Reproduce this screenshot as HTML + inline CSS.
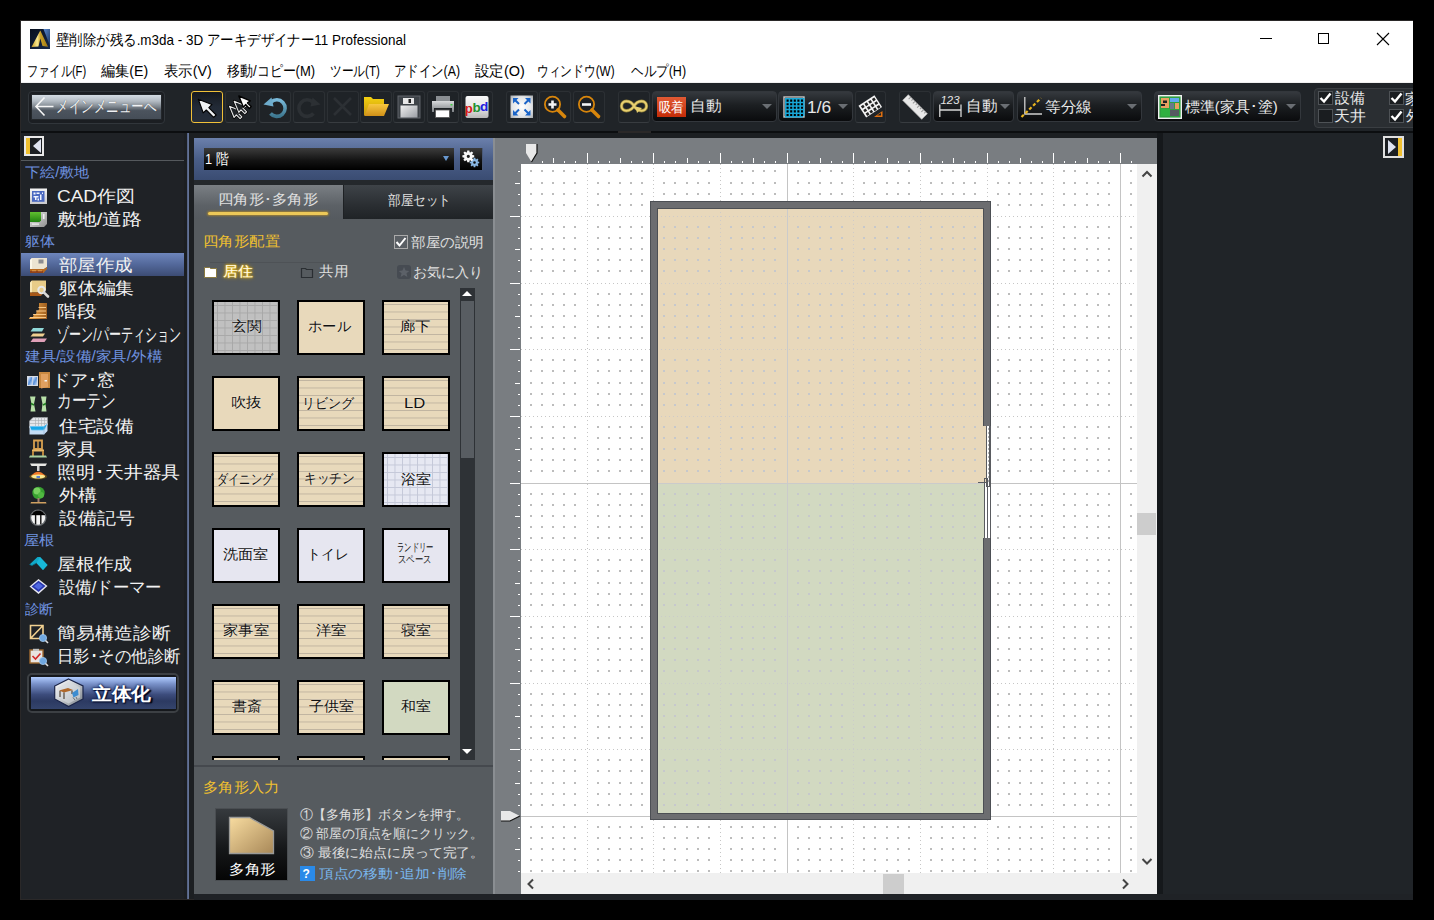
<!DOCTYPE html><html><head><meta charset="utf-8"><style>

*{box-sizing:border-box;margin:0;padding:0}
html,body{width:1434px;height:920px;overflow:hidden;background:#000}
body{position:relative;font-family:"Liberation Sans",sans-serif}
.a{position:absolute}
.t{position:absolute;white-space:nowrap;line-height:1}

</style></head><body>
<div class="a" style="left:20px;top:20px;width:1394px;height:880px;background:#2a2828"></div>
<div class="a" style="left:21px;top:21px;width:1392px;height:62px;background:#fff"></div>
<svg class="a" style="left:30px;top:29px" width="20" height="20" viewBox="0 0 20 20">
<defs><linearGradient id="ig" x1="0" y1="0" x2="1" y2="1"><stop offset="0" stop-color="#08101e"/><stop offset="1" stop-color="#16284a"/></linearGradient>
<linearGradient id="ib" x1="0" y1="0" x2="1" y2="1"><stop offset="0" stop-color="#5a8ad0"/><stop offset="1" stop-color="#1a3460"/></linearGradient>
<linearGradient id="ia" x1="0" y1="0" x2="1" y2="0"><stop offset="0" stop-color="#c89a20"/><stop offset=".35" stop-color="#f8e890"/><stop offset=".55" stop-color="#c8a028"/><stop offset="1" stop-color="#a07810"/></linearGradient></defs>
<rect width="20" height="20" fill="url(#ig)"/><path d="M13.5 0 L20 0 L20 17 Z" fill="url(#ib)"/>
<path d="M10.3 1.5 L18 17.8 L12.5 17 L10.3 9.5 L8.5 17.5 L1.5 18 Z" fill="url(#ia)"/></svg>
<div class="t" style="left:55.60px;top:32.00px;font-size:15px;color:#000;transform:scaleX(0.8959);transform-origin:0 0;">壁削除が残る.m3da - 3D アーキデザイナー11 Professional</div>
<div class="a" style="left:21px;top:82px;width:1392px;height:1px;background:#f0f0f0"></div>
<div class="a" style="left:1260px;top:38px;width:12px;height:1px;background:#000"></div>
<div class="a" style="left:1318px;top:33px;width:11px;height:11px;border:1px solid #000"></div>
<svg class="a" style="left:1376px;top:32px" width="14" height="14"><path d="M1 1 L13 13 M13 1 L1 13" stroke="#000" stroke-width="1.1"/></svg>
<div class="t" style="left:26.90px;top:63.10px;font-size:15px;color:#000;transform:scaleX(0.7481);transform-origin:0 0;">ファイル(F)</div>
<div class="t" style="left:101.20px;top:63.10px;font-size:15px;color:#000;transform:scaleX(0.9449);transform-origin:0 0;">編集(E)</div>
<div class="t" style="left:163.70px;top:63.10px;font-size:15px;color:#000;transform:scaleX(0.9551);transform-origin:0 0;">表示(V)</div>
<div class="t" style="left:226.90px;top:63.10px;font-size:15px;color:#000;transform:scaleX(0.8663);transform-origin:0 0;">移動/コピー(M)</div>
<div class="t" style="left:329.72px;top:63.10px;font-size:15px;color:#000;transform:scaleX(0.7794);transform-origin:0 0;">ツール(T)</div>
<div class="t" style="left:393.77px;top:63.10px;font-size:15px;color:#000;transform:scaleX(0.8256);transform-origin:0 0;">アドイン(A)</div>
<div class="t" style="left:474.70px;top:63.10px;font-size:15px;color:#000;transform:scaleX(0.9647);transform-origin:0 0;">設定(O)</div>
<div class="t" style="left:537.44px;top:63.10px;font-size:15px;color:#000;transform:scaleX(0.7825);transform-origin:0 0;">ウィンドウ(W)</div>
<div class="t" style="left:630.60px;top:63.10px;font-size:15px;color:#000;transform:scaleX(0.8369);transform-origin:0 0;">ヘルプ(H)</div>
<div class="a" style="left:21px;top:83px;width:1392px;height:48px;background:#202428"></div>
<div class="a" style="left:21px;top:131px;width:597px;height:2px;background:#0c0e10"></div>
<div class="a" style="left:651px;top:131px;width:762px;height:2px;background:#0c0e10"></div>
<div class="a" style="left:28px;top:91px;width:137px;height:33px;border:1px solid #31363b;border-radius:4px;background:#1b1e22"></div>
<div class="a" style="left:31px;top:94px;width:131px;height:26px;background:linear-gradient(#d4dce4,#b4bcc4 25%,#7c848c 50%,#4c545e 65%,#454d57);border:1px solid #23272b"></div>
<svg class="a" style="left:34px;top:96px" width="22" height="22"><path d="M19.5 10.5 H2.5 M10.5 1.5 L2 10.5 L10.5 19.5" fill="none" stroke="#f6f6f6" stroke-width="1.6"/></svg>
<div class="t" style="left:56.12px;top:97.50px;font-size:17px;color:#f0f2f4;transform:scaleX(0.7396);transform-origin:0 0;text-shadow:0 0 1px rgba(40,44,50,.8)">メインメニューへ</div>
<div class="a" style="left:191px;top:91px;width:32px;height:32px;border:1.5px solid #f0c038;border-radius:3px;background:linear-gradient(#15191f,#222a36 50%,#262e3a)"></div>
<div class="a" style="left:225px;top:91px;width:32px;height:32px;border:1px solid #2c3034;border-bottom-color:#383c40;border-radius:3px;background:#1f2327;"></div>
<div class="a" style="left:259px;top:91px;width:32px;height:32px;border:1px solid #2c3034;border-bottom-color:#383c40;border-radius:3px;background:#1f2327;"></div>
<div class="a" style="left:293px;top:91px;width:32px;height:32px;border:1px solid #2c3034;border-bottom-color:#383c40;border-radius:3px;background:#1f2327;"></div>
<div class="a" style="left:327px;top:91px;width:32px;height:32px;border:1px solid #2c3034;border-bottom-color:#383c40;border-radius:3px;background:#1f2327;"></div>
<div class="a" style="left:360px;top:91px;width:32px;height:32px;border:1px solid #2c3034;border-bottom-color:#383c40;border-radius:3px;background:#1f2327;"></div>
<div class="a" style="left:393px;top:91px;width:32px;height:32px;border:1px solid #2c3034;border-bottom-color:#383c40;border-radius:3px;background:#1f2327;"></div>
<div class="a" style="left:427px;top:91px;width:32px;height:32px;border:1px solid #2c3034;border-bottom-color:#383c40;border-radius:3px;background:#1f2327;"></div>
<div class="a" style="left:461px;top:91px;width:32px;height:32px;border:1px solid #2c3034;border-bottom-color:#383c40;border-radius:3px;background:#1f2327;"></div>
<svg class="a" style="left:191px;top:91px" width="32" height="32"><path d="M7.3 8.3 L20.9 13.6 L17.8 16.6 L25.2 24 L22.6 26.4 L15.3 19 L12.2 21.8 Z" fill="#eef0f2" stroke="#000" stroke-width="1.1" stroke-linejoin="round"/></svg>
<svg class="a" style="left:225px;top:91px" width="32" height="32"><g stroke-linejoin="round"><path d="M4.50 15.30 L9.10 26.50 L11.30 23.90 L15.10 27.70 L16.90 25.90 L13.20 22.20 L16.10 20.10 Z" fill="#1f2327" stroke="#000" stroke-width="2.6"/><path d="M4.50 15.30 L9.10 26.50 L11.30 23.90 L15.10 27.70 L16.90 25.90 L13.20 22.20 L16.10 20.10 Z" fill="#1f2327" stroke="#e8e8e8" stroke-width="1.1"/><path d="M9.20 10.20 L13.80 21.40 L16.00 18.80 L19.80 22.60 L21.60 20.80 L17.90 17.10 L20.80 15.00 Z" fill="none" stroke="#000" stroke-width="2.6"/><path d="M9.20 10.20 L13.80 21.40 L16.00 18.80 L19.80 22.60 L21.60 20.80 L17.90 17.10 L20.80 15.00 Z" fill="#1f2327" stroke="#e8e8e8" stroke-width="1.1"/><path d="M13.80 5.00 L18.40 16.20 L20.60 13.60 L24.40 17.40 L26.20 15.60 L22.50 11.90 L25.40 9.80 Z" fill="#fafafa" stroke="#000" stroke-width="1.4"/></g></svg>
<svg class="a" style="left:259px;top:91px" width="32" height="32"><defs><linearGradient id="ug" x1="0" y1="0" x2="0" y2="1"><stop offset="0" stop-color="#78b8d8"/><stop offset="1" stop-color="#3e7890"/></linearGradient></defs><path d="M12 11.2 A8.3 8.3 0 1 1 11.5 22.5" fill="none" stroke="url(#ug)" stroke-width="3.6"/><path d="M4.5 13.5 L12.5 6.5 L14.5 15.5 Z" fill="#6eaccc"/></svg>
<svg class="a" style="left:293px;top:91px" width="32" height="32"><path d="M20 11.2 A8.3 8.3 0 1 0 20.5 22.5" fill="none" stroke="#2c3034" stroke-width="3.6"/><path d="M27.5 13.5 L19.5 6.5 L17.5 15.5 Z" fill="#2c3034"/></svg>
<svg class="a" style="left:327px;top:91px" width="32" height="32"><path d="M7 7 L24 24 M24 7 L7 24" stroke="#2c3034" stroke-width="2.6"/></svg>
<svg class="a" style="left:360px;top:91px" width="32" height="32"><defs><linearGradient id="fo" x1="0" y1="0" x2="0" y2="1"><stop offset="0" stop-color="#f8c840"/><stop offset="1" stop-color="#d09018"/></linearGradient><linearGradient id="fb" x1="0" y1="0" x2="0" y2="1"><stop offset="0" stop-color="#f4d010"/><stop offset="1" stop-color="#c89810"/></linearGradient></defs><path d="M4 6 L11 6 L13 8 L24 8 L24 24.5 L4 24.5 Z" fill="url(#fb)"/><path d="M9 13 L29 13 L24 25 L4.5 25 Z" fill="url(#fo)"/></svg>
<svg class="a" style="left:393px;top:91px" width="32" height="32"><defs><linearGradient id="fl" x1="0" y1="0" x2="1" y2="1"><stop offset="0" stop-color="#f0f0f0"/><stop offset="1" stop-color="#9a9ea4"/></linearGradient></defs><rect x="5" y="5" width="22" height="22" fill="#3e4348" stroke="#60656a" stroke-width="1"/><rect x="10" y="7" width="11" height="6" fill="#e8e8e8"/><rect x="15.5" y="8" width="2.5" height="4" fill="#222"/><rect x="7.5" y="14.5" width="17" height="12" fill="url(#fl)"/></svg>
<svg class="a" style="left:427px;top:91px" width="32" height="32"><defs><linearGradient id="pr" x1="0" y1="0" x2="0" y2="1"><stop offset="0" stop-color="#d8dadc"/><stop offset="1" stop-color="#7c8084"/></linearGradient></defs><rect x="9" y="5" width="14" height="5" fill="#8a8e92"/><path d="M5 10 H27 V21 H25 V17 H7 V21 H5 Z" fill="url(#pr)"/><rect x="8.5" y="19" width="14" height="7.5" fill="#fff" stroke="#555" stroke-width=".8"/><rect x="23.5" y="13" width="2" height="1.5" fill="#40d040"/></svg>
<svg class="a" style="left:461px;top:91px" width="32" height="32"><defs><linearGradient id="pb" x1="0" y1="0" x2="0" y2="1"><stop offset="0" stop-color="#fafafa"/><stop offset=".6" stop-color="#e0e0e0"/><stop offset="1" stop-color="#b8b8b8"/></linearGradient></defs><rect x="4.5" y="5" width="23" height="22" rx="2" fill="url(#pb)"/><text x="3.8" y="21.5" font-family="Liberation Sans" font-weight="bold" font-size="13.5" fill="#d81818" textLength="8" lengthAdjust="spacingAndGlyphs">p</text><text x="11.5" y="20.5" font-family="Liberation Sans" font-weight="bold" font-size="13.5" fill="#209030">b</text><text x="19" y="19.5" font-family="Liberation Sans" font-weight="bold" font-size="13.5" fill="#2020e0">d</text></svg>
<div class="a" style="left:506px;top:91px;width:32px;height:32px;border:1px solid #2c3034;border-bottom-color:#383c40;border-radius:3px;background:#1f2327;"></div>
<div class="a" style="left:539px;top:91px;width:32px;height:32px;border:1px solid #2c3034;border-bottom-color:#383c40;border-radius:3px;background:#1f2327;"></div>
<div class="a" style="left:573px;top:91px;width:32px;height:32px;border:1px solid #2c3034;border-bottom-color:#383c40;border-radius:3px;background:#1f2327;"></div>
<svg class="a" style="left:506px;top:91px" width="32" height="32"><defs><radialGradient id="fit" cx=".5" cy=".5" r=".7"><stop offset="0" stop-color="#ffffff"/><stop offset=".6" stop-color="#e4e6e8"/><stop offset="1" stop-color="#a8acb0"/></radialGradient></defs><rect x="4.5" y="4.5" width="22.5" height="22.5" fill="url(#fit)"/><g stroke="#1a64c8" stroke-width="2" fill="none"><path d="M8 8 L13 13 M23.5 8 L18.5 13 M8 23.5 L13 18.5 M23.5 23.5 L18.5 18.5"/></g><g fill="#1a64c8"><path d="M7 7 H12.5 L7 12.5 Z M24.5 7 H19 L24.5 12.5 Z M7 24.5 H12.5 L7 19 Z M24.5 24.5 H19 L24.5 19 Z"/></g></svg>
<svg class="a" style="left:539px;top:91px" width="32" height="32"><circle cx="13.5" cy="13.3" r="7.6" fill="#1d2024" stroke="#d8860c" stroke-width="1.8"/><path d="M19 19 L25.5 25.5" stroke="#d8860c" stroke-width="3.6" stroke-linecap="round"/><path d="M13.5 9.5 V17.5 M9.5 13.5 H17.5" stroke="#f4f4f4" stroke-width="2.6"/></svg>
<svg class="a" style="left:573px;top:91px" width="32" height="32"><circle cx="13.5" cy="13.3" r="7.6" fill="#1d2024" stroke="#d8860c" stroke-width="1.8"/><path d="M19 19 L25.5 25.5" stroke="#d8860c" stroke-width="3.6" stroke-linecap="round"/><path d="M9 13.5 H18" stroke="#f4f4f4" stroke-width="2.6"/></svg>
<div class="a" style="left:618px;top:91px;width:32px;height:32px;border:1px solid #2c3034;border-bottom-color:#383c40;border-radius:3px;background:#1f2327;"></div>
<svg class="a" style="left:618px;top:91px" width="32" height="32"><path d="M16 15 C12.5 9, 3.5 8.5, 3.5 15 C3.5 21.5, 12.5 21, 16 15 C19.5 9, 28.5 8.5, 28.5 15 C28.5 21.5, 19.5 21, 16 15" fill="none" stroke="#8a7a38" stroke-width="3.4"/><path d="M16 15 C12.5 9, 3.5 8.5, 3.5 15 C3.5 21.5, 12.5 21, 16 15 C19.5 9, 28.5 8.5, 28.5 15 C28.5 21.5, 19.5 21, 16 15" fill="none" stroke="#e8d070" stroke-width="2"/><path d="M17.5 15.5 L24 17 L19 22 Z" fill="#e8d070"/></svg>
<div class="a" style="left:652px;top:91px;width:125px;height:31px;border:1px solid #33373c;border-radius:4px;background:linear-gradient(#35393e,#1c1f22 45%,#0a0b0d)"></div>
<div class="a" style="left:657px;top:97px;width:29px;height:20px;background:linear-gradient(#e25a34,#c42c08)"></div>
<div class="t" style="left:659.00px;top:99.70px;font-size:14px;color:#fff;transform:scaleX(0.8852);transform-origin:0 0;">吸着</div>
<div class="t" style="left:689.51px;top:98.20px;font-size:15px;color:#e8e8e8;transform:scaleX(1.0444);transform-origin:0 0;">自動</div>
<div class="a" style="left:762px;top:104px;width:0;height:0;border-left:5.5px solid transparent;border-right:5.5px solid transparent;border-top:5.5px solid #6a6e73"></div>
<div class="a" style="left:778px;top:91px;width:75px;height:31px;border:1px solid #33373c;border-radius:4px;background:linear-gradient(#35393e,#1c1f22 45%,#0a0b0d)"></div>
<svg class="a" style="left:783px;top:96px" width="22" height="22"><rect x="1" y="1" width="20" height="20" fill="#000" stroke="#c8c8c8" stroke-width="1.4"/><g stroke="#18a8d8" stroke-width="1.5"><path d="M2.8 2 V20 M2 2.8 H20"/><path d="M6.4 2 V20 M2 6.4 H20"/><path d="M10.0 2 V20 M2 10.0 H20"/><path d="M13.6 2 V20 M2 13.6 H20"/><path d="M17.2 2 V20 M2 17.2 H20"/><path d="M20.8 2 V20 M2 20.8 H20"/></g></svg>
<div class="t" style="left:807.31px;top:99.80px;font-size:16px;color:#e8e8e8;transform:scaleX(1.0857);transform-origin:0 0;">1/6</div>
<div class="a" style="left:838px;top:104px;width:0;height:0;border-left:5.5px solid transparent;border-right:5.5px solid transparent;border-top:5.5px solid #6a6e73"></div>
<div class="a" style="left:855px;top:91px;width:31px;height:32px;border:1px solid #2c3034;border-bottom-color:#383c40;border-radius:3px;background:#1f2327;"></div>
<svg class="a" style="left:855px;top:91px" width="32" height="32"><g transform="rotate(-33 15 15)"><rect x="5.5" y="8.5" width="19" height="14" fill="#f4f4f4"/><g fill="#222"><rect x="7.2" y="10.2" width="2.8" height="2.8"/><rect x="7.2" y="14.6" width="2.8" height="2.8"/><rect x="7.2" y="19.0" width="2.8" height="2.8"/><rect x="11.6" y="10.2" width="2.8" height="2.8"/><rect x="11.6" y="14.6" width="2.8" height="2.8"/><rect x="11.6" y="19.0" width="2.8" height="2.8"/><rect x="16.0" y="10.2" width="2.8" height="2.8"/><rect x="16.0" y="14.6" width="2.8" height="2.8"/><rect x="16.0" y="19.0" width="2.8" height="2.8"/><rect x="20.4" y="10.2" width="2.8" height="2.8"/><rect x="20.4" y="14.6" width="2.8" height="2.8"/><rect x="20.4" y="19.0" width="2.8" height="2.8"/></g></g><path d="M19 26 L27.5 26 L27.5 20 Z" fill="#e07010"/><path d="M22 24.5 L26 24.5 L26 22 Z" fill="#1d2024"/></svg>
<div class="a" style="left:899px;top:91px;width:32px;height:32px;border:1px solid #2c3034;border-bottom-color:#383c40;border-radius:3px;background:#1f2327;"></div>
<svg class="a" style="left:899px;top:91px" width="32" height="32"><g transform="rotate(45 16 16)"><rect x="2.5" y="12" width="27" height="8" fill="#e8e8e8" stroke="#bbb" stroke-width=".6"/><g stroke="#9a9a9a" stroke-width="1"><path d="M6 12 V15 M9 12 V14 M12 12 V15 M15 12 V14 M18 12 V15 M21 12 V14 M24 12 V15 M27 12 V14"/></g></g></svg>
<div class="a" style="left:933px;top:91px;width:81px;height:31px;border:1px solid #33373c;border-radius:4px;background:linear-gradient(#35393e,#1c1f22 45%,#0a0b0d)"></div>
<svg class="a" style="left:936px;top:94px" width="28" height="26"><text x="4.5" y="10" font-family="Liberation Sans" font-style="italic" font-size="10.5" fill="#e4e4e4" textLength="19" lengthAdjust="spacingAndGlyphs">123</text><path d="M3.8 10.5 V23 M25 10.5 V23 M3.8 16 H25" stroke="#d8d8d8" stroke-width="1.3" fill="none"/></svg>
<div class="t" style="left:966.42px;top:97.50px;font-size:15px;color:#e8e8e8;transform:scaleX(1.0407);transform-origin:0 0;">自動</div>
<div class="a" style="left:1000px;top:104px;width:0;height:0;border-left:5.5px solid transparent;border-right:5.5px solid transparent;border-top:5.5px solid #6a6e73"></div>
<div class="a" style="left:1017px;top:91px;width:125px;height:31px;border:1px solid #33373c;border-radius:4px;background:linear-gradient(#35393e,#1c1f22 45%,#0a0b0d)"></div>
<svg class="a" style="left:1020px;top:95px" width="24" height="24"><path d="M4.8 2 V19 H22" stroke="#d0d0d0" stroke-width="1.3" fill="none"/><path d="M1.5 22 L21 3" stroke="#e8b420" stroke-width="2.2" stroke-dasharray="3.2 2.2"/></svg>
<div class="t" style="left:1045.25px;top:99.30px;font-size:15px;color:#e8e8e8;transform:scaleX(1.0465);transform-origin:0 0;">等分線</div>
<div class="a" style="left:1127px;top:104px;width:0;height:0;border-left:5.5px solid transparent;border-right:5.5px solid transparent;border-top:5.5px solid #6a6e73"></div>
<div class="a" style="left:1154px;top:91px;width:147px;height:31px;border:1px solid #33373c;border-radius:4px;background:linear-gradient(#35393e,#1c1f22 45%,#0a0b0d)"></div>
<svg class="a" style="left:1158px;top:95px" width="24" height="24"><rect x=".7" y=".7" width="22.6" height="22.6" fill="#30a040" stroke="#f0f0f0" stroke-width="1.4"/><rect x="3" y="3" width="8" height="10" fill="#e8a060"/><rect x="5" y="5.5" width="4" height="2.5" fill="#222"/><rect x="3" y="9" width="4" height="2" fill="#222"/><rect x="12" y="3" width="9" height="4" fill="#60a8f0"/><rect x="12" y="8" width="4" height="6" fill="#6a7a8a"/><rect x="17" y="8" width="4" height="6" fill="#e8a060"/><rect x="3" y="14" width="9" height="7" fill="#30b040"/><rect x="12" y="15" width="9" height="6" fill="#555a60"/></svg>
<div class="t" style="left:1184.70px;top:99.40px;font-size:15px;color:#e8e8e8;">標準(家具･塗)</div>
<div class="a" style="left:1286px;top:104px;width:0;height:0;border-left:5.5px solid transparent;border-right:5.5px solid transparent;border-top:5.5px solid #6a6e73"></div>
<div class="a" style="left:1314px;top:88px;width:120px;height:40px;border:1px solid #3a3e42;border-radius:4px;background:#2a2e32"></div>
<div class="a" style="left:1318px;top:91px;width:15px;height:14px;border:1px solid #4e5256;background:#1a1d20"></div>
<svg class="a" style="left:1318px;top:91px" width="15" height="14"><path d="M2.5 7 L6 10.5 L12.5 2.5" fill="none" stroke="#fff" stroke-width="2.4"/></svg>
<div class="a" style="left:1318px;top:109px;width:15px;height:14px;border:1px solid #4e5256;background:#1a1d20"></div>
<div class="a" style="left:1389px;top:91px;width:15px;height:14px;border:1px solid #4e5256;background:#1a1d20"></div>
<svg class="a" style="left:1389px;top:91px" width="15" height="14"><path d="M2.5 7 L6 10.5 L12.5 2.5" fill="none" stroke="#fff" stroke-width="2.4"/></svg>
<div class="a" style="left:1389px;top:109px;width:15px;height:14px;border:1px solid #4e5256;background:#1a1d20"></div>
<svg class="a" style="left:1389px;top:109px" width="15" height="14"><path d="M2.5 7 L6 10.5 L12.5 2.5" fill="none" stroke="#fff" stroke-width="2.4"/></svg>
<div class="t" style="left:1334.80px;top:90.20px;font-size:15px;color:#e8e8e8;transform:scaleX(0.9900);transform-origin:0 0;">設備</div>
<div class="t" style="left:1333.74px;top:108.00px;font-size:15px;color:#e8e8e8;transform:scaleX(1.0607);transform-origin:0 0;">天井</div>
<div class="t" style="left:1405.00px;top:91.20px;font-size:15px;color:#e8e8e8;">家</div>
<div class="t" style="left:1406.00px;top:108.00px;font-size:15px;color:#e8e8e8;">外</div>
<div class="a" style="left:21px;top:133px;width:163px;height:766px;background:#1f2226"></div>
<div class="a" style="left:184px;top:133px;width:10px;height:766px;background:#1c1f22"></div>
<div class="a" style="left:187px;top:133px;width:2px;height:766px;background:linear-gradient(90deg,#4e5c7c,#6a7aa0)"></div>
<div class="a" style="left:24px;top:136px;width:20px;height:20px;border:2px solid #e8e8e8;background:#1b1e22"></div>
<div class="a" style="left:26px;top:138px;width:4px;height:16px;background:#f0c030"></div>
<div class="a" style="left:33px;top:139px;width:0;height:0;border-top:7px solid transparent;border-bottom:7px solid transparent;border-right:8px solid #dfe3f0"></div>
<div class="a" style="left:21px;top:160px;width:163px;height:1px;background:#55595d"></div>
<div class="t" style="left:25.30px;top:165.30px;font-size:14px;color:#6f93e0;transform:scaleX(1.0783);transform-origin:0 0;">下絵/敷地</div>
<svg class="a" style="left:29px;top:187px;overflow:visible" width="20" height="19"><defs><linearGradient id="ic1" x1="0" y1="0" x2="0" y2="1"><stop offset="0" stop-color="#f4f4f4"/><stop offset="1" stop-color="#c8c8cc"/></linearGradient></defs><rect x="1" y="1.5" width="17" height="15.5" fill="url(#ic1)"/><rect x="3" y="4" width="12.5" height="10.8" fill="#4a68c0"/><path d="M4.5 5.5h2v2h-2zM7.5 5.5h3v1.5h-3zM4.5 9h5v1.5h-2v2.5h-1.5v-2.5h-1.5zM11 7.5h1.5v5.5h-1.5zM13 5.5h1v1.5h-1zM8.5 11.5h1.5v2h-1.5z" fill="#f0f4ff"/></svg>
<div class="t" style="left:57.39px;top:187.50px;font-size:17px;color:#f2f2f2;transform:scaleX(1.1149);transform-origin:0 0;">CAD作図</div>
<svg class="a" style="left:29px;top:210px;overflow:visible" width="20" height="19"><defs><linearGradient id="ic2" x1="0" y1="0" x2="1" y2="1"><stop offset="0" stop-color="#e8e8e8"/><stop offset="1" stop-color="#909090"/></linearGradient><linearGradient id="ic2g" x1="0" y1="0" x2="0" y2="1"><stop offset="0" stop-color="#60c030"/><stop offset="1" stop-color="#208010"/></linearGradient></defs><path d="M1 2h17v12l-3 3h-14z" fill="url(#ic2)"/><path d="M1 2h11v8.5l-1.5 1.5h-9.5z" fill="url(#ic2g)"/><rect x="14" y="4" width="1.5" height="5" fill="#f0f0f0"/><rect x="3" y="13.5" width="7" height="1.2" fill="#f4f4f4"/></svg>
<div class="t" style="left:57.33px;top:210.50px;font-size:17px;color:#f2f2f2;transform:scaleX(1.1690);transform-origin:0 0;">敷地/道路</div>
<div class="t" style="left:25.30px;top:234.30px;font-size:14px;color:#6f93e0;transform:scaleX(1.0778);transform-origin:0 0;">躯体</div>
<div class="a" style="left:21px;top:253px;width:163px;height:23px;background:linear-gradient(#6e86bc,#53689a 50%,#3c4c74)"></div>
<svg class="a" style="left:29px;top:256px;overflow:visible" width="20" height="19"><path d="M3 2 L18 2 L18 11 L15 13 L1 13 L1 4 Z" fill="#ece4d2"/><path d="M1 4 L3 2 L3 13 L1 13 Z" fill="#fbf6e8"/><rect x="9.5" y="3.5" width="5" height="4" fill="#8c8c90"/><path d="M1 13 H15 L18 11 V13 L14.5 17 H1 Z" fill="#b86a20"/><path d="M3 14.5 H7 V15.5 H3Z M9 14.5 H13 V15.5 H9Z" fill="#f0b060"/><path d="M1 16 H14" stroke="#6a1a10" stroke-width="1"/></svg>
<div class="t" style="left:58.50px;top:256.50px;font-size:17px;color:#f2f2f2;transform:scaleX(1.0882);transform-origin:0 0;">部屋作成</div>
<svg class="a" style="left:29px;top:279px;overflow:visible" width="20" height="19"><path d="M3 1.5 L17 1.5 L17 11 L14.5 13.5 L1 13.5 L1 3.5 Z" fill="#e8cc88"/><path d="M1 3.5 L3 1.5 L3 13.5 L1 13.5 Z" fill="#f8e8b8"/><path d="M1 13.5 H14.5 L12 17 H1 Z" fill="#a85818"/><circle cx="12.5" cy="11" r="3.2" fill="none" stroke="#e8e8e8" stroke-width="2"/><path d="M14.8 13.3 L19 17.5" stroke="#d8d8d8" stroke-width="2.6" stroke-linecap="round"/></svg>
<div class="t" style="left:58.50px;top:279.50px;font-size:17px;color:#f2f2f2;transform:scaleX(1.1045);transform-origin:0 0;">躯体編集</div>
<svg class="a" style="left:29px;top:302px;overflow:visible" width="20" height="19"><defs><linearGradient id="ic6" x1="0" y1="0" x2="1" y2="0"><stop offset="0" stop-color="#f0a848"/><stop offset="1" stop-color="#a06020"/></linearGradient></defs><path d="M10 1 H18 V17 H0 L1 15 H4 L5 12 H7 L8 8.5 H9.5 L10.5 5 H10 Z" fill="url(#ic6)"/><path d="M1 15.5 H17 M4 12.5 H17 M7 9 H17 M9.5 5.5 H17" stroke="#ffd090" stroke-width=".9"/></svg>
<div class="t" style="left:57.34px;top:302.50px;font-size:17px;color:#f2f2f2;transform:scaleX(1.1625);transform-origin:0 0;">階段</div>
<svg class="a" style="left:29px;top:325px;overflow:visible" width="20" height="19"><path d="M4 3 H15 L13 6.5 H1.5 Z" fill="#90d8d8"/><path d="M4 8.5 H16 L14 11.5 H1.5 Z" fill="#f0d090"/><path d="M4 13.5 H18 L15.5 17 H1.5 Z" fill="#e0a0b8"/></svg>
<div class="t" style="left:57.23px;top:325.00px;font-size:19px;color:#f2f2f2;transform:scaleX(0.6351);transform-origin:0 0;">ゾーン/パーティション</div>
<div class="t" style="left:25.30px;top:349.30px;font-size:14px;color:#6f93e0;transform:scaleX(1.1097);transform-origin:0 0;">建具/設備/家具/外構</div>
<svg class="a" style="left:29px;top:371px;overflow:visible" width="20" height="19"><defs><linearGradient id="ic9" x1="0" y1="0" x2="1" y2="1"><stop offset="0" stop-color="#e8f0ff"/><stop offset=".5" stop-color="#5a90d8"/><stop offset="1" stop-color="#d0e0f8"/></linearGradient></defs><rect x="-2" y="5" width="11" height="10" fill="#d8dce4"/><rect x="-1" y="6" width="4.3" height="8" fill="url(#ic9)"/><rect x="3.8" y="6" width="4.3" height="8" fill="url(#ic9)"/><path d="M10 1 H21 V17 H10 Z" fill="#c88840"/><path d="M12 3 H19 V16 L12 17.5 Z" fill="#e0a060"/><rect x="15.5" y="9" width="2.5" height="1.5" fill="#f0f0f0"/></svg>
<div class="t" style="left:52.19px;top:371.50px;font-size:17px;color:#f2f2f2;transform:scaleX(1.0509);transform-origin:0 0;">ドア･窓</div>
<svg class="a" style="left:29px;top:394px;overflow:visible" width="20" height="19"><path d="M1 2.5 H6.5 L5 10 L6.5 17.5 H1.5 L2.5 10 Z" fill="#b8e0a8"/><path d="M12 2.5 H17.5 L16.5 10 L17.5 17.5 H12.5 L13.5 10 Z" fill="#b8e0a8"/><path d="M2 9.5 L5 11 M14 11 L17 9.5" stroke="#208020" stroke-width="1.6"/></svg>
<div class="t" style="left:56.95px;top:391.00px;font-size:19px;color:#f2f2f2;transform:scaleX(0.7736);transform-origin:0 0;">カーテン</div>
<svg class="a" style="left:29px;top:417px;overflow:visible" width="20" height="19"><path d="M4 0.5 H18.5 V8 L15 11 H0.5 V4 Z" fill="#e4e6ea" stroke="#a0a4a8" stroke-width=".6"/><path d="M6.5 0.5 V10 M9.5 0.5 V10 M12.5 0.5 V10 M15.5 0.5 V10 M1 3.5 H18 M1 6.5 H18" stroke="#a8acb0" stroke-width=".6"/><path d="M0.5 9 H15 L18.5 6 V14 L15 17.5 H0.5 Z" fill="#c4dcf4"/><path d="M1 9.5 L15 9.5 L18 7 L16 11.5 L14.5 13 H2.5 Z" fill="#18a8e8"/><path d="M2.5 13 H14.5 L16 11.5" stroke="#6ac0f0" stroke-width=".8" fill="none"/><path d="M15 17.5 V9.5" stroke="#90b0d0" stroke-width=".6"/></svg>
<div class="t" style="left:58.50px;top:417.50px;font-size:17px;color:#f2f2f2;transform:scaleX(1.0956);transform-origin:0 0;">住宅設備</div>
<svg class="a" style="left:29px;top:440px;overflow:visible" width="20" height="19"><path d="M5 0.5 H13 V9 H5 Z" fill="none" stroke="#d8a050" stroke-width="1.8"/><path d="M9 1 V9" stroke="#d8a050" stroke-width="1.4"/><path d="M3 9.5 H15 V11.5 H3 Z" fill="#e8b868"/><path d="M4 11 V16.5 M14 11 V16.5" stroke="#c89040" stroke-width="1.8"/><path d="M1 15.5 H17 L18 17.5 H0 Z" fill="#a8d0a0"/></svg>
<div class="t" style="left:57.35px;top:440.50px;font-size:17px;color:#f2f2f2;transform:scaleX(1.1500);transform-origin:0 0;">家具</div>
<svg class="a" style="left:29px;top:463px;overflow:visible" width="20" height="19"><path d="M1 0.5 H18 L16.5 3 H2.5 Z" fill="#e8e8e4"/><rect x="8" y="3" width="2.5" height="5" fill="#d0d0d0"/><ellipse cx="9.2" cy="13.5" rx="9" ry="3" fill="#806010" opacity=".6"/><path d="M2 13 Q9 4.5 16.5 13 Z" fill="#f07828"/><ellipse cx="9.2" cy="13.5" rx="7" ry="2" fill="#f8e890"/><rect x="7.5" y="13" width="3.5" height="2" fill="#5a80d0"/></svg>
<div class="t" style="left:57.39px;top:463.50px;font-size:17px;color:#f2f2f2;transform:scaleX(1.1110);transform-origin:0 0;">照明･天井器具</div>
<svg class="a" style="left:29px;top:486px;overflow:visible" width="20" height="19"><circle cx="9.5" cy="7" r="6.2" fill="#38a030"/><circle cx="8" cy="5" r="3.5" fill="#78d060"/><circle cx="12" cy="9" r="3" fill="#50b840"/><rect x="8.5" y="12" width="2" height="4.5" fill="#a08070"/><path d="M2 16 H17 L17.5 17.5 H1.5 Z" fill="#d0a060"/></svg>
<div class="t" style="left:58.50px;top:486.50px;font-size:17px;color:#f2f2f2;transform:scaleX(1.1152);transform-origin:0 0;">外構</div>
<svg class="a" style="left:29px;top:509px;overflow:visible" width="20" height="19"><circle cx="9.2" cy="8.8" r="8.3" fill="#6a6e72"/><circle cx="9.2" cy="8.8" r="7" fill="#f4f4f4"/><path d="M3 5.2 A7 7 0 0 1 15.4 5.2 Z" fill="#000"/><rect x="2.5" y="5" width="13.4" height="1.2" fill="#000"/><path d="M6.6 6 V15.2 M11.8 6 V15.2" stroke="#111" stroke-width="1.4"/></svg>
<div class="t" style="left:58.50px;top:509.50px;font-size:17px;color:#f2f2f2;transform:scaleX(1.1119);transform-origin:0 0;">設備記号</div>
<div class="t" style="left:24.20px;top:533.30px;font-size:14px;color:#6f93e0;transform:scaleX(1.1038);transform-origin:0 0;">屋根</div>
<svg class="a" style="left:29px;top:555px;overflow:visible" width="20" height="19"><path d="M0.5 9.5 L8.5 2 L11 2 L18.5 10 L14 15 L7.5 8 L3 10.5 Z" fill="#10a8c8"/><path d="M11 2 L18.5 10 L14 15 L7.5 8 Z" fill="#18b8d8"/><path d="M0.5 9.5 L3 10.5 L7.5 8" stroke="#087088" stroke-width=".8" fill="none"/></svg>
<div class="t" style="left:57.39px;top:555.50px;font-size:17px;color:#f2f2f2;transform:scaleX(1.1060);transform-origin:0 0;">屋根作成</div>
<svg class="a" style="left:29px;top:578px;overflow:visible" width="20" height="19"><path d="M0.5 8.5 L9.5 1 L18.5 8 L9.5 16 Z" fill="#e8e8f0"/><path d="M2.5 8.5 L9.5 2.8 L16.5 8 L9.5 14 Z" fill="#2838b0"/><path d="M5 8.3 L9.5 4.8 L14 8 L9.5 11.8 Z" fill="#5068e0"/></svg>
<div class="t" style="left:58.50px;top:578.50px;font-size:17px;color:#f2f2f2;transform:scaleX(0.9623);transform-origin:0 0;">設備/ドーマー</div>
<div class="t" style="left:25.30px;top:602.30px;font-size:14px;color:#6f93e0;transform:scaleX(1.0250);transform-origin:0 0;">診断</div>
<svg class="a" style="left:29px;top:624px;overflow:visible" width="20" height="19"><path d="M1.5 1.5 H14 V14.5 H1.5 Z M1.5 14.5 L14 1.5" fill="none" stroke="#f0d090" stroke-width="1.6"/><circle cx="14" cy="14" r="3.6" fill="#70a8e0" stroke="#a0c8f0" stroke-width=".8"/><path d="M16.5 16.5 L19 19" stroke="#e0e0e0" stroke-width="1.6"/></svg>
<div class="t" style="left:57.39px;top:624.50px;font-size:17px;color:#f2f2f2;transform:scaleX(1.1130);transform-origin:0 0;">簡易構造診断</div>
<svg class="a" style="left:29px;top:647px;overflow:visible" width="20" height="19"><rect x="1" y="3" width="13" height="13" fill="#e8e4e0" stroke="#a06a30" stroke-width="1.4"/><rect x="4" y="1.8" width="6" height="2.2" fill="#c0c0c0"/><path d="M3.5 9 L6.5 12 L11.5 6.5" stroke="#d02828" stroke-width="1.6" fill="none"/><circle cx="14" cy="14" r="3.6" fill="#70a8e0" stroke="#a0c8f0" stroke-width=".8"/><path d="M16.5 16.5 L19 19" stroke="#e0e0e0" stroke-width="1.6"/></svg>
<div class="t" style="left:56.57px;top:647.50px;font-size:17px;color:#f2f2f2;transform:scaleX(0.9640);transform-origin:0 0;">日影･その他診断</div>
<div class="a" style="left:27px;top:673px;width:152px;height:40px;border:2px solid #3c4044;border-radius:5px;background:#15181c"></div>
<div class="a" style="left:31px;top:677px;width:145px;height:32px;background:linear-gradient(#b0ccff,#7890c8 22%,#3c4c7c 55%,#2c3a62 75%,#34446c)"></div>
<svg class="a" style="left:54px;top:678px" width="30" height="30"><defs><linearGradient id="hx" x1="0" y1="0" x2="1" y2="1"><stop offset="0" stop-color="#ffffff"/><stop offset=".5" stop-color="#c8ccd0"/><stop offset="1" stop-color="#707880"/></linearGradient></defs><path d="M14.6 1 L29 8 L29 21 L14.6 28.5 L0.7 21 L0.7 8 Z" fill="url(#hx)" stroke="#1a2448" stroke-width="1.2"/><path d="M14.6 4 L26 9.5 L26 19.5 L14.6 25.5 L3.5 19.5 L3.5 9.5 Z" fill="#d8dce0" opacity=".6"/><path d="M5 12.5 L14 10 L19 12 L10 14.5 Z" fill="#b0682a"/><path d="M6 13 V19 M10 14.5 V21 M18 12.5 V16" stroke="#3a2a1a" stroke-width="1"/><path d="M18 15 L24 11 L24.5 17 L19.5 19.5 Z" fill="#3c8cd0"/><path d="M19 19.5 L21 22 M22 19 L23 21" stroke="#505860" stroke-width=".8"/></svg>
<div class="t" style="left:92.00px;top:684.60px;font-size:18px;color:#fff;font-weight:700;transform:scaleX(1.0963);transform-origin:0 0;text-shadow:0 0 2px #0a1a50,0 0 3px #0a1a50,1px 1px 1px #000">立体化</div>
<div class="a" style="left:194px;top:133px;width:299px;height:761px;background:#565b5f"></div>
<div class="a" style="left:194px;top:133px;width:299px;height:5px;background:#1c1f22"></div>
<div class="a" style="left:194px;top:138px;width:299px;height:42px;background:linear-gradient(#6b80ac,#4a5e88 50%,#3a4c72)"></div>
<div class="a" style="left:194px;top:180px;width:299px;height:5px;background:#24282c"></div>
<div class="a" style="left:204px;top:148px;width:250px;height:22px;background:linear-gradient(#3c3c3c,#141414 55%,#000)"></div>
<div class="t" style="left:205.05px;top:151.00px;font-size:15px;color:#fff;transform:scaleX(0.8519);transform-origin:0 0;">1 階</div>
<div class="a" style="left:443px;top:156px;width:0;height:0;border-left:3.5px solid transparent;border-right:3.5px solid transparent;border-top:5px solid #6898d0"></div>
<div class="a" style="left:460px;top:148px;width:23px;height:22px;background:linear-gradient(#3a3a3a,#121212 55%,#000);border-right:1px solid #4a5a7a"></div>
<svg class="a" style="left:460px;top:148px" width="23" height="22"><path d="M17.83 13.42 L19.23 13.66 L19.23 15.34 L17.83 15.58 L17.62 16.09 L18.44 17.24 L17.24 18.44 L16.09 17.62 L15.58 17.83 L15.34 19.23 L13.66 19.23 L13.42 17.83 L12.91 17.62 L11.76 18.44 L10.56 17.24 L11.38 16.09 L11.17 15.58 L9.77 15.34 L9.77 13.66 L11.17 13.42 L11.38 12.91 L10.56 11.76 L11.76 10.56 L12.91 11.38 L13.42 11.17 L13.66 9.77 L15.34 9.77 L15.58 11.17 L16.09 11.38 L17.24 10.56 L18.44 11.76 L17.62 12.91 Z M15.80 14.50 A1.3 1.3 0 1 0 13.20 14.50 A1.3 1.3 0 1 0 15.80 14.50 Z" fill="#8ab8e4" fill-rule="evenodd"/><path d="M12.39 6.97 L14.21 7.25 L14.21 9.35 L12.39 9.63 L12.13 10.25 L13.22 11.73 L11.73 13.22 L10.25 12.13 L9.63 12.39 L9.35 14.21 L7.25 14.21 L6.97 12.39 L6.35 12.13 L4.87 13.22 L3.38 11.73 L4.47 10.25 L4.21 9.63 L2.39 9.35 L2.39 7.25 L4.21 6.97 L4.47 6.35 L3.38 4.87 L4.87 3.38 L6.35 4.47 L6.97 4.21 L7.25 2.39 L9.35 2.39 L9.63 4.21 L10.25 4.47 L11.73 3.38 L13.22 4.87 L12.13 6.35 Z M9.90 8.30 A1.6 1.6 0 1 0 6.70 8.30 A1.6 1.6 0 1 0 9.90 8.30 Z" fill="#f8f8f8" fill-rule="evenodd"/></svg>
<div class="a" style="left:194px;top:185px;width:149px;height:34px;background:linear-gradient(#7a7f84,#5c6166 60%,#555a5f)"></div>
<div class="a" style="left:343px;top:185px;width:150px;height:34px;background:linear-gradient(#3e4348,#2a2e32 60%,#1f2326);border-left:1px solid #1e2124"></div>
<div class="t" style="left:217.80px;top:191.60px;font-size:14px;color:#e0e0e0;transform:scaleX(1.1000);transform-origin:0 0;">四角形･多角形</div>
<div class="t" style="left:388.20px;top:192.60px;font-size:14px;color:#e0e0e0;transform:scaleX(0.9015);transform-origin:0 0;">部屋セット</div>
<div class="a" style="left:208px;top:212px;width:120px;height:3px;background:#ecc858;border-radius:2px;box-shadow:0 0 2px 1px rgba(180,140,40,.7)"></div>
<div class="t" style="left:203.00px;top:234.00px;font-size:14px;color:#f0c030;transform:scaleX(1.1015);transform-origin:0 0;">四角形配置</div>
<div class="a" style="left:394px;top:235px;width:14px;height:14px;border:1px solid #aaa;background:#5a5f64"></div>
<svg class="a" style="left:394px;top:235px" width="14" height="14"><path d="M2.5 7 L5.5 10.5 L11.5 3" fill="none" stroke="#fff" stroke-width="2"/></svg>
<div class="t" style="left:410.80px;top:235.00px;font-size:14px;color:#e0e0e0;transform:scaleX(1.0420);transform-origin:0 0;">部屋の説明</div>
<div class="a" style="left:210px;top:262px;width:123px;height:1px;background:#4e5256"></div>
<svg class="a" style="left:203px;top:266px" width="15" height="13"><path d="M1.5 1.5 H6.5 L7.5 2.5 H13.5 V11.5 H1.5 Z" fill="#fff" stroke="#8a7a40" stroke-width="1"/></svg>
<div class="t" style="left:223.03px;top:264.00px;font-size:14px;color:#fffbe8;transform:scaleX(1.0741);transform-origin:0 0;text-shadow:0 0 1px #f0c020,0 0 2px #f0c020,0 0 3px #d0a010,0 0 4px #d0a010">居住</div>
<svg class="a" style="left:300px;top:267px" width="14" height="12"><path d="M1.5 1.5 H5.5 L6.5 2.5 H12.5 V10.5 H1.5 Z" fill="none" stroke="#2a2e32" stroke-width="1.2"/></svg>
<div class="t" style="left:319.40px;top:264.00px;font-size:14px;color:#e0e0e0;transform:scaleX(1.0444);transform-origin:0 0;">共用</div>
<svg class="a" style="left:397px;top:265px" width="14" height="14"><rect width="14" height="14" rx="3" fill="#464b52"/><path d="M7 2 L8.6 5.6 L12.3 5.9 L9.5 8.3 L10.4 12 L7 10 L3.6 12 L4.5 8.3 L1.7 5.9 L5.4 5.6 Z" fill="#5c6168"/></svg>
<div class="t" style="left:413.09px;top:265.00px;font-size:14px;color:#e0e0e0;transform:scaleX(1.0061);transform-origin:0 0;">お気に入り</div>
<div class="a" style="left:194px;top:286px;width:265px;height:474px;overflow:hidden">
<div class="a" style="left:18px;top:14px;width:68px;height:55px;border:2px solid #000;background-color:#c0c0c0;background-image:linear-gradient(90deg,#a8a8a8 1px,transparent 1px),linear-gradient(#a8a8a8 1px,transparent 1px);background-size:7.5px 7.5px;background-position:3px 3px"></div>
<div class="a" style="left:103px;top:14px;width:68px;height:55px;border:2px solid #000;background:#e8d9bb"></div>
<div class="a" style="left:188px;top:14px;width:68px;height:55px;border:2px solid #000;background-color:#e8d9bb;background-image:linear-gradient(#c0b4a0 1px,transparent 1px);background-size:100% 7.5px;background-position:0 2px"></div>
<div class="a" style="left:18px;top:90px;width:68px;height:55px;border:2px solid #000;background:#e8d9bb"></div>
<div class="a" style="left:103px;top:90px;width:68px;height:55px;border:2px solid #000;background-color:#e8d9bb;background-image:linear-gradient(#c0b4a0 1px,transparent 1px);background-size:100% 7.5px;background-position:0 2px"></div>
<div class="a" style="left:188px;top:90px;width:68px;height:55px;border:2px solid #000;background-color:#e8d9bb;background-image:linear-gradient(#c0b4a0 1px,transparent 1px);background-size:100% 7.5px;background-position:0 2px"></div>
<div class="a" style="left:18px;top:166px;width:68px;height:55px;border:2px solid #000;background-color:#e8d9bb;background-image:linear-gradient(#c0b4a0 1px,transparent 1px);background-size:100% 7.5px;background-position:0 2px"></div>
<div class="a" style="left:103px;top:166px;width:68px;height:55px;border:2px solid #000;background-color:#e8d9bb;background-image:linear-gradient(#c0b4a0 1px,transparent 1px);background-size:100% 7.5px;background-position:0 2px"></div>
<div class="a" style="left:188px;top:166px;width:68px;height:55px;border:2px solid #000;background-color:#e6e8f2;background-image:linear-gradient(90deg,#c4c8d8 1px,transparent 1px),linear-gradient(#c4c8d8 1px,transparent 1px);background-size:7.5px 7.5px;background-position:3px 3px"></div>
<div class="a" style="left:18px;top:242px;width:68px;height:55px;border:2px solid #000;background:#e6e6f0"></div>
<div class="a" style="left:103px;top:242px;width:68px;height:55px;border:2px solid #000;background:#e6e6f0"></div>
<div class="a" style="left:188px;top:242px;width:68px;height:55px;border:2px solid #000;background:#e6e6f0"></div>
<div class="a" style="left:18px;top:318px;width:68px;height:55px;border:2px solid #000;background-color:#e8d9bb;background-image:linear-gradient(#c0b4a0 1px,transparent 1px);background-size:100% 7.5px;background-position:0 2px"></div>
<div class="a" style="left:103px;top:318px;width:68px;height:55px;border:2px solid #000;background-color:#e8d9bb;background-image:linear-gradient(#c0b4a0 1px,transparent 1px);background-size:100% 7.5px;background-position:0 2px"></div>
<div class="a" style="left:188px;top:318px;width:68px;height:55px;border:2px solid #000;background-color:#e8d9bb;background-image:linear-gradient(#c0b4a0 1px,transparent 1px);background-size:100% 7.5px;background-position:0 2px"></div>
<div class="a" style="left:18px;top:394px;width:68px;height:55px;border:2px solid #000;background-color:#e8d9bb;background-image:linear-gradient(#c0b4a0 1px,transparent 1px);background-size:100% 7.5px;background-position:0 2px"></div>
<div class="a" style="left:103px;top:394px;width:68px;height:55px;border:2px solid #000;background-color:#e8d9bb;background-image:linear-gradient(#c0b4a0 1px,transparent 1px);background-size:100% 7.5px;background-position:0 2px"></div>
<div class="a" style="left:188px;top:394px;width:68px;height:55px;border:2px solid #000;background:#d2d9c1"></div>
<div class="a" style="left:18px;top:470px;width:68px;height:55px;border:2px solid #000;background-color:#e8d9bb;background-image:linear-gradient(#c0b4a0 1px,transparent 1px);background-size:100% 7.5px;background-position:0 2px"></div>
<div class="a" style="left:103px;top:470px;width:68px;height:55px;border:2px solid #000;background-color:#e8d9bb;background-image:linear-gradient(#c0b4a0 1px,transparent 1px);background-size:100% 7.5px;background-position:0 2px"></div>
<div class="a" style="left:188px;top:470px;width:68px;height:55px;border:2px solid #000;background-color:#e8d9bb;background-image:linear-gradient(#c0b4a0 1px,transparent 1px);background-size:100% 7.5px;background-position:0 2px"></div>
</div>
<div class="t" style="left:231.90px;top:319.30px;font-size:14px;color:#111;transform:scaleX(1.0556);transform-origin:0 0;text-shadow:0 0 2px rgba(255,255,255,.6)">玄関</div>
<div class="t" style="left:307.68px;top:319.20px;font-size:14px;color:#111;transform:scaleX(1.0195);transform-origin:0 0;text-shadow:0 0 2px rgba(255,255,255,.6)">ホール</div>
<div class="t" style="left:400.30px;top:319.30px;font-size:14px;color:#111;transform:scaleX(1.1038);transform-origin:0 0;text-shadow:0 0 2px rgba(255,255,255,.6)">廊下</div>
<div class="t" style="left:230.70px;top:394.50px;font-size:14px;color:#111;transform:scaleX(1.1038);transform-origin:0 0;text-shadow:0 0 2px rgba(255,255,255,.6)">吹抜</div>
<div class="t" style="left:302.02px;top:396.00px;font-size:14px;color:#111;transform:scaleX(0.9264);transform-origin:0 0;text-shadow:0 0 2px rgba(255,255,255,.6)">リビング</div>
<div class="t" style="left:404.11px;top:395.50px;font-size:14px;color:#111;transform:scaleX(1.1875);transform-origin:0 0;text-shadow:0 0 2px rgba(255,255,255,.6)">LD</div>
<div class="t" style="left:217.10px;top:471.60px;font-size:14px;color:#111;transform:scaleX(0.7985);transform-origin:0 0;text-shadow:0 0 2px rgba(255,255,255,.6)">ダイニング</div>
<div class="t" style="left:304.39px;top:471.00px;font-size:14px;color:#111;transform:scaleX(0.9093);transform-origin:0 0;text-shadow:0 0 2px rgba(255,255,255,.6)">キッチン</div>
<div class="t" style="left:400.90px;top:471.50px;font-size:14px;color:#111;transform:scaleX(1.0815);transform-origin:0 0;text-shadow:0 0 2px rgba(255,255,255,.6)">浴室</div>
<div class="t" style="left:223.30px;top:547.00px;font-size:14px;color:#111;transform:scaleX(1.0829);transform-origin:0 0;text-shadow:0 0 2px rgba(255,255,255,.6)">洗面室</div>
<div class="t" style="left:306.57px;top:547.00px;font-size:14px;color:#111;transform:scaleX(0.9857);transform-origin:0 0;text-shadow:0 0 2px rgba(255,255,255,.6)">トイレ</div>
<div class="t" style="left:222.81px;top:623.00px;font-size:14px;color:#111;transform:scaleX(1.0950);transform-origin:0 0;text-shadow:0 0 2px rgba(255,255,255,.6)">家事室</div>
<div class="t" style="left:315.70px;top:623.00px;font-size:14px;color:#111;transform:scaleX(1.1000);transform-origin:0 0;text-shadow:0 0 2px rgba(255,255,255,.6)">洋室</div>
<div class="t" style="left:401.40px;top:623.00px;font-size:14px;color:#111;transform:scaleX(1.0667);transform-origin:0 0;text-shadow:0 0 2px rgba(255,255,255,.6)">寝室</div>
<div class="t" style="left:231.80px;top:698.80px;font-size:14px;color:#111;transform:scaleX(1.0667);transform-origin:0 0;text-shadow:0 0 2px rgba(255,255,255,.6)">書斎</div>
<div class="t" style="left:308.70px;top:699.00px;font-size:14px;color:#111;transform:scaleX(1.0683);transform-origin:0 0;text-shadow:0 0 2px rgba(255,255,255,.6)">子供室</div>
<div class="t" style="left:401.40px;top:699.00px;font-size:14px;color:#111;transform:scaleX(1.0667);transform-origin:0 0;text-shadow:0 0 2px rgba(255,255,255,.6)">和室</div>
<div class="t" style="left:397.03px;top:542.30px;font-size:11px;color:#111;transform:scaleX(0.6660);transform-origin:0 0;">ランドリー</div>
<div class="t" style="left:398.24px;top:554.00px;font-size:11px;color:#111;transform:scaleX(0.7619);transform-origin:0 0;">スペース</div>
<div class="a" style="left:460px;top:288px;width:15px;height:472px;background:#2e3236"></div>
<div class="a" style="left:461px;top:301px;width:13px;height:157px;background:#585d62"></div>
<div class="a" style="left:462px;top:291px;width:0;height:0;border-left:5px solid transparent;border-right:5px solid transparent;border-bottom:5px solid #fff"></div>
<div class="a" style="left:462px;top:749px;width:0;height:0;border-left:5px solid transparent;border-right:5px solid transparent;border-top:5px solid #fff"></div>
<div class="a" style="left:194px;top:765px;width:299px;height:2px;background:#45494e"></div>
<div class="t" style="left:202.70px;top:780.30px;font-size:14px;color:#f0c030;transform:scaleX(1.0955);transform-origin:0 0;">多角形入力</div>
<div class="a" style="left:215px;top:808px;width:73px;height:73px;border:1px solid #4a4e52;background:linear-gradient(#363a3e,#16181a 55%,#050505)"></div>
<svg class="a" style="left:228px;top:816px" width="48" height="40"><defs><linearGradient id="pg" x1="0" y1="0" x2="1" y2="1"><stop offset="0" stop-color="#f8dca0"/><stop offset="1" stop-color="#a88858"/></linearGradient></defs><path d="M1.5 1.5 L21.5 1.5 L45.5 15 L45.5 37.5 L1.5 37.5 Z" fill="url(#pg)" stroke="#9a9a98" stroke-width="1.3"/></svg>
<div class="t" style="left:228.69px;top:861.60px;font-size:14px;color:#fff;transform:scaleX(1.1100);transform-origin:0 0;">多角形</div>
<div class="t" style="left:299.50px;top:808.00px;font-size:13px;color:#e0e0e0;">①【多角形】ボタンを押す。</div>
<div class="t" style="left:299.50px;top:827.00px;font-size:13px;color:#e0e0e0;transform:scaleX(0.9859);transform-origin:0 0;">② 部屋の頂点を順にクリック。</div>
<div class="t" style="left:299.50px;top:846.00px;font-size:13px;color:#e0e0e0;transform:scaleX(1.0671);transform-origin:0 0;">③ 最後に始点に戻って完了。</div>
<div class="a" style="left:300px;top:866px;width:15px;height:15px;background:#2a8ae8"></div>
<div class="t" style="left:302.50px;top:867.50px;font-size:12px;color:#fff;font-weight:700;">?</div>
<div class="t" style="left:318.50px;top:867.40px;font-size:13px;color:#7ab8f0;transform:scaleX(1.1308);transform-origin:0 0;">頂点の移動･追加･削除</div>
<div class="a" style="left:493px;top:133px;width:2px;height:761px;background:#8a8e92"></div>
<div class="a" style="left:493px;top:133px;width:670px;height:5px;background:#1c1f22"></div>
<div class="a" style="left:495px;top:138px;width:662px;height:756px;background:#797d81"></div>
<div class="a" style="left:521px;top:164px;width:616px;height:709px;background:#fff"></div>
<div class="a" style="left:1137px;top:164px;width:20px;height:730px;background:#f0f0f0"></div>
<div class="a" style="left:521px;top:873px;width:636px;height:21px;background:#f0f0f0"></div>
<svg class="a" style="left:521px;top:164px" width="616" height="709" shape-rendering="crispEdges">
<defs>
<clipPath id="cout"><path clip-rule="evenodd" d="M0 0H616V709H0Z M129 37H470V656H129Z"/></clipPath>
<clipPath id="cin"><path d="M137 44.5H462V649H137Z"/></clipPath>
</defs>
<rect width="616" height="709" fill="#fff"/>
<rect x="137" y="44.5" width="325" height="274.5" fill="#e8d8bb"/>
<rect x="137" y="319" width="325" height="330" fill="#d2d9c1"/>
<g clip-path="url(#cout)">
<path d="M9 6h2v2h-2zM9 18h2v2h-2zM9 29h2v2h-2zM9 40h2v2h-2zM9 62h2v2h-2zM9 73h2v2h-2zM9 84h2v2h-2zM9 95h2v2h-2zM9 106h2v2h-2zM9 129h2v2h-2zM9 140h2v2h-2zM9 151h2v2h-2zM9 162h2v2h-2zM9 173h2v2h-2zM9 195h2v2h-2zM9 206h2v2h-2zM9 218h2v2h-2zM9 229h2v2h-2zM9 240h2v2h-2zM9 262h2v2h-2zM9 273h2v2h-2zM9 284h2v2h-2zM9 295h2v2h-2zM9 306h2v2h-2zM9 329h2v2h-2zM9 340h2v2h-2zM9 351h2v2h-2zM9 362h2v2h-2zM9 373h2v2h-2zM9 395h2v2h-2zM9 406h2v2h-2zM9 418h2v2h-2zM9 429h2v2h-2zM9 440h2v2h-2zM9 462h2v2h-2zM9 473h2v2h-2zM9 484h2v2h-2zM9 495h2v2h-2zM9 506h2v2h-2zM9 529h2v2h-2zM9 540h2v2h-2zM9 551h2v2h-2zM9 562h2v2h-2zM9 573h2v2h-2zM9 595h2v2h-2zM9 606h2v2h-2zM9 618h2v2h-2zM9 629h2v2h-2zM9 640h2v2h-2zM9 662h2v2h-2zM9 673h2v2h-2zM9 684h2v2h-2zM9 695h2v2h-2zM9 706h2v2h-2zM20 6h2v2h-2zM20 18h2v2h-2zM20 29h2v2h-2zM20 40h2v2h-2zM20 62h2v2h-2zM20 73h2v2h-2zM20 84h2v2h-2zM20 95h2v2h-2zM20 106h2v2h-2zM20 129h2v2h-2zM20 140h2v2h-2zM20 151h2v2h-2zM20 162h2v2h-2zM20 173h2v2h-2zM20 195h2v2h-2zM20 206h2v2h-2zM20 218h2v2h-2zM20 229h2v2h-2zM20 240h2v2h-2zM20 262h2v2h-2zM20 273h2v2h-2zM20 284h2v2h-2zM20 295h2v2h-2zM20 306h2v2h-2zM20 329h2v2h-2zM20 340h2v2h-2zM20 351h2v2h-2zM20 362h2v2h-2zM20 373h2v2h-2zM20 395h2v2h-2zM20 406h2v2h-2zM20 418h2v2h-2zM20 429h2v2h-2zM20 440h2v2h-2zM20 462h2v2h-2zM20 473h2v2h-2zM20 484h2v2h-2zM20 495h2v2h-2zM20 506h2v2h-2zM20 529h2v2h-2zM20 540h2v2h-2zM20 551h2v2h-2zM20 562h2v2h-2zM20 573h2v2h-2zM20 595h2v2h-2zM20 606h2v2h-2zM20 618h2v2h-2zM20 629h2v2h-2zM20 640h2v2h-2zM20 662h2v2h-2zM20 673h2v2h-2zM20 684h2v2h-2zM20 695h2v2h-2zM20 706h2v2h-2zM31 6h2v2h-2zM31 18h2v2h-2zM31 29h2v2h-2zM31 40h2v2h-2zM31 62h2v2h-2zM31 73h2v2h-2zM31 84h2v2h-2zM31 95h2v2h-2zM31 106h2v2h-2zM31 129h2v2h-2zM31 140h2v2h-2zM31 151h2v2h-2zM31 162h2v2h-2zM31 173h2v2h-2zM31 195h2v2h-2zM31 206h2v2h-2zM31 218h2v2h-2zM31 229h2v2h-2zM31 240h2v2h-2zM31 262h2v2h-2zM31 273h2v2h-2zM31 284h2v2h-2zM31 295h2v2h-2zM31 306h2v2h-2zM31 329h2v2h-2zM31 340h2v2h-2zM31 351h2v2h-2zM31 362h2v2h-2zM31 373h2v2h-2zM31 395h2v2h-2zM31 406h2v2h-2zM31 418h2v2h-2zM31 429h2v2h-2zM31 440h2v2h-2zM31 462h2v2h-2zM31 473h2v2h-2zM31 484h2v2h-2zM31 495h2v2h-2zM31 506h2v2h-2zM31 529h2v2h-2zM31 540h2v2h-2zM31 551h2v2h-2zM31 562h2v2h-2zM31 573h2v2h-2zM31 595h2v2h-2zM31 606h2v2h-2zM31 618h2v2h-2zM31 629h2v2h-2zM31 640h2v2h-2zM31 662h2v2h-2zM31 673h2v2h-2zM31 684h2v2h-2zM31 695h2v2h-2zM31 706h2v2h-2zM42 6h2v2h-2zM42 18h2v2h-2zM42 29h2v2h-2zM42 40h2v2h-2zM42 62h2v2h-2zM42 73h2v2h-2zM42 84h2v2h-2zM42 95h2v2h-2zM42 106h2v2h-2zM42 129h2v2h-2zM42 140h2v2h-2zM42 151h2v2h-2zM42 162h2v2h-2zM42 173h2v2h-2zM42 195h2v2h-2zM42 206h2v2h-2zM42 218h2v2h-2zM42 229h2v2h-2zM42 240h2v2h-2zM42 262h2v2h-2zM42 273h2v2h-2zM42 284h2v2h-2zM42 295h2v2h-2zM42 306h2v2h-2zM42 329h2v2h-2zM42 340h2v2h-2zM42 351h2v2h-2zM42 362h2v2h-2zM42 373h2v2h-2zM42 395h2v2h-2zM42 406h2v2h-2zM42 418h2v2h-2zM42 429h2v2h-2zM42 440h2v2h-2zM42 462h2v2h-2zM42 473h2v2h-2zM42 484h2v2h-2zM42 495h2v2h-2zM42 506h2v2h-2zM42 529h2v2h-2zM42 540h2v2h-2zM42 551h2v2h-2zM42 562h2v2h-2zM42 573h2v2h-2zM42 595h2v2h-2zM42 606h2v2h-2zM42 618h2v2h-2zM42 629h2v2h-2zM42 640h2v2h-2zM42 662h2v2h-2zM42 673h2v2h-2zM42 684h2v2h-2zM42 695h2v2h-2zM42 706h2v2h-2zM53 6h2v2h-2zM53 18h2v2h-2zM53 29h2v2h-2zM53 40h2v2h-2zM53 62h2v2h-2zM53 73h2v2h-2zM53 84h2v2h-2zM53 95h2v2h-2zM53 106h2v2h-2zM53 129h2v2h-2zM53 140h2v2h-2zM53 151h2v2h-2zM53 162h2v2h-2zM53 173h2v2h-2zM53 195h2v2h-2zM53 206h2v2h-2zM53 218h2v2h-2zM53 229h2v2h-2zM53 240h2v2h-2zM53 262h2v2h-2zM53 273h2v2h-2zM53 284h2v2h-2zM53 295h2v2h-2zM53 306h2v2h-2zM53 329h2v2h-2zM53 340h2v2h-2zM53 351h2v2h-2zM53 362h2v2h-2zM53 373h2v2h-2zM53 395h2v2h-2zM53 406h2v2h-2zM53 418h2v2h-2zM53 429h2v2h-2zM53 440h2v2h-2zM53 462h2v2h-2zM53 473h2v2h-2zM53 484h2v2h-2zM53 495h2v2h-2zM53 506h2v2h-2zM53 529h2v2h-2zM53 540h2v2h-2zM53 551h2v2h-2zM53 562h2v2h-2zM53 573h2v2h-2zM53 595h2v2h-2zM53 606h2v2h-2zM53 618h2v2h-2zM53 629h2v2h-2zM53 640h2v2h-2zM53 662h2v2h-2zM53 673h2v2h-2zM53 684h2v2h-2zM53 695h2v2h-2zM53 706h2v2h-2zM76 6h2v2h-2zM76 18h2v2h-2zM76 29h2v2h-2zM76 40h2v2h-2zM76 62h2v2h-2zM76 73h2v2h-2zM76 84h2v2h-2zM76 95h2v2h-2zM76 106h2v2h-2zM76 129h2v2h-2zM76 140h2v2h-2zM76 151h2v2h-2zM76 162h2v2h-2zM76 173h2v2h-2zM76 195h2v2h-2zM76 206h2v2h-2zM76 218h2v2h-2zM76 229h2v2h-2zM76 240h2v2h-2zM76 262h2v2h-2zM76 273h2v2h-2zM76 284h2v2h-2zM76 295h2v2h-2zM76 306h2v2h-2zM76 329h2v2h-2zM76 340h2v2h-2zM76 351h2v2h-2zM76 362h2v2h-2zM76 373h2v2h-2zM76 395h2v2h-2zM76 406h2v2h-2zM76 418h2v2h-2zM76 429h2v2h-2zM76 440h2v2h-2zM76 462h2v2h-2zM76 473h2v2h-2zM76 484h2v2h-2zM76 495h2v2h-2zM76 506h2v2h-2zM76 529h2v2h-2zM76 540h2v2h-2zM76 551h2v2h-2zM76 562h2v2h-2zM76 573h2v2h-2zM76 595h2v2h-2zM76 606h2v2h-2zM76 618h2v2h-2zM76 629h2v2h-2zM76 640h2v2h-2zM76 662h2v2h-2zM76 673h2v2h-2zM76 684h2v2h-2zM76 695h2v2h-2zM76 706h2v2h-2zM87 6h2v2h-2zM87 18h2v2h-2zM87 29h2v2h-2zM87 40h2v2h-2zM87 62h2v2h-2zM87 73h2v2h-2zM87 84h2v2h-2zM87 95h2v2h-2zM87 106h2v2h-2zM87 129h2v2h-2zM87 140h2v2h-2zM87 151h2v2h-2zM87 162h2v2h-2zM87 173h2v2h-2zM87 195h2v2h-2zM87 206h2v2h-2zM87 218h2v2h-2zM87 229h2v2h-2zM87 240h2v2h-2zM87 262h2v2h-2zM87 273h2v2h-2zM87 284h2v2h-2zM87 295h2v2h-2zM87 306h2v2h-2zM87 329h2v2h-2zM87 340h2v2h-2zM87 351h2v2h-2zM87 362h2v2h-2zM87 373h2v2h-2zM87 395h2v2h-2zM87 406h2v2h-2zM87 418h2v2h-2zM87 429h2v2h-2zM87 440h2v2h-2zM87 462h2v2h-2zM87 473h2v2h-2zM87 484h2v2h-2zM87 495h2v2h-2zM87 506h2v2h-2zM87 529h2v2h-2zM87 540h2v2h-2zM87 551h2v2h-2zM87 562h2v2h-2zM87 573h2v2h-2zM87 595h2v2h-2zM87 606h2v2h-2zM87 618h2v2h-2zM87 629h2v2h-2zM87 640h2v2h-2zM87 662h2v2h-2zM87 673h2v2h-2zM87 684h2v2h-2zM87 695h2v2h-2zM87 706h2v2h-2zM98 6h2v2h-2zM98 18h2v2h-2zM98 29h2v2h-2zM98 40h2v2h-2zM98 62h2v2h-2zM98 73h2v2h-2zM98 84h2v2h-2zM98 95h2v2h-2zM98 106h2v2h-2zM98 129h2v2h-2zM98 140h2v2h-2zM98 151h2v2h-2zM98 162h2v2h-2zM98 173h2v2h-2zM98 195h2v2h-2zM98 206h2v2h-2zM98 218h2v2h-2zM98 229h2v2h-2zM98 240h2v2h-2zM98 262h2v2h-2zM98 273h2v2h-2zM98 284h2v2h-2zM98 295h2v2h-2zM98 306h2v2h-2zM98 329h2v2h-2zM98 340h2v2h-2zM98 351h2v2h-2zM98 362h2v2h-2zM98 373h2v2h-2zM98 395h2v2h-2zM98 406h2v2h-2zM98 418h2v2h-2zM98 429h2v2h-2zM98 440h2v2h-2zM98 462h2v2h-2zM98 473h2v2h-2zM98 484h2v2h-2zM98 495h2v2h-2zM98 506h2v2h-2zM98 529h2v2h-2zM98 540h2v2h-2zM98 551h2v2h-2zM98 562h2v2h-2zM98 573h2v2h-2zM98 595h2v2h-2zM98 606h2v2h-2zM98 618h2v2h-2zM98 629h2v2h-2zM98 640h2v2h-2zM98 662h2v2h-2zM98 673h2v2h-2zM98 684h2v2h-2zM98 695h2v2h-2zM98 706h2v2h-2zM109 6h2v2h-2zM109 18h2v2h-2zM109 29h2v2h-2zM109 40h2v2h-2zM109 62h2v2h-2zM109 73h2v2h-2zM109 84h2v2h-2zM109 95h2v2h-2zM109 106h2v2h-2zM109 129h2v2h-2zM109 140h2v2h-2zM109 151h2v2h-2zM109 162h2v2h-2zM109 173h2v2h-2zM109 195h2v2h-2zM109 206h2v2h-2zM109 218h2v2h-2zM109 229h2v2h-2zM109 240h2v2h-2zM109 262h2v2h-2zM109 273h2v2h-2zM109 284h2v2h-2zM109 295h2v2h-2zM109 306h2v2h-2zM109 329h2v2h-2zM109 340h2v2h-2zM109 351h2v2h-2zM109 362h2v2h-2zM109 373h2v2h-2zM109 395h2v2h-2zM109 406h2v2h-2zM109 418h2v2h-2zM109 429h2v2h-2zM109 440h2v2h-2zM109 462h2v2h-2zM109 473h2v2h-2zM109 484h2v2h-2zM109 495h2v2h-2zM109 506h2v2h-2zM109 529h2v2h-2zM109 540h2v2h-2zM109 551h2v2h-2zM109 562h2v2h-2zM109 573h2v2h-2zM109 595h2v2h-2zM109 606h2v2h-2zM109 618h2v2h-2zM109 629h2v2h-2zM109 640h2v2h-2zM109 662h2v2h-2zM109 673h2v2h-2zM109 684h2v2h-2zM109 695h2v2h-2zM109 706h2v2h-2zM120 6h2v2h-2zM120 18h2v2h-2zM120 29h2v2h-2zM120 40h2v2h-2zM120 62h2v2h-2zM120 73h2v2h-2zM120 84h2v2h-2zM120 95h2v2h-2zM120 106h2v2h-2zM120 129h2v2h-2zM120 140h2v2h-2zM120 151h2v2h-2zM120 162h2v2h-2zM120 173h2v2h-2zM120 195h2v2h-2zM120 206h2v2h-2zM120 218h2v2h-2zM120 229h2v2h-2zM120 240h2v2h-2zM120 262h2v2h-2zM120 273h2v2h-2zM120 284h2v2h-2zM120 295h2v2h-2zM120 306h2v2h-2zM120 329h2v2h-2zM120 340h2v2h-2zM120 351h2v2h-2zM120 362h2v2h-2zM120 373h2v2h-2zM120 395h2v2h-2zM120 406h2v2h-2zM120 418h2v2h-2zM120 429h2v2h-2zM120 440h2v2h-2zM120 462h2v2h-2zM120 473h2v2h-2zM120 484h2v2h-2zM120 495h2v2h-2zM120 506h2v2h-2zM120 529h2v2h-2zM120 540h2v2h-2zM120 551h2v2h-2zM120 562h2v2h-2zM120 573h2v2h-2zM120 595h2v2h-2zM120 606h2v2h-2zM120 618h2v2h-2zM120 629h2v2h-2zM120 640h2v2h-2zM120 662h2v2h-2zM120 673h2v2h-2zM120 684h2v2h-2zM120 695h2v2h-2zM120 706h2v2h-2zM142 6h2v2h-2zM142 18h2v2h-2zM142 29h2v2h-2zM142 40h2v2h-2zM142 62h2v2h-2zM142 73h2v2h-2zM142 84h2v2h-2zM142 95h2v2h-2zM142 106h2v2h-2zM142 129h2v2h-2zM142 140h2v2h-2zM142 151h2v2h-2zM142 162h2v2h-2zM142 173h2v2h-2zM142 195h2v2h-2zM142 206h2v2h-2zM142 218h2v2h-2zM142 229h2v2h-2zM142 240h2v2h-2zM142 262h2v2h-2zM142 273h2v2h-2zM142 284h2v2h-2zM142 295h2v2h-2zM142 306h2v2h-2zM142 329h2v2h-2zM142 340h2v2h-2zM142 351h2v2h-2zM142 362h2v2h-2zM142 373h2v2h-2zM142 395h2v2h-2zM142 406h2v2h-2zM142 418h2v2h-2zM142 429h2v2h-2zM142 440h2v2h-2zM142 462h2v2h-2zM142 473h2v2h-2zM142 484h2v2h-2zM142 495h2v2h-2zM142 506h2v2h-2zM142 529h2v2h-2zM142 540h2v2h-2zM142 551h2v2h-2zM142 562h2v2h-2zM142 573h2v2h-2zM142 595h2v2h-2zM142 606h2v2h-2zM142 618h2v2h-2zM142 629h2v2h-2zM142 640h2v2h-2zM142 662h2v2h-2zM142 673h2v2h-2zM142 684h2v2h-2zM142 695h2v2h-2zM142 706h2v2h-2zM153 6h2v2h-2zM153 18h2v2h-2zM153 29h2v2h-2zM153 40h2v2h-2zM153 62h2v2h-2zM153 73h2v2h-2zM153 84h2v2h-2zM153 95h2v2h-2zM153 106h2v2h-2zM153 129h2v2h-2zM153 140h2v2h-2zM153 151h2v2h-2zM153 162h2v2h-2zM153 173h2v2h-2zM153 195h2v2h-2zM153 206h2v2h-2zM153 218h2v2h-2zM153 229h2v2h-2zM153 240h2v2h-2zM153 262h2v2h-2zM153 273h2v2h-2zM153 284h2v2h-2zM153 295h2v2h-2zM153 306h2v2h-2zM153 329h2v2h-2zM153 340h2v2h-2zM153 351h2v2h-2zM153 362h2v2h-2zM153 373h2v2h-2zM153 395h2v2h-2zM153 406h2v2h-2zM153 418h2v2h-2zM153 429h2v2h-2zM153 440h2v2h-2zM153 462h2v2h-2zM153 473h2v2h-2zM153 484h2v2h-2zM153 495h2v2h-2zM153 506h2v2h-2zM153 529h2v2h-2zM153 540h2v2h-2zM153 551h2v2h-2zM153 562h2v2h-2zM153 573h2v2h-2zM153 595h2v2h-2zM153 606h2v2h-2zM153 618h2v2h-2zM153 629h2v2h-2zM153 640h2v2h-2zM153 662h2v2h-2zM153 673h2v2h-2zM153 684h2v2h-2zM153 695h2v2h-2zM153 706h2v2h-2zM165 6h2v2h-2zM165 18h2v2h-2zM165 29h2v2h-2zM165 40h2v2h-2zM165 62h2v2h-2zM165 73h2v2h-2zM165 84h2v2h-2zM165 95h2v2h-2zM165 106h2v2h-2zM165 129h2v2h-2zM165 140h2v2h-2zM165 151h2v2h-2zM165 162h2v2h-2zM165 173h2v2h-2zM165 195h2v2h-2zM165 206h2v2h-2zM165 218h2v2h-2zM165 229h2v2h-2zM165 240h2v2h-2zM165 262h2v2h-2zM165 273h2v2h-2zM165 284h2v2h-2zM165 295h2v2h-2zM165 306h2v2h-2zM165 329h2v2h-2zM165 340h2v2h-2zM165 351h2v2h-2zM165 362h2v2h-2zM165 373h2v2h-2zM165 395h2v2h-2zM165 406h2v2h-2zM165 418h2v2h-2zM165 429h2v2h-2zM165 440h2v2h-2zM165 462h2v2h-2zM165 473h2v2h-2zM165 484h2v2h-2zM165 495h2v2h-2zM165 506h2v2h-2zM165 529h2v2h-2zM165 540h2v2h-2zM165 551h2v2h-2zM165 562h2v2h-2zM165 573h2v2h-2zM165 595h2v2h-2zM165 606h2v2h-2zM165 618h2v2h-2zM165 629h2v2h-2zM165 640h2v2h-2zM165 662h2v2h-2zM165 673h2v2h-2zM165 684h2v2h-2zM165 695h2v2h-2zM165 706h2v2h-2zM176 6h2v2h-2zM176 18h2v2h-2zM176 29h2v2h-2zM176 40h2v2h-2zM176 62h2v2h-2zM176 73h2v2h-2zM176 84h2v2h-2zM176 95h2v2h-2zM176 106h2v2h-2zM176 129h2v2h-2zM176 140h2v2h-2zM176 151h2v2h-2zM176 162h2v2h-2zM176 173h2v2h-2zM176 195h2v2h-2zM176 206h2v2h-2zM176 218h2v2h-2zM176 229h2v2h-2zM176 240h2v2h-2zM176 262h2v2h-2zM176 273h2v2h-2zM176 284h2v2h-2zM176 295h2v2h-2zM176 306h2v2h-2zM176 329h2v2h-2zM176 340h2v2h-2zM176 351h2v2h-2zM176 362h2v2h-2zM176 373h2v2h-2zM176 395h2v2h-2zM176 406h2v2h-2zM176 418h2v2h-2zM176 429h2v2h-2zM176 440h2v2h-2zM176 462h2v2h-2zM176 473h2v2h-2zM176 484h2v2h-2zM176 495h2v2h-2zM176 506h2v2h-2zM176 529h2v2h-2zM176 540h2v2h-2zM176 551h2v2h-2zM176 562h2v2h-2zM176 573h2v2h-2zM176 595h2v2h-2zM176 606h2v2h-2zM176 618h2v2h-2zM176 629h2v2h-2zM176 640h2v2h-2zM176 662h2v2h-2zM176 673h2v2h-2zM176 684h2v2h-2zM176 695h2v2h-2zM176 706h2v2h-2zM187 6h2v2h-2zM187 18h2v2h-2zM187 29h2v2h-2zM187 40h2v2h-2zM187 62h2v2h-2zM187 73h2v2h-2zM187 84h2v2h-2zM187 95h2v2h-2zM187 106h2v2h-2zM187 129h2v2h-2zM187 140h2v2h-2zM187 151h2v2h-2zM187 162h2v2h-2zM187 173h2v2h-2zM187 195h2v2h-2zM187 206h2v2h-2zM187 218h2v2h-2zM187 229h2v2h-2zM187 240h2v2h-2zM187 262h2v2h-2zM187 273h2v2h-2zM187 284h2v2h-2zM187 295h2v2h-2zM187 306h2v2h-2zM187 329h2v2h-2zM187 340h2v2h-2zM187 351h2v2h-2zM187 362h2v2h-2zM187 373h2v2h-2zM187 395h2v2h-2zM187 406h2v2h-2zM187 418h2v2h-2zM187 429h2v2h-2zM187 440h2v2h-2zM187 462h2v2h-2zM187 473h2v2h-2zM187 484h2v2h-2zM187 495h2v2h-2zM187 506h2v2h-2zM187 529h2v2h-2zM187 540h2v2h-2zM187 551h2v2h-2zM187 562h2v2h-2zM187 573h2v2h-2zM187 595h2v2h-2zM187 606h2v2h-2zM187 618h2v2h-2zM187 629h2v2h-2zM187 640h2v2h-2zM187 662h2v2h-2zM187 673h2v2h-2zM187 684h2v2h-2zM187 695h2v2h-2zM187 706h2v2h-2zM209 6h2v2h-2zM209 18h2v2h-2zM209 29h2v2h-2zM209 40h2v2h-2zM209 62h2v2h-2zM209 73h2v2h-2zM209 84h2v2h-2zM209 95h2v2h-2zM209 106h2v2h-2zM209 129h2v2h-2zM209 140h2v2h-2zM209 151h2v2h-2zM209 162h2v2h-2zM209 173h2v2h-2zM209 195h2v2h-2zM209 206h2v2h-2zM209 218h2v2h-2zM209 229h2v2h-2zM209 240h2v2h-2zM209 262h2v2h-2zM209 273h2v2h-2zM209 284h2v2h-2zM209 295h2v2h-2zM209 306h2v2h-2zM209 329h2v2h-2zM209 340h2v2h-2zM209 351h2v2h-2zM209 362h2v2h-2zM209 373h2v2h-2zM209 395h2v2h-2zM209 406h2v2h-2zM209 418h2v2h-2zM209 429h2v2h-2zM209 440h2v2h-2zM209 462h2v2h-2zM209 473h2v2h-2zM209 484h2v2h-2zM209 495h2v2h-2zM209 506h2v2h-2zM209 529h2v2h-2zM209 540h2v2h-2zM209 551h2v2h-2zM209 562h2v2h-2zM209 573h2v2h-2zM209 595h2v2h-2zM209 606h2v2h-2zM209 618h2v2h-2zM209 629h2v2h-2zM209 640h2v2h-2zM209 662h2v2h-2zM209 673h2v2h-2zM209 684h2v2h-2zM209 695h2v2h-2zM209 706h2v2h-2zM220 6h2v2h-2zM220 18h2v2h-2zM220 29h2v2h-2zM220 40h2v2h-2zM220 62h2v2h-2zM220 73h2v2h-2zM220 84h2v2h-2zM220 95h2v2h-2zM220 106h2v2h-2zM220 129h2v2h-2zM220 140h2v2h-2zM220 151h2v2h-2zM220 162h2v2h-2zM220 173h2v2h-2zM220 195h2v2h-2zM220 206h2v2h-2zM220 218h2v2h-2zM220 229h2v2h-2zM220 240h2v2h-2zM220 262h2v2h-2zM220 273h2v2h-2zM220 284h2v2h-2zM220 295h2v2h-2zM220 306h2v2h-2zM220 329h2v2h-2zM220 340h2v2h-2zM220 351h2v2h-2zM220 362h2v2h-2zM220 373h2v2h-2zM220 395h2v2h-2zM220 406h2v2h-2zM220 418h2v2h-2zM220 429h2v2h-2zM220 440h2v2h-2zM220 462h2v2h-2zM220 473h2v2h-2zM220 484h2v2h-2zM220 495h2v2h-2zM220 506h2v2h-2zM220 529h2v2h-2zM220 540h2v2h-2zM220 551h2v2h-2zM220 562h2v2h-2zM220 573h2v2h-2zM220 595h2v2h-2zM220 606h2v2h-2zM220 618h2v2h-2zM220 629h2v2h-2zM220 640h2v2h-2zM220 662h2v2h-2zM220 673h2v2h-2zM220 684h2v2h-2zM220 695h2v2h-2zM220 706h2v2h-2zM231 6h2v2h-2zM231 18h2v2h-2zM231 29h2v2h-2zM231 40h2v2h-2zM231 62h2v2h-2zM231 73h2v2h-2zM231 84h2v2h-2zM231 95h2v2h-2zM231 106h2v2h-2zM231 129h2v2h-2zM231 140h2v2h-2zM231 151h2v2h-2zM231 162h2v2h-2zM231 173h2v2h-2zM231 195h2v2h-2zM231 206h2v2h-2zM231 218h2v2h-2zM231 229h2v2h-2zM231 240h2v2h-2zM231 262h2v2h-2zM231 273h2v2h-2zM231 284h2v2h-2zM231 295h2v2h-2zM231 306h2v2h-2zM231 329h2v2h-2zM231 340h2v2h-2zM231 351h2v2h-2zM231 362h2v2h-2zM231 373h2v2h-2zM231 395h2v2h-2zM231 406h2v2h-2zM231 418h2v2h-2zM231 429h2v2h-2zM231 440h2v2h-2zM231 462h2v2h-2zM231 473h2v2h-2zM231 484h2v2h-2zM231 495h2v2h-2zM231 506h2v2h-2zM231 529h2v2h-2zM231 540h2v2h-2zM231 551h2v2h-2zM231 562h2v2h-2zM231 573h2v2h-2zM231 595h2v2h-2zM231 606h2v2h-2zM231 618h2v2h-2zM231 629h2v2h-2zM231 640h2v2h-2zM231 662h2v2h-2zM231 673h2v2h-2zM231 684h2v2h-2zM231 695h2v2h-2zM231 706h2v2h-2zM242 6h2v2h-2zM242 18h2v2h-2zM242 29h2v2h-2zM242 40h2v2h-2zM242 62h2v2h-2zM242 73h2v2h-2zM242 84h2v2h-2zM242 95h2v2h-2zM242 106h2v2h-2zM242 129h2v2h-2zM242 140h2v2h-2zM242 151h2v2h-2zM242 162h2v2h-2zM242 173h2v2h-2zM242 195h2v2h-2zM242 206h2v2h-2zM242 218h2v2h-2zM242 229h2v2h-2zM242 240h2v2h-2zM242 262h2v2h-2zM242 273h2v2h-2zM242 284h2v2h-2zM242 295h2v2h-2zM242 306h2v2h-2zM242 329h2v2h-2zM242 340h2v2h-2zM242 351h2v2h-2zM242 362h2v2h-2zM242 373h2v2h-2zM242 395h2v2h-2zM242 406h2v2h-2zM242 418h2v2h-2zM242 429h2v2h-2zM242 440h2v2h-2zM242 462h2v2h-2zM242 473h2v2h-2zM242 484h2v2h-2zM242 495h2v2h-2zM242 506h2v2h-2zM242 529h2v2h-2zM242 540h2v2h-2zM242 551h2v2h-2zM242 562h2v2h-2zM242 573h2v2h-2zM242 595h2v2h-2zM242 606h2v2h-2zM242 618h2v2h-2zM242 629h2v2h-2zM242 640h2v2h-2zM242 662h2v2h-2zM242 673h2v2h-2zM242 684h2v2h-2zM242 695h2v2h-2zM242 706h2v2h-2zM253 6h2v2h-2zM253 18h2v2h-2zM253 29h2v2h-2zM253 40h2v2h-2zM253 62h2v2h-2zM253 73h2v2h-2zM253 84h2v2h-2zM253 95h2v2h-2zM253 106h2v2h-2zM253 129h2v2h-2zM253 140h2v2h-2zM253 151h2v2h-2zM253 162h2v2h-2zM253 173h2v2h-2zM253 195h2v2h-2zM253 206h2v2h-2zM253 218h2v2h-2zM253 229h2v2h-2zM253 240h2v2h-2zM253 262h2v2h-2zM253 273h2v2h-2zM253 284h2v2h-2zM253 295h2v2h-2zM253 306h2v2h-2zM253 329h2v2h-2zM253 340h2v2h-2zM253 351h2v2h-2zM253 362h2v2h-2zM253 373h2v2h-2zM253 395h2v2h-2zM253 406h2v2h-2zM253 418h2v2h-2zM253 429h2v2h-2zM253 440h2v2h-2zM253 462h2v2h-2zM253 473h2v2h-2zM253 484h2v2h-2zM253 495h2v2h-2zM253 506h2v2h-2zM253 529h2v2h-2zM253 540h2v2h-2zM253 551h2v2h-2zM253 562h2v2h-2zM253 573h2v2h-2zM253 595h2v2h-2zM253 606h2v2h-2zM253 618h2v2h-2zM253 629h2v2h-2zM253 640h2v2h-2zM253 662h2v2h-2zM253 673h2v2h-2zM253 684h2v2h-2zM253 695h2v2h-2zM253 706h2v2h-2zM276 6h2v2h-2zM276 18h2v2h-2zM276 29h2v2h-2zM276 40h2v2h-2zM276 62h2v2h-2zM276 73h2v2h-2zM276 84h2v2h-2zM276 95h2v2h-2zM276 106h2v2h-2zM276 129h2v2h-2zM276 140h2v2h-2zM276 151h2v2h-2zM276 162h2v2h-2zM276 173h2v2h-2zM276 195h2v2h-2zM276 206h2v2h-2zM276 218h2v2h-2zM276 229h2v2h-2zM276 240h2v2h-2zM276 262h2v2h-2zM276 273h2v2h-2zM276 284h2v2h-2zM276 295h2v2h-2zM276 306h2v2h-2zM276 329h2v2h-2zM276 340h2v2h-2zM276 351h2v2h-2zM276 362h2v2h-2zM276 373h2v2h-2zM276 395h2v2h-2zM276 406h2v2h-2zM276 418h2v2h-2zM276 429h2v2h-2zM276 440h2v2h-2zM276 462h2v2h-2zM276 473h2v2h-2zM276 484h2v2h-2zM276 495h2v2h-2zM276 506h2v2h-2zM276 529h2v2h-2zM276 540h2v2h-2zM276 551h2v2h-2zM276 562h2v2h-2zM276 573h2v2h-2zM276 595h2v2h-2zM276 606h2v2h-2zM276 618h2v2h-2zM276 629h2v2h-2zM276 640h2v2h-2zM276 662h2v2h-2zM276 673h2v2h-2zM276 684h2v2h-2zM276 695h2v2h-2zM276 706h2v2h-2zM287 6h2v2h-2zM287 18h2v2h-2zM287 29h2v2h-2zM287 40h2v2h-2zM287 62h2v2h-2zM287 73h2v2h-2zM287 84h2v2h-2zM287 95h2v2h-2zM287 106h2v2h-2zM287 129h2v2h-2zM287 140h2v2h-2zM287 151h2v2h-2zM287 162h2v2h-2zM287 173h2v2h-2zM287 195h2v2h-2zM287 206h2v2h-2zM287 218h2v2h-2zM287 229h2v2h-2zM287 240h2v2h-2zM287 262h2v2h-2zM287 273h2v2h-2zM287 284h2v2h-2zM287 295h2v2h-2zM287 306h2v2h-2zM287 329h2v2h-2zM287 340h2v2h-2zM287 351h2v2h-2zM287 362h2v2h-2zM287 373h2v2h-2zM287 395h2v2h-2zM287 406h2v2h-2zM287 418h2v2h-2zM287 429h2v2h-2zM287 440h2v2h-2zM287 462h2v2h-2zM287 473h2v2h-2zM287 484h2v2h-2zM287 495h2v2h-2zM287 506h2v2h-2zM287 529h2v2h-2zM287 540h2v2h-2zM287 551h2v2h-2zM287 562h2v2h-2zM287 573h2v2h-2zM287 595h2v2h-2zM287 606h2v2h-2zM287 618h2v2h-2zM287 629h2v2h-2zM287 640h2v2h-2zM287 662h2v2h-2zM287 673h2v2h-2zM287 684h2v2h-2zM287 695h2v2h-2zM287 706h2v2h-2zM298 6h2v2h-2zM298 18h2v2h-2zM298 29h2v2h-2zM298 40h2v2h-2zM298 62h2v2h-2zM298 73h2v2h-2zM298 84h2v2h-2zM298 95h2v2h-2zM298 106h2v2h-2zM298 129h2v2h-2zM298 140h2v2h-2zM298 151h2v2h-2zM298 162h2v2h-2zM298 173h2v2h-2zM298 195h2v2h-2zM298 206h2v2h-2zM298 218h2v2h-2zM298 229h2v2h-2zM298 240h2v2h-2zM298 262h2v2h-2zM298 273h2v2h-2zM298 284h2v2h-2zM298 295h2v2h-2zM298 306h2v2h-2zM298 329h2v2h-2zM298 340h2v2h-2zM298 351h2v2h-2zM298 362h2v2h-2zM298 373h2v2h-2zM298 395h2v2h-2zM298 406h2v2h-2zM298 418h2v2h-2zM298 429h2v2h-2zM298 440h2v2h-2zM298 462h2v2h-2zM298 473h2v2h-2zM298 484h2v2h-2zM298 495h2v2h-2zM298 506h2v2h-2zM298 529h2v2h-2zM298 540h2v2h-2zM298 551h2v2h-2zM298 562h2v2h-2zM298 573h2v2h-2zM298 595h2v2h-2zM298 606h2v2h-2zM298 618h2v2h-2zM298 629h2v2h-2zM298 640h2v2h-2zM298 662h2v2h-2zM298 673h2v2h-2zM298 684h2v2h-2zM298 695h2v2h-2zM298 706h2v2h-2zM309 6h2v2h-2zM309 18h2v2h-2zM309 29h2v2h-2zM309 40h2v2h-2zM309 62h2v2h-2zM309 73h2v2h-2zM309 84h2v2h-2zM309 95h2v2h-2zM309 106h2v2h-2zM309 129h2v2h-2zM309 140h2v2h-2zM309 151h2v2h-2zM309 162h2v2h-2zM309 173h2v2h-2zM309 195h2v2h-2zM309 206h2v2h-2zM309 218h2v2h-2zM309 229h2v2h-2zM309 240h2v2h-2zM309 262h2v2h-2zM309 273h2v2h-2zM309 284h2v2h-2zM309 295h2v2h-2zM309 306h2v2h-2zM309 329h2v2h-2zM309 340h2v2h-2zM309 351h2v2h-2zM309 362h2v2h-2zM309 373h2v2h-2zM309 395h2v2h-2zM309 406h2v2h-2zM309 418h2v2h-2zM309 429h2v2h-2zM309 440h2v2h-2zM309 462h2v2h-2zM309 473h2v2h-2zM309 484h2v2h-2zM309 495h2v2h-2zM309 506h2v2h-2zM309 529h2v2h-2zM309 540h2v2h-2zM309 551h2v2h-2zM309 562h2v2h-2zM309 573h2v2h-2zM309 595h2v2h-2zM309 606h2v2h-2zM309 618h2v2h-2zM309 629h2v2h-2zM309 640h2v2h-2zM309 662h2v2h-2zM309 673h2v2h-2zM309 684h2v2h-2zM309 695h2v2h-2zM309 706h2v2h-2zM320 6h2v2h-2zM320 18h2v2h-2zM320 29h2v2h-2zM320 40h2v2h-2zM320 62h2v2h-2zM320 73h2v2h-2zM320 84h2v2h-2zM320 95h2v2h-2zM320 106h2v2h-2zM320 129h2v2h-2zM320 140h2v2h-2zM320 151h2v2h-2zM320 162h2v2h-2zM320 173h2v2h-2zM320 195h2v2h-2zM320 206h2v2h-2zM320 218h2v2h-2zM320 229h2v2h-2zM320 240h2v2h-2zM320 262h2v2h-2zM320 273h2v2h-2zM320 284h2v2h-2zM320 295h2v2h-2zM320 306h2v2h-2zM320 329h2v2h-2zM320 340h2v2h-2zM320 351h2v2h-2zM320 362h2v2h-2zM320 373h2v2h-2zM320 395h2v2h-2zM320 406h2v2h-2zM320 418h2v2h-2zM320 429h2v2h-2zM320 440h2v2h-2zM320 462h2v2h-2zM320 473h2v2h-2zM320 484h2v2h-2zM320 495h2v2h-2zM320 506h2v2h-2zM320 529h2v2h-2zM320 540h2v2h-2zM320 551h2v2h-2zM320 562h2v2h-2zM320 573h2v2h-2zM320 595h2v2h-2zM320 606h2v2h-2zM320 618h2v2h-2zM320 629h2v2h-2zM320 640h2v2h-2zM320 662h2v2h-2zM320 673h2v2h-2zM320 684h2v2h-2zM320 695h2v2h-2zM320 706h2v2h-2zM342 6h2v2h-2zM342 18h2v2h-2zM342 29h2v2h-2zM342 40h2v2h-2zM342 62h2v2h-2zM342 73h2v2h-2zM342 84h2v2h-2zM342 95h2v2h-2zM342 106h2v2h-2zM342 129h2v2h-2zM342 140h2v2h-2zM342 151h2v2h-2zM342 162h2v2h-2zM342 173h2v2h-2zM342 195h2v2h-2zM342 206h2v2h-2zM342 218h2v2h-2zM342 229h2v2h-2zM342 240h2v2h-2zM342 262h2v2h-2zM342 273h2v2h-2zM342 284h2v2h-2zM342 295h2v2h-2zM342 306h2v2h-2zM342 329h2v2h-2zM342 340h2v2h-2zM342 351h2v2h-2zM342 362h2v2h-2zM342 373h2v2h-2zM342 395h2v2h-2zM342 406h2v2h-2zM342 418h2v2h-2zM342 429h2v2h-2zM342 440h2v2h-2zM342 462h2v2h-2zM342 473h2v2h-2zM342 484h2v2h-2zM342 495h2v2h-2zM342 506h2v2h-2zM342 529h2v2h-2zM342 540h2v2h-2zM342 551h2v2h-2zM342 562h2v2h-2zM342 573h2v2h-2zM342 595h2v2h-2zM342 606h2v2h-2zM342 618h2v2h-2zM342 629h2v2h-2zM342 640h2v2h-2zM342 662h2v2h-2zM342 673h2v2h-2zM342 684h2v2h-2zM342 695h2v2h-2zM342 706h2v2h-2zM353 6h2v2h-2zM353 18h2v2h-2zM353 29h2v2h-2zM353 40h2v2h-2zM353 62h2v2h-2zM353 73h2v2h-2zM353 84h2v2h-2zM353 95h2v2h-2zM353 106h2v2h-2zM353 129h2v2h-2zM353 140h2v2h-2zM353 151h2v2h-2zM353 162h2v2h-2zM353 173h2v2h-2zM353 195h2v2h-2zM353 206h2v2h-2zM353 218h2v2h-2zM353 229h2v2h-2zM353 240h2v2h-2zM353 262h2v2h-2zM353 273h2v2h-2zM353 284h2v2h-2zM353 295h2v2h-2zM353 306h2v2h-2zM353 329h2v2h-2zM353 340h2v2h-2zM353 351h2v2h-2zM353 362h2v2h-2zM353 373h2v2h-2zM353 395h2v2h-2zM353 406h2v2h-2zM353 418h2v2h-2zM353 429h2v2h-2zM353 440h2v2h-2zM353 462h2v2h-2zM353 473h2v2h-2zM353 484h2v2h-2zM353 495h2v2h-2zM353 506h2v2h-2zM353 529h2v2h-2zM353 540h2v2h-2zM353 551h2v2h-2zM353 562h2v2h-2zM353 573h2v2h-2zM353 595h2v2h-2zM353 606h2v2h-2zM353 618h2v2h-2zM353 629h2v2h-2zM353 640h2v2h-2zM353 662h2v2h-2zM353 673h2v2h-2zM353 684h2v2h-2zM353 695h2v2h-2zM353 706h2v2h-2zM365 6h2v2h-2zM365 18h2v2h-2zM365 29h2v2h-2zM365 40h2v2h-2zM365 62h2v2h-2zM365 73h2v2h-2zM365 84h2v2h-2zM365 95h2v2h-2zM365 106h2v2h-2zM365 129h2v2h-2zM365 140h2v2h-2zM365 151h2v2h-2zM365 162h2v2h-2zM365 173h2v2h-2zM365 195h2v2h-2zM365 206h2v2h-2zM365 218h2v2h-2zM365 229h2v2h-2zM365 240h2v2h-2zM365 262h2v2h-2zM365 273h2v2h-2zM365 284h2v2h-2zM365 295h2v2h-2zM365 306h2v2h-2zM365 329h2v2h-2zM365 340h2v2h-2zM365 351h2v2h-2zM365 362h2v2h-2zM365 373h2v2h-2zM365 395h2v2h-2zM365 406h2v2h-2zM365 418h2v2h-2zM365 429h2v2h-2zM365 440h2v2h-2zM365 462h2v2h-2zM365 473h2v2h-2zM365 484h2v2h-2zM365 495h2v2h-2zM365 506h2v2h-2zM365 529h2v2h-2zM365 540h2v2h-2zM365 551h2v2h-2zM365 562h2v2h-2zM365 573h2v2h-2zM365 595h2v2h-2zM365 606h2v2h-2zM365 618h2v2h-2zM365 629h2v2h-2zM365 640h2v2h-2zM365 662h2v2h-2zM365 673h2v2h-2zM365 684h2v2h-2zM365 695h2v2h-2zM365 706h2v2h-2zM376 6h2v2h-2zM376 18h2v2h-2zM376 29h2v2h-2zM376 40h2v2h-2zM376 62h2v2h-2zM376 73h2v2h-2zM376 84h2v2h-2zM376 95h2v2h-2zM376 106h2v2h-2zM376 129h2v2h-2zM376 140h2v2h-2zM376 151h2v2h-2zM376 162h2v2h-2zM376 173h2v2h-2zM376 195h2v2h-2zM376 206h2v2h-2zM376 218h2v2h-2zM376 229h2v2h-2zM376 240h2v2h-2zM376 262h2v2h-2zM376 273h2v2h-2zM376 284h2v2h-2zM376 295h2v2h-2zM376 306h2v2h-2zM376 329h2v2h-2zM376 340h2v2h-2zM376 351h2v2h-2zM376 362h2v2h-2zM376 373h2v2h-2zM376 395h2v2h-2zM376 406h2v2h-2zM376 418h2v2h-2zM376 429h2v2h-2zM376 440h2v2h-2zM376 462h2v2h-2zM376 473h2v2h-2zM376 484h2v2h-2zM376 495h2v2h-2zM376 506h2v2h-2zM376 529h2v2h-2zM376 540h2v2h-2zM376 551h2v2h-2zM376 562h2v2h-2zM376 573h2v2h-2zM376 595h2v2h-2zM376 606h2v2h-2zM376 618h2v2h-2zM376 629h2v2h-2zM376 640h2v2h-2zM376 662h2v2h-2zM376 673h2v2h-2zM376 684h2v2h-2zM376 695h2v2h-2zM376 706h2v2h-2zM387 6h2v2h-2zM387 18h2v2h-2zM387 29h2v2h-2zM387 40h2v2h-2zM387 62h2v2h-2zM387 73h2v2h-2zM387 84h2v2h-2zM387 95h2v2h-2zM387 106h2v2h-2zM387 129h2v2h-2zM387 140h2v2h-2zM387 151h2v2h-2zM387 162h2v2h-2zM387 173h2v2h-2zM387 195h2v2h-2zM387 206h2v2h-2zM387 218h2v2h-2zM387 229h2v2h-2zM387 240h2v2h-2zM387 262h2v2h-2zM387 273h2v2h-2zM387 284h2v2h-2zM387 295h2v2h-2zM387 306h2v2h-2zM387 329h2v2h-2zM387 340h2v2h-2zM387 351h2v2h-2zM387 362h2v2h-2zM387 373h2v2h-2zM387 395h2v2h-2zM387 406h2v2h-2zM387 418h2v2h-2zM387 429h2v2h-2zM387 440h2v2h-2zM387 462h2v2h-2zM387 473h2v2h-2zM387 484h2v2h-2zM387 495h2v2h-2zM387 506h2v2h-2zM387 529h2v2h-2zM387 540h2v2h-2zM387 551h2v2h-2zM387 562h2v2h-2zM387 573h2v2h-2zM387 595h2v2h-2zM387 606h2v2h-2zM387 618h2v2h-2zM387 629h2v2h-2zM387 640h2v2h-2zM387 662h2v2h-2zM387 673h2v2h-2zM387 684h2v2h-2zM387 695h2v2h-2zM387 706h2v2h-2zM409 6h2v2h-2zM409 18h2v2h-2zM409 29h2v2h-2zM409 40h2v2h-2zM409 62h2v2h-2zM409 73h2v2h-2zM409 84h2v2h-2zM409 95h2v2h-2zM409 106h2v2h-2zM409 129h2v2h-2zM409 140h2v2h-2zM409 151h2v2h-2zM409 162h2v2h-2zM409 173h2v2h-2zM409 195h2v2h-2zM409 206h2v2h-2zM409 218h2v2h-2zM409 229h2v2h-2zM409 240h2v2h-2zM409 262h2v2h-2zM409 273h2v2h-2zM409 284h2v2h-2zM409 295h2v2h-2zM409 306h2v2h-2zM409 329h2v2h-2zM409 340h2v2h-2zM409 351h2v2h-2zM409 362h2v2h-2zM409 373h2v2h-2zM409 395h2v2h-2zM409 406h2v2h-2zM409 418h2v2h-2zM409 429h2v2h-2zM409 440h2v2h-2zM409 462h2v2h-2zM409 473h2v2h-2zM409 484h2v2h-2zM409 495h2v2h-2zM409 506h2v2h-2zM409 529h2v2h-2zM409 540h2v2h-2zM409 551h2v2h-2zM409 562h2v2h-2zM409 573h2v2h-2zM409 595h2v2h-2zM409 606h2v2h-2zM409 618h2v2h-2zM409 629h2v2h-2zM409 640h2v2h-2zM409 662h2v2h-2zM409 673h2v2h-2zM409 684h2v2h-2zM409 695h2v2h-2zM409 706h2v2h-2zM420 6h2v2h-2zM420 18h2v2h-2zM420 29h2v2h-2zM420 40h2v2h-2zM420 62h2v2h-2zM420 73h2v2h-2zM420 84h2v2h-2zM420 95h2v2h-2zM420 106h2v2h-2zM420 129h2v2h-2zM420 140h2v2h-2zM420 151h2v2h-2zM420 162h2v2h-2zM420 173h2v2h-2zM420 195h2v2h-2zM420 206h2v2h-2zM420 218h2v2h-2zM420 229h2v2h-2zM420 240h2v2h-2zM420 262h2v2h-2zM420 273h2v2h-2zM420 284h2v2h-2zM420 295h2v2h-2zM420 306h2v2h-2zM420 329h2v2h-2zM420 340h2v2h-2zM420 351h2v2h-2zM420 362h2v2h-2zM420 373h2v2h-2zM420 395h2v2h-2zM420 406h2v2h-2zM420 418h2v2h-2zM420 429h2v2h-2zM420 440h2v2h-2zM420 462h2v2h-2zM420 473h2v2h-2zM420 484h2v2h-2zM420 495h2v2h-2zM420 506h2v2h-2zM420 529h2v2h-2zM420 540h2v2h-2zM420 551h2v2h-2zM420 562h2v2h-2zM420 573h2v2h-2zM420 595h2v2h-2zM420 606h2v2h-2zM420 618h2v2h-2zM420 629h2v2h-2zM420 640h2v2h-2zM420 662h2v2h-2zM420 673h2v2h-2zM420 684h2v2h-2zM420 695h2v2h-2zM420 706h2v2h-2zM431 6h2v2h-2zM431 18h2v2h-2zM431 29h2v2h-2zM431 40h2v2h-2zM431 62h2v2h-2zM431 73h2v2h-2zM431 84h2v2h-2zM431 95h2v2h-2zM431 106h2v2h-2zM431 129h2v2h-2zM431 140h2v2h-2zM431 151h2v2h-2zM431 162h2v2h-2zM431 173h2v2h-2zM431 195h2v2h-2zM431 206h2v2h-2zM431 218h2v2h-2zM431 229h2v2h-2zM431 240h2v2h-2zM431 262h2v2h-2zM431 273h2v2h-2zM431 284h2v2h-2zM431 295h2v2h-2zM431 306h2v2h-2zM431 329h2v2h-2zM431 340h2v2h-2zM431 351h2v2h-2zM431 362h2v2h-2zM431 373h2v2h-2zM431 395h2v2h-2zM431 406h2v2h-2zM431 418h2v2h-2zM431 429h2v2h-2zM431 440h2v2h-2zM431 462h2v2h-2zM431 473h2v2h-2zM431 484h2v2h-2zM431 495h2v2h-2zM431 506h2v2h-2zM431 529h2v2h-2zM431 540h2v2h-2zM431 551h2v2h-2zM431 562h2v2h-2zM431 573h2v2h-2zM431 595h2v2h-2zM431 606h2v2h-2zM431 618h2v2h-2zM431 629h2v2h-2zM431 640h2v2h-2zM431 662h2v2h-2zM431 673h2v2h-2zM431 684h2v2h-2zM431 695h2v2h-2zM431 706h2v2h-2zM442 6h2v2h-2zM442 18h2v2h-2zM442 29h2v2h-2zM442 40h2v2h-2zM442 62h2v2h-2zM442 73h2v2h-2zM442 84h2v2h-2zM442 95h2v2h-2zM442 106h2v2h-2zM442 129h2v2h-2zM442 140h2v2h-2zM442 151h2v2h-2zM442 162h2v2h-2zM442 173h2v2h-2zM442 195h2v2h-2zM442 206h2v2h-2zM442 218h2v2h-2zM442 229h2v2h-2zM442 240h2v2h-2zM442 262h2v2h-2zM442 273h2v2h-2zM442 284h2v2h-2zM442 295h2v2h-2zM442 306h2v2h-2zM442 329h2v2h-2zM442 340h2v2h-2zM442 351h2v2h-2zM442 362h2v2h-2zM442 373h2v2h-2zM442 395h2v2h-2zM442 406h2v2h-2zM442 418h2v2h-2zM442 429h2v2h-2zM442 440h2v2h-2zM442 462h2v2h-2zM442 473h2v2h-2zM442 484h2v2h-2zM442 495h2v2h-2zM442 506h2v2h-2zM442 529h2v2h-2zM442 540h2v2h-2zM442 551h2v2h-2zM442 562h2v2h-2zM442 573h2v2h-2zM442 595h2v2h-2zM442 606h2v2h-2zM442 618h2v2h-2zM442 629h2v2h-2zM442 640h2v2h-2zM442 662h2v2h-2zM442 673h2v2h-2zM442 684h2v2h-2zM442 695h2v2h-2zM442 706h2v2h-2zM453 6h2v2h-2zM453 18h2v2h-2zM453 29h2v2h-2zM453 40h2v2h-2zM453 62h2v2h-2zM453 73h2v2h-2zM453 84h2v2h-2zM453 95h2v2h-2zM453 106h2v2h-2zM453 129h2v2h-2zM453 140h2v2h-2zM453 151h2v2h-2zM453 162h2v2h-2zM453 173h2v2h-2zM453 195h2v2h-2zM453 206h2v2h-2zM453 218h2v2h-2zM453 229h2v2h-2zM453 240h2v2h-2zM453 262h2v2h-2zM453 273h2v2h-2zM453 284h2v2h-2zM453 295h2v2h-2zM453 306h2v2h-2zM453 329h2v2h-2zM453 340h2v2h-2zM453 351h2v2h-2zM453 362h2v2h-2zM453 373h2v2h-2zM453 395h2v2h-2zM453 406h2v2h-2zM453 418h2v2h-2zM453 429h2v2h-2zM453 440h2v2h-2zM453 462h2v2h-2zM453 473h2v2h-2zM453 484h2v2h-2zM453 495h2v2h-2zM453 506h2v2h-2zM453 529h2v2h-2zM453 540h2v2h-2zM453 551h2v2h-2zM453 562h2v2h-2zM453 573h2v2h-2zM453 595h2v2h-2zM453 606h2v2h-2zM453 618h2v2h-2zM453 629h2v2h-2zM453 640h2v2h-2zM453 662h2v2h-2zM453 673h2v2h-2zM453 684h2v2h-2zM453 695h2v2h-2zM453 706h2v2h-2zM476 6h2v2h-2zM476 18h2v2h-2zM476 29h2v2h-2zM476 40h2v2h-2zM476 62h2v2h-2zM476 73h2v2h-2zM476 84h2v2h-2zM476 95h2v2h-2zM476 106h2v2h-2zM476 129h2v2h-2zM476 140h2v2h-2zM476 151h2v2h-2zM476 162h2v2h-2zM476 173h2v2h-2zM476 195h2v2h-2zM476 206h2v2h-2zM476 218h2v2h-2zM476 229h2v2h-2zM476 240h2v2h-2zM476 262h2v2h-2zM476 273h2v2h-2zM476 284h2v2h-2zM476 295h2v2h-2zM476 306h2v2h-2zM476 329h2v2h-2zM476 340h2v2h-2zM476 351h2v2h-2zM476 362h2v2h-2zM476 373h2v2h-2zM476 395h2v2h-2zM476 406h2v2h-2zM476 418h2v2h-2zM476 429h2v2h-2zM476 440h2v2h-2zM476 462h2v2h-2zM476 473h2v2h-2zM476 484h2v2h-2zM476 495h2v2h-2zM476 506h2v2h-2zM476 529h2v2h-2zM476 540h2v2h-2zM476 551h2v2h-2zM476 562h2v2h-2zM476 573h2v2h-2zM476 595h2v2h-2zM476 606h2v2h-2zM476 618h2v2h-2zM476 629h2v2h-2zM476 640h2v2h-2zM476 662h2v2h-2zM476 673h2v2h-2zM476 684h2v2h-2zM476 695h2v2h-2zM476 706h2v2h-2zM487 6h2v2h-2zM487 18h2v2h-2zM487 29h2v2h-2zM487 40h2v2h-2zM487 62h2v2h-2zM487 73h2v2h-2zM487 84h2v2h-2zM487 95h2v2h-2zM487 106h2v2h-2zM487 129h2v2h-2zM487 140h2v2h-2zM487 151h2v2h-2zM487 162h2v2h-2zM487 173h2v2h-2zM487 195h2v2h-2zM487 206h2v2h-2zM487 218h2v2h-2zM487 229h2v2h-2zM487 240h2v2h-2zM487 262h2v2h-2zM487 273h2v2h-2zM487 284h2v2h-2zM487 295h2v2h-2zM487 306h2v2h-2zM487 329h2v2h-2zM487 340h2v2h-2zM487 351h2v2h-2zM487 362h2v2h-2zM487 373h2v2h-2zM487 395h2v2h-2zM487 406h2v2h-2zM487 418h2v2h-2zM487 429h2v2h-2zM487 440h2v2h-2zM487 462h2v2h-2zM487 473h2v2h-2zM487 484h2v2h-2zM487 495h2v2h-2zM487 506h2v2h-2zM487 529h2v2h-2zM487 540h2v2h-2zM487 551h2v2h-2zM487 562h2v2h-2zM487 573h2v2h-2zM487 595h2v2h-2zM487 606h2v2h-2zM487 618h2v2h-2zM487 629h2v2h-2zM487 640h2v2h-2zM487 662h2v2h-2zM487 673h2v2h-2zM487 684h2v2h-2zM487 695h2v2h-2zM487 706h2v2h-2zM498 6h2v2h-2zM498 18h2v2h-2zM498 29h2v2h-2zM498 40h2v2h-2zM498 62h2v2h-2zM498 73h2v2h-2zM498 84h2v2h-2zM498 95h2v2h-2zM498 106h2v2h-2zM498 129h2v2h-2zM498 140h2v2h-2zM498 151h2v2h-2zM498 162h2v2h-2zM498 173h2v2h-2zM498 195h2v2h-2zM498 206h2v2h-2zM498 218h2v2h-2zM498 229h2v2h-2zM498 240h2v2h-2zM498 262h2v2h-2zM498 273h2v2h-2zM498 284h2v2h-2zM498 295h2v2h-2zM498 306h2v2h-2zM498 329h2v2h-2zM498 340h2v2h-2zM498 351h2v2h-2zM498 362h2v2h-2zM498 373h2v2h-2zM498 395h2v2h-2zM498 406h2v2h-2zM498 418h2v2h-2zM498 429h2v2h-2zM498 440h2v2h-2zM498 462h2v2h-2zM498 473h2v2h-2zM498 484h2v2h-2zM498 495h2v2h-2zM498 506h2v2h-2zM498 529h2v2h-2zM498 540h2v2h-2zM498 551h2v2h-2zM498 562h2v2h-2zM498 573h2v2h-2zM498 595h2v2h-2zM498 606h2v2h-2zM498 618h2v2h-2zM498 629h2v2h-2zM498 640h2v2h-2zM498 662h2v2h-2zM498 673h2v2h-2zM498 684h2v2h-2zM498 695h2v2h-2zM498 706h2v2h-2zM509 6h2v2h-2zM509 18h2v2h-2zM509 29h2v2h-2zM509 40h2v2h-2zM509 62h2v2h-2zM509 73h2v2h-2zM509 84h2v2h-2zM509 95h2v2h-2zM509 106h2v2h-2zM509 129h2v2h-2zM509 140h2v2h-2zM509 151h2v2h-2zM509 162h2v2h-2zM509 173h2v2h-2zM509 195h2v2h-2zM509 206h2v2h-2zM509 218h2v2h-2zM509 229h2v2h-2zM509 240h2v2h-2zM509 262h2v2h-2zM509 273h2v2h-2zM509 284h2v2h-2zM509 295h2v2h-2zM509 306h2v2h-2zM509 329h2v2h-2zM509 340h2v2h-2zM509 351h2v2h-2zM509 362h2v2h-2zM509 373h2v2h-2zM509 395h2v2h-2zM509 406h2v2h-2zM509 418h2v2h-2zM509 429h2v2h-2zM509 440h2v2h-2zM509 462h2v2h-2zM509 473h2v2h-2zM509 484h2v2h-2zM509 495h2v2h-2zM509 506h2v2h-2zM509 529h2v2h-2zM509 540h2v2h-2zM509 551h2v2h-2zM509 562h2v2h-2zM509 573h2v2h-2zM509 595h2v2h-2zM509 606h2v2h-2zM509 618h2v2h-2zM509 629h2v2h-2zM509 640h2v2h-2zM509 662h2v2h-2zM509 673h2v2h-2zM509 684h2v2h-2zM509 695h2v2h-2zM509 706h2v2h-2zM520 6h2v2h-2zM520 18h2v2h-2zM520 29h2v2h-2zM520 40h2v2h-2zM520 62h2v2h-2zM520 73h2v2h-2zM520 84h2v2h-2zM520 95h2v2h-2zM520 106h2v2h-2zM520 129h2v2h-2zM520 140h2v2h-2zM520 151h2v2h-2zM520 162h2v2h-2zM520 173h2v2h-2zM520 195h2v2h-2zM520 206h2v2h-2zM520 218h2v2h-2zM520 229h2v2h-2zM520 240h2v2h-2zM520 262h2v2h-2zM520 273h2v2h-2zM520 284h2v2h-2zM520 295h2v2h-2zM520 306h2v2h-2zM520 329h2v2h-2zM520 340h2v2h-2zM520 351h2v2h-2zM520 362h2v2h-2zM520 373h2v2h-2zM520 395h2v2h-2zM520 406h2v2h-2zM520 418h2v2h-2zM520 429h2v2h-2zM520 440h2v2h-2zM520 462h2v2h-2zM520 473h2v2h-2zM520 484h2v2h-2zM520 495h2v2h-2zM520 506h2v2h-2zM520 529h2v2h-2zM520 540h2v2h-2zM520 551h2v2h-2zM520 562h2v2h-2zM520 573h2v2h-2zM520 595h2v2h-2zM520 606h2v2h-2zM520 618h2v2h-2zM520 629h2v2h-2zM520 640h2v2h-2zM520 662h2v2h-2zM520 673h2v2h-2zM520 684h2v2h-2zM520 695h2v2h-2zM520 706h2v2h-2zM542 6h2v2h-2zM542 18h2v2h-2zM542 29h2v2h-2zM542 40h2v2h-2zM542 62h2v2h-2zM542 73h2v2h-2zM542 84h2v2h-2zM542 95h2v2h-2zM542 106h2v2h-2zM542 129h2v2h-2zM542 140h2v2h-2zM542 151h2v2h-2zM542 162h2v2h-2zM542 173h2v2h-2zM542 195h2v2h-2zM542 206h2v2h-2zM542 218h2v2h-2zM542 229h2v2h-2zM542 240h2v2h-2zM542 262h2v2h-2zM542 273h2v2h-2zM542 284h2v2h-2zM542 295h2v2h-2zM542 306h2v2h-2zM542 329h2v2h-2zM542 340h2v2h-2zM542 351h2v2h-2zM542 362h2v2h-2zM542 373h2v2h-2zM542 395h2v2h-2zM542 406h2v2h-2zM542 418h2v2h-2zM542 429h2v2h-2zM542 440h2v2h-2zM542 462h2v2h-2zM542 473h2v2h-2zM542 484h2v2h-2zM542 495h2v2h-2zM542 506h2v2h-2zM542 529h2v2h-2zM542 540h2v2h-2zM542 551h2v2h-2zM542 562h2v2h-2zM542 573h2v2h-2zM542 595h2v2h-2zM542 606h2v2h-2zM542 618h2v2h-2zM542 629h2v2h-2zM542 640h2v2h-2zM542 662h2v2h-2zM542 673h2v2h-2zM542 684h2v2h-2zM542 695h2v2h-2zM542 706h2v2h-2zM553 6h2v2h-2zM553 18h2v2h-2zM553 29h2v2h-2zM553 40h2v2h-2zM553 62h2v2h-2zM553 73h2v2h-2zM553 84h2v2h-2zM553 95h2v2h-2zM553 106h2v2h-2zM553 129h2v2h-2zM553 140h2v2h-2zM553 151h2v2h-2zM553 162h2v2h-2zM553 173h2v2h-2zM553 195h2v2h-2zM553 206h2v2h-2zM553 218h2v2h-2zM553 229h2v2h-2zM553 240h2v2h-2zM553 262h2v2h-2zM553 273h2v2h-2zM553 284h2v2h-2zM553 295h2v2h-2zM553 306h2v2h-2zM553 329h2v2h-2zM553 340h2v2h-2zM553 351h2v2h-2zM553 362h2v2h-2zM553 373h2v2h-2zM553 395h2v2h-2zM553 406h2v2h-2zM553 418h2v2h-2zM553 429h2v2h-2zM553 440h2v2h-2zM553 462h2v2h-2zM553 473h2v2h-2zM553 484h2v2h-2zM553 495h2v2h-2zM553 506h2v2h-2zM553 529h2v2h-2zM553 540h2v2h-2zM553 551h2v2h-2zM553 562h2v2h-2zM553 573h2v2h-2zM553 595h2v2h-2zM553 606h2v2h-2zM553 618h2v2h-2zM553 629h2v2h-2zM553 640h2v2h-2zM553 662h2v2h-2zM553 673h2v2h-2zM553 684h2v2h-2zM553 695h2v2h-2zM553 706h2v2h-2zM565 6h2v2h-2zM565 18h2v2h-2zM565 29h2v2h-2zM565 40h2v2h-2zM565 62h2v2h-2zM565 73h2v2h-2zM565 84h2v2h-2zM565 95h2v2h-2zM565 106h2v2h-2zM565 129h2v2h-2zM565 140h2v2h-2zM565 151h2v2h-2zM565 162h2v2h-2zM565 173h2v2h-2zM565 195h2v2h-2zM565 206h2v2h-2zM565 218h2v2h-2zM565 229h2v2h-2zM565 240h2v2h-2zM565 262h2v2h-2zM565 273h2v2h-2zM565 284h2v2h-2zM565 295h2v2h-2zM565 306h2v2h-2zM565 329h2v2h-2zM565 340h2v2h-2zM565 351h2v2h-2zM565 362h2v2h-2zM565 373h2v2h-2zM565 395h2v2h-2zM565 406h2v2h-2zM565 418h2v2h-2zM565 429h2v2h-2zM565 440h2v2h-2zM565 462h2v2h-2zM565 473h2v2h-2zM565 484h2v2h-2zM565 495h2v2h-2zM565 506h2v2h-2zM565 529h2v2h-2zM565 540h2v2h-2zM565 551h2v2h-2zM565 562h2v2h-2zM565 573h2v2h-2zM565 595h2v2h-2zM565 606h2v2h-2zM565 618h2v2h-2zM565 629h2v2h-2zM565 640h2v2h-2zM565 662h2v2h-2zM565 673h2v2h-2zM565 684h2v2h-2zM565 695h2v2h-2zM565 706h2v2h-2zM576 6h2v2h-2zM576 18h2v2h-2zM576 29h2v2h-2zM576 40h2v2h-2zM576 62h2v2h-2zM576 73h2v2h-2zM576 84h2v2h-2zM576 95h2v2h-2zM576 106h2v2h-2zM576 129h2v2h-2zM576 140h2v2h-2zM576 151h2v2h-2zM576 162h2v2h-2zM576 173h2v2h-2zM576 195h2v2h-2zM576 206h2v2h-2zM576 218h2v2h-2zM576 229h2v2h-2zM576 240h2v2h-2zM576 262h2v2h-2zM576 273h2v2h-2zM576 284h2v2h-2zM576 295h2v2h-2zM576 306h2v2h-2zM576 329h2v2h-2zM576 340h2v2h-2zM576 351h2v2h-2zM576 362h2v2h-2zM576 373h2v2h-2zM576 395h2v2h-2zM576 406h2v2h-2zM576 418h2v2h-2zM576 429h2v2h-2zM576 440h2v2h-2zM576 462h2v2h-2zM576 473h2v2h-2zM576 484h2v2h-2zM576 495h2v2h-2zM576 506h2v2h-2zM576 529h2v2h-2zM576 540h2v2h-2zM576 551h2v2h-2zM576 562h2v2h-2zM576 573h2v2h-2zM576 595h2v2h-2zM576 606h2v2h-2zM576 618h2v2h-2zM576 629h2v2h-2zM576 640h2v2h-2zM576 662h2v2h-2zM576 673h2v2h-2zM576 684h2v2h-2zM576 695h2v2h-2zM576 706h2v2h-2zM587 6h2v2h-2zM587 18h2v2h-2zM587 29h2v2h-2zM587 40h2v2h-2zM587 62h2v2h-2zM587 73h2v2h-2zM587 84h2v2h-2zM587 95h2v2h-2zM587 106h2v2h-2zM587 129h2v2h-2zM587 140h2v2h-2zM587 151h2v2h-2zM587 162h2v2h-2zM587 173h2v2h-2zM587 195h2v2h-2zM587 206h2v2h-2zM587 218h2v2h-2zM587 229h2v2h-2zM587 240h2v2h-2zM587 262h2v2h-2zM587 273h2v2h-2zM587 284h2v2h-2zM587 295h2v2h-2zM587 306h2v2h-2zM587 329h2v2h-2zM587 340h2v2h-2zM587 351h2v2h-2zM587 362h2v2h-2zM587 373h2v2h-2zM587 395h2v2h-2zM587 406h2v2h-2zM587 418h2v2h-2zM587 429h2v2h-2zM587 440h2v2h-2zM587 462h2v2h-2zM587 473h2v2h-2zM587 484h2v2h-2zM587 495h2v2h-2zM587 506h2v2h-2zM587 529h2v2h-2zM587 540h2v2h-2zM587 551h2v2h-2zM587 562h2v2h-2zM587 573h2v2h-2zM587 595h2v2h-2zM587 606h2v2h-2zM587 618h2v2h-2zM587 629h2v2h-2zM587 640h2v2h-2zM587 662h2v2h-2zM587 673h2v2h-2zM587 684h2v2h-2zM587 695h2v2h-2zM587 706h2v2h-2zM609 6h2v2h-2zM609 18h2v2h-2zM609 29h2v2h-2zM609 40h2v2h-2zM609 62h2v2h-2zM609 73h2v2h-2zM609 84h2v2h-2zM609 95h2v2h-2zM609 106h2v2h-2zM609 129h2v2h-2zM609 140h2v2h-2zM609 151h2v2h-2zM609 162h2v2h-2zM609 173h2v2h-2zM609 195h2v2h-2zM609 206h2v2h-2zM609 218h2v2h-2zM609 229h2v2h-2zM609 240h2v2h-2zM609 262h2v2h-2zM609 273h2v2h-2zM609 284h2v2h-2zM609 295h2v2h-2zM609 306h2v2h-2zM609 329h2v2h-2zM609 340h2v2h-2zM609 351h2v2h-2zM609 362h2v2h-2zM609 373h2v2h-2zM609 395h2v2h-2zM609 406h2v2h-2zM609 418h2v2h-2zM609 429h2v2h-2zM609 440h2v2h-2zM609 462h2v2h-2zM609 473h2v2h-2zM609 484h2v2h-2zM609 495h2v2h-2zM609 506h2v2h-2zM609 529h2v2h-2zM609 540h2v2h-2zM609 551h2v2h-2zM609 562h2v2h-2zM609 573h2v2h-2zM609 595h2v2h-2zM609 606h2v2h-2zM609 618h2v2h-2zM609 629h2v2h-2zM609 640h2v2h-2zM609 662h2v2h-2zM609 673h2v2h-2zM609 684h2v2h-2zM609 695h2v2h-2zM609 706h2v2h-2z" fill="#bcbcbc"/>
<path d="M66.5 0V709M132.5 0V709M199.5 0V709M332.5 0V709M399.5 0V709M466.5 0V709M532.5 0V709M0 52.5H616M0 119.5H616M0 185.5H616M0 252.5H616M0 385.5H616M0 452.5H616M0 519.5H616M0 585.5H616" stroke="#c6c6c6" stroke-width="1" stroke-dasharray="1 3" fill="none"/>
<path d="M266.5 0V709M599.5 0V709M0 319.5H616M0 652.5H616" stroke="#c4c4c4" stroke-width="1" fill="none"/>
</g>
<g clip-path="url(#cin)">
<path d="M9 6h2v2h-2zM9 18h2v2h-2zM9 29h2v2h-2zM9 40h2v2h-2zM9 62h2v2h-2zM9 73h2v2h-2zM9 84h2v2h-2zM9 95h2v2h-2zM9 106h2v2h-2zM9 129h2v2h-2zM9 140h2v2h-2zM9 151h2v2h-2zM9 162h2v2h-2zM9 173h2v2h-2zM9 195h2v2h-2zM9 206h2v2h-2zM9 218h2v2h-2zM9 229h2v2h-2zM9 240h2v2h-2zM9 262h2v2h-2zM9 273h2v2h-2zM9 284h2v2h-2zM9 295h2v2h-2zM9 306h2v2h-2zM9 329h2v2h-2zM9 340h2v2h-2zM9 351h2v2h-2zM9 362h2v2h-2zM9 373h2v2h-2zM9 395h2v2h-2zM9 406h2v2h-2zM9 418h2v2h-2zM9 429h2v2h-2zM9 440h2v2h-2zM9 462h2v2h-2zM9 473h2v2h-2zM9 484h2v2h-2zM9 495h2v2h-2zM9 506h2v2h-2zM9 529h2v2h-2zM9 540h2v2h-2zM9 551h2v2h-2zM9 562h2v2h-2zM9 573h2v2h-2zM9 595h2v2h-2zM9 606h2v2h-2zM9 618h2v2h-2zM9 629h2v2h-2zM9 640h2v2h-2zM9 662h2v2h-2zM9 673h2v2h-2zM9 684h2v2h-2zM9 695h2v2h-2zM9 706h2v2h-2zM20 6h2v2h-2zM20 18h2v2h-2zM20 29h2v2h-2zM20 40h2v2h-2zM20 62h2v2h-2zM20 73h2v2h-2zM20 84h2v2h-2zM20 95h2v2h-2zM20 106h2v2h-2zM20 129h2v2h-2zM20 140h2v2h-2zM20 151h2v2h-2zM20 162h2v2h-2zM20 173h2v2h-2zM20 195h2v2h-2zM20 206h2v2h-2zM20 218h2v2h-2zM20 229h2v2h-2zM20 240h2v2h-2zM20 262h2v2h-2zM20 273h2v2h-2zM20 284h2v2h-2zM20 295h2v2h-2zM20 306h2v2h-2zM20 329h2v2h-2zM20 340h2v2h-2zM20 351h2v2h-2zM20 362h2v2h-2zM20 373h2v2h-2zM20 395h2v2h-2zM20 406h2v2h-2zM20 418h2v2h-2zM20 429h2v2h-2zM20 440h2v2h-2zM20 462h2v2h-2zM20 473h2v2h-2zM20 484h2v2h-2zM20 495h2v2h-2zM20 506h2v2h-2zM20 529h2v2h-2zM20 540h2v2h-2zM20 551h2v2h-2zM20 562h2v2h-2zM20 573h2v2h-2zM20 595h2v2h-2zM20 606h2v2h-2zM20 618h2v2h-2zM20 629h2v2h-2zM20 640h2v2h-2zM20 662h2v2h-2zM20 673h2v2h-2zM20 684h2v2h-2zM20 695h2v2h-2zM20 706h2v2h-2zM31 6h2v2h-2zM31 18h2v2h-2zM31 29h2v2h-2zM31 40h2v2h-2zM31 62h2v2h-2zM31 73h2v2h-2zM31 84h2v2h-2zM31 95h2v2h-2zM31 106h2v2h-2zM31 129h2v2h-2zM31 140h2v2h-2zM31 151h2v2h-2zM31 162h2v2h-2zM31 173h2v2h-2zM31 195h2v2h-2zM31 206h2v2h-2zM31 218h2v2h-2zM31 229h2v2h-2zM31 240h2v2h-2zM31 262h2v2h-2zM31 273h2v2h-2zM31 284h2v2h-2zM31 295h2v2h-2zM31 306h2v2h-2zM31 329h2v2h-2zM31 340h2v2h-2zM31 351h2v2h-2zM31 362h2v2h-2zM31 373h2v2h-2zM31 395h2v2h-2zM31 406h2v2h-2zM31 418h2v2h-2zM31 429h2v2h-2zM31 440h2v2h-2zM31 462h2v2h-2zM31 473h2v2h-2zM31 484h2v2h-2zM31 495h2v2h-2zM31 506h2v2h-2zM31 529h2v2h-2zM31 540h2v2h-2zM31 551h2v2h-2zM31 562h2v2h-2zM31 573h2v2h-2zM31 595h2v2h-2zM31 606h2v2h-2zM31 618h2v2h-2zM31 629h2v2h-2zM31 640h2v2h-2zM31 662h2v2h-2zM31 673h2v2h-2zM31 684h2v2h-2zM31 695h2v2h-2zM31 706h2v2h-2zM42 6h2v2h-2zM42 18h2v2h-2zM42 29h2v2h-2zM42 40h2v2h-2zM42 62h2v2h-2zM42 73h2v2h-2zM42 84h2v2h-2zM42 95h2v2h-2zM42 106h2v2h-2zM42 129h2v2h-2zM42 140h2v2h-2zM42 151h2v2h-2zM42 162h2v2h-2zM42 173h2v2h-2zM42 195h2v2h-2zM42 206h2v2h-2zM42 218h2v2h-2zM42 229h2v2h-2zM42 240h2v2h-2zM42 262h2v2h-2zM42 273h2v2h-2zM42 284h2v2h-2zM42 295h2v2h-2zM42 306h2v2h-2zM42 329h2v2h-2zM42 340h2v2h-2zM42 351h2v2h-2zM42 362h2v2h-2zM42 373h2v2h-2zM42 395h2v2h-2zM42 406h2v2h-2zM42 418h2v2h-2zM42 429h2v2h-2zM42 440h2v2h-2zM42 462h2v2h-2zM42 473h2v2h-2zM42 484h2v2h-2zM42 495h2v2h-2zM42 506h2v2h-2zM42 529h2v2h-2zM42 540h2v2h-2zM42 551h2v2h-2zM42 562h2v2h-2zM42 573h2v2h-2zM42 595h2v2h-2zM42 606h2v2h-2zM42 618h2v2h-2zM42 629h2v2h-2zM42 640h2v2h-2zM42 662h2v2h-2zM42 673h2v2h-2zM42 684h2v2h-2zM42 695h2v2h-2zM42 706h2v2h-2zM53 6h2v2h-2zM53 18h2v2h-2zM53 29h2v2h-2zM53 40h2v2h-2zM53 62h2v2h-2zM53 73h2v2h-2zM53 84h2v2h-2zM53 95h2v2h-2zM53 106h2v2h-2zM53 129h2v2h-2zM53 140h2v2h-2zM53 151h2v2h-2zM53 162h2v2h-2zM53 173h2v2h-2zM53 195h2v2h-2zM53 206h2v2h-2zM53 218h2v2h-2zM53 229h2v2h-2zM53 240h2v2h-2zM53 262h2v2h-2zM53 273h2v2h-2zM53 284h2v2h-2zM53 295h2v2h-2zM53 306h2v2h-2zM53 329h2v2h-2zM53 340h2v2h-2zM53 351h2v2h-2zM53 362h2v2h-2zM53 373h2v2h-2zM53 395h2v2h-2zM53 406h2v2h-2zM53 418h2v2h-2zM53 429h2v2h-2zM53 440h2v2h-2zM53 462h2v2h-2zM53 473h2v2h-2zM53 484h2v2h-2zM53 495h2v2h-2zM53 506h2v2h-2zM53 529h2v2h-2zM53 540h2v2h-2zM53 551h2v2h-2zM53 562h2v2h-2zM53 573h2v2h-2zM53 595h2v2h-2zM53 606h2v2h-2zM53 618h2v2h-2zM53 629h2v2h-2zM53 640h2v2h-2zM53 662h2v2h-2zM53 673h2v2h-2zM53 684h2v2h-2zM53 695h2v2h-2zM53 706h2v2h-2zM76 6h2v2h-2zM76 18h2v2h-2zM76 29h2v2h-2zM76 40h2v2h-2zM76 62h2v2h-2zM76 73h2v2h-2zM76 84h2v2h-2zM76 95h2v2h-2zM76 106h2v2h-2zM76 129h2v2h-2zM76 140h2v2h-2zM76 151h2v2h-2zM76 162h2v2h-2zM76 173h2v2h-2zM76 195h2v2h-2zM76 206h2v2h-2zM76 218h2v2h-2zM76 229h2v2h-2zM76 240h2v2h-2zM76 262h2v2h-2zM76 273h2v2h-2zM76 284h2v2h-2zM76 295h2v2h-2zM76 306h2v2h-2zM76 329h2v2h-2zM76 340h2v2h-2zM76 351h2v2h-2zM76 362h2v2h-2zM76 373h2v2h-2zM76 395h2v2h-2zM76 406h2v2h-2zM76 418h2v2h-2zM76 429h2v2h-2zM76 440h2v2h-2zM76 462h2v2h-2zM76 473h2v2h-2zM76 484h2v2h-2zM76 495h2v2h-2zM76 506h2v2h-2zM76 529h2v2h-2zM76 540h2v2h-2zM76 551h2v2h-2zM76 562h2v2h-2zM76 573h2v2h-2zM76 595h2v2h-2zM76 606h2v2h-2zM76 618h2v2h-2zM76 629h2v2h-2zM76 640h2v2h-2zM76 662h2v2h-2zM76 673h2v2h-2zM76 684h2v2h-2zM76 695h2v2h-2zM76 706h2v2h-2zM87 6h2v2h-2zM87 18h2v2h-2zM87 29h2v2h-2zM87 40h2v2h-2zM87 62h2v2h-2zM87 73h2v2h-2zM87 84h2v2h-2zM87 95h2v2h-2zM87 106h2v2h-2zM87 129h2v2h-2zM87 140h2v2h-2zM87 151h2v2h-2zM87 162h2v2h-2zM87 173h2v2h-2zM87 195h2v2h-2zM87 206h2v2h-2zM87 218h2v2h-2zM87 229h2v2h-2zM87 240h2v2h-2zM87 262h2v2h-2zM87 273h2v2h-2zM87 284h2v2h-2zM87 295h2v2h-2zM87 306h2v2h-2zM87 329h2v2h-2zM87 340h2v2h-2zM87 351h2v2h-2zM87 362h2v2h-2zM87 373h2v2h-2zM87 395h2v2h-2zM87 406h2v2h-2zM87 418h2v2h-2zM87 429h2v2h-2zM87 440h2v2h-2zM87 462h2v2h-2zM87 473h2v2h-2zM87 484h2v2h-2zM87 495h2v2h-2zM87 506h2v2h-2zM87 529h2v2h-2zM87 540h2v2h-2zM87 551h2v2h-2zM87 562h2v2h-2zM87 573h2v2h-2zM87 595h2v2h-2zM87 606h2v2h-2zM87 618h2v2h-2zM87 629h2v2h-2zM87 640h2v2h-2zM87 662h2v2h-2zM87 673h2v2h-2zM87 684h2v2h-2zM87 695h2v2h-2zM87 706h2v2h-2zM98 6h2v2h-2zM98 18h2v2h-2zM98 29h2v2h-2zM98 40h2v2h-2zM98 62h2v2h-2zM98 73h2v2h-2zM98 84h2v2h-2zM98 95h2v2h-2zM98 106h2v2h-2zM98 129h2v2h-2zM98 140h2v2h-2zM98 151h2v2h-2zM98 162h2v2h-2zM98 173h2v2h-2zM98 195h2v2h-2zM98 206h2v2h-2zM98 218h2v2h-2zM98 229h2v2h-2zM98 240h2v2h-2zM98 262h2v2h-2zM98 273h2v2h-2zM98 284h2v2h-2zM98 295h2v2h-2zM98 306h2v2h-2zM98 329h2v2h-2zM98 340h2v2h-2zM98 351h2v2h-2zM98 362h2v2h-2zM98 373h2v2h-2zM98 395h2v2h-2zM98 406h2v2h-2zM98 418h2v2h-2zM98 429h2v2h-2zM98 440h2v2h-2zM98 462h2v2h-2zM98 473h2v2h-2zM98 484h2v2h-2zM98 495h2v2h-2zM98 506h2v2h-2zM98 529h2v2h-2zM98 540h2v2h-2zM98 551h2v2h-2zM98 562h2v2h-2zM98 573h2v2h-2zM98 595h2v2h-2zM98 606h2v2h-2zM98 618h2v2h-2zM98 629h2v2h-2zM98 640h2v2h-2zM98 662h2v2h-2zM98 673h2v2h-2zM98 684h2v2h-2zM98 695h2v2h-2zM98 706h2v2h-2zM109 6h2v2h-2zM109 18h2v2h-2zM109 29h2v2h-2zM109 40h2v2h-2zM109 62h2v2h-2zM109 73h2v2h-2zM109 84h2v2h-2zM109 95h2v2h-2zM109 106h2v2h-2zM109 129h2v2h-2zM109 140h2v2h-2zM109 151h2v2h-2zM109 162h2v2h-2zM109 173h2v2h-2zM109 195h2v2h-2zM109 206h2v2h-2zM109 218h2v2h-2zM109 229h2v2h-2zM109 240h2v2h-2zM109 262h2v2h-2zM109 273h2v2h-2zM109 284h2v2h-2zM109 295h2v2h-2zM109 306h2v2h-2zM109 329h2v2h-2zM109 340h2v2h-2zM109 351h2v2h-2zM109 362h2v2h-2zM109 373h2v2h-2zM109 395h2v2h-2zM109 406h2v2h-2zM109 418h2v2h-2zM109 429h2v2h-2zM109 440h2v2h-2zM109 462h2v2h-2zM109 473h2v2h-2zM109 484h2v2h-2zM109 495h2v2h-2zM109 506h2v2h-2zM109 529h2v2h-2zM109 540h2v2h-2zM109 551h2v2h-2zM109 562h2v2h-2zM109 573h2v2h-2zM109 595h2v2h-2zM109 606h2v2h-2zM109 618h2v2h-2zM109 629h2v2h-2zM109 640h2v2h-2zM109 662h2v2h-2zM109 673h2v2h-2zM109 684h2v2h-2zM109 695h2v2h-2zM109 706h2v2h-2zM120 6h2v2h-2zM120 18h2v2h-2zM120 29h2v2h-2zM120 40h2v2h-2zM120 62h2v2h-2zM120 73h2v2h-2zM120 84h2v2h-2zM120 95h2v2h-2zM120 106h2v2h-2zM120 129h2v2h-2zM120 140h2v2h-2zM120 151h2v2h-2zM120 162h2v2h-2zM120 173h2v2h-2zM120 195h2v2h-2zM120 206h2v2h-2zM120 218h2v2h-2zM120 229h2v2h-2zM120 240h2v2h-2zM120 262h2v2h-2zM120 273h2v2h-2zM120 284h2v2h-2zM120 295h2v2h-2zM120 306h2v2h-2zM120 329h2v2h-2zM120 340h2v2h-2zM120 351h2v2h-2zM120 362h2v2h-2zM120 373h2v2h-2zM120 395h2v2h-2zM120 406h2v2h-2zM120 418h2v2h-2zM120 429h2v2h-2zM120 440h2v2h-2zM120 462h2v2h-2zM120 473h2v2h-2zM120 484h2v2h-2zM120 495h2v2h-2zM120 506h2v2h-2zM120 529h2v2h-2zM120 540h2v2h-2zM120 551h2v2h-2zM120 562h2v2h-2zM120 573h2v2h-2zM120 595h2v2h-2zM120 606h2v2h-2zM120 618h2v2h-2zM120 629h2v2h-2zM120 640h2v2h-2zM120 662h2v2h-2zM120 673h2v2h-2zM120 684h2v2h-2zM120 695h2v2h-2zM120 706h2v2h-2zM142 6h2v2h-2zM142 18h2v2h-2zM142 29h2v2h-2zM142 40h2v2h-2zM142 62h2v2h-2zM142 73h2v2h-2zM142 84h2v2h-2zM142 95h2v2h-2zM142 106h2v2h-2zM142 129h2v2h-2zM142 140h2v2h-2zM142 151h2v2h-2zM142 162h2v2h-2zM142 173h2v2h-2zM142 195h2v2h-2zM142 206h2v2h-2zM142 218h2v2h-2zM142 229h2v2h-2zM142 240h2v2h-2zM142 262h2v2h-2zM142 273h2v2h-2zM142 284h2v2h-2zM142 295h2v2h-2zM142 306h2v2h-2zM142 329h2v2h-2zM142 340h2v2h-2zM142 351h2v2h-2zM142 362h2v2h-2zM142 373h2v2h-2zM142 395h2v2h-2zM142 406h2v2h-2zM142 418h2v2h-2zM142 429h2v2h-2zM142 440h2v2h-2zM142 462h2v2h-2zM142 473h2v2h-2zM142 484h2v2h-2zM142 495h2v2h-2zM142 506h2v2h-2zM142 529h2v2h-2zM142 540h2v2h-2zM142 551h2v2h-2zM142 562h2v2h-2zM142 573h2v2h-2zM142 595h2v2h-2zM142 606h2v2h-2zM142 618h2v2h-2zM142 629h2v2h-2zM142 640h2v2h-2zM142 662h2v2h-2zM142 673h2v2h-2zM142 684h2v2h-2zM142 695h2v2h-2zM142 706h2v2h-2zM153 6h2v2h-2zM153 18h2v2h-2zM153 29h2v2h-2zM153 40h2v2h-2zM153 62h2v2h-2zM153 73h2v2h-2zM153 84h2v2h-2zM153 95h2v2h-2zM153 106h2v2h-2zM153 129h2v2h-2zM153 140h2v2h-2zM153 151h2v2h-2zM153 162h2v2h-2zM153 173h2v2h-2zM153 195h2v2h-2zM153 206h2v2h-2zM153 218h2v2h-2zM153 229h2v2h-2zM153 240h2v2h-2zM153 262h2v2h-2zM153 273h2v2h-2zM153 284h2v2h-2zM153 295h2v2h-2zM153 306h2v2h-2zM153 329h2v2h-2zM153 340h2v2h-2zM153 351h2v2h-2zM153 362h2v2h-2zM153 373h2v2h-2zM153 395h2v2h-2zM153 406h2v2h-2zM153 418h2v2h-2zM153 429h2v2h-2zM153 440h2v2h-2zM153 462h2v2h-2zM153 473h2v2h-2zM153 484h2v2h-2zM153 495h2v2h-2zM153 506h2v2h-2zM153 529h2v2h-2zM153 540h2v2h-2zM153 551h2v2h-2zM153 562h2v2h-2zM153 573h2v2h-2zM153 595h2v2h-2zM153 606h2v2h-2zM153 618h2v2h-2zM153 629h2v2h-2zM153 640h2v2h-2zM153 662h2v2h-2zM153 673h2v2h-2zM153 684h2v2h-2zM153 695h2v2h-2zM153 706h2v2h-2zM165 6h2v2h-2zM165 18h2v2h-2zM165 29h2v2h-2zM165 40h2v2h-2zM165 62h2v2h-2zM165 73h2v2h-2zM165 84h2v2h-2zM165 95h2v2h-2zM165 106h2v2h-2zM165 129h2v2h-2zM165 140h2v2h-2zM165 151h2v2h-2zM165 162h2v2h-2zM165 173h2v2h-2zM165 195h2v2h-2zM165 206h2v2h-2zM165 218h2v2h-2zM165 229h2v2h-2zM165 240h2v2h-2zM165 262h2v2h-2zM165 273h2v2h-2zM165 284h2v2h-2zM165 295h2v2h-2zM165 306h2v2h-2zM165 329h2v2h-2zM165 340h2v2h-2zM165 351h2v2h-2zM165 362h2v2h-2zM165 373h2v2h-2zM165 395h2v2h-2zM165 406h2v2h-2zM165 418h2v2h-2zM165 429h2v2h-2zM165 440h2v2h-2zM165 462h2v2h-2zM165 473h2v2h-2zM165 484h2v2h-2zM165 495h2v2h-2zM165 506h2v2h-2zM165 529h2v2h-2zM165 540h2v2h-2zM165 551h2v2h-2zM165 562h2v2h-2zM165 573h2v2h-2zM165 595h2v2h-2zM165 606h2v2h-2zM165 618h2v2h-2zM165 629h2v2h-2zM165 640h2v2h-2zM165 662h2v2h-2zM165 673h2v2h-2zM165 684h2v2h-2zM165 695h2v2h-2zM165 706h2v2h-2zM176 6h2v2h-2zM176 18h2v2h-2zM176 29h2v2h-2zM176 40h2v2h-2zM176 62h2v2h-2zM176 73h2v2h-2zM176 84h2v2h-2zM176 95h2v2h-2zM176 106h2v2h-2zM176 129h2v2h-2zM176 140h2v2h-2zM176 151h2v2h-2zM176 162h2v2h-2zM176 173h2v2h-2zM176 195h2v2h-2zM176 206h2v2h-2zM176 218h2v2h-2zM176 229h2v2h-2zM176 240h2v2h-2zM176 262h2v2h-2zM176 273h2v2h-2zM176 284h2v2h-2zM176 295h2v2h-2zM176 306h2v2h-2zM176 329h2v2h-2zM176 340h2v2h-2zM176 351h2v2h-2zM176 362h2v2h-2zM176 373h2v2h-2zM176 395h2v2h-2zM176 406h2v2h-2zM176 418h2v2h-2zM176 429h2v2h-2zM176 440h2v2h-2zM176 462h2v2h-2zM176 473h2v2h-2zM176 484h2v2h-2zM176 495h2v2h-2zM176 506h2v2h-2zM176 529h2v2h-2zM176 540h2v2h-2zM176 551h2v2h-2zM176 562h2v2h-2zM176 573h2v2h-2zM176 595h2v2h-2zM176 606h2v2h-2zM176 618h2v2h-2zM176 629h2v2h-2zM176 640h2v2h-2zM176 662h2v2h-2zM176 673h2v2h-2zM176 684h2v2h-2zM176 695h2v2h-2zM176 706h2v2h-2zM187 6h2v2h-2zM187 18h2v2h-2zM187 29h2v2h-2zM187 40h2v2h-2zM187 62h2v2h-2zM187 73h2v2h-2zM187 84h2v2h-2zM187 95h2v2h-2zM187 106h2v2h-2zM187 129h2v2h-2zM187 140h2v2h-2zM187 151h2v2h-2zM187 162h2v2h-2zM187 173h2v2h-2zM187 195h2v2h-2zM187 206h2v2h-2zM187 218h2v2h-2zM187 229h2v2h-2zM187 240h2v2h-2zM187 262h2v2h-2zM187 273h2v2h-2zM187 284h2v2h-2zM187 295h2v2h-2zM187 306h2v2h-2zM187 329h2v2h-2zM187 340h2v2h-2zM187 351h2v2h-2zM187 362h2v2h-2zM187 373h2v2h-2zM187 395h2v2h-2zM187 406h2v2h-2zM187 418h2v2h-2zM187 429h2v2h-2zM187 440h2v2h-2zM187 462h2v2h-2zM187 473h2v2h-2zM187 484h2v2h-2zM187 495h2v2h-2zM187 506h2v2h-2zM187 529h2v2h-2zM187 540h2v2h-2zM187 551h2v2h-2zM187 562h2v2h-2zM187 573h2v2h-2zM187 595h2v2h-2zM187 606h2v2h-2zM187 618h2v2h-2zM187 629h2v2h-2zM187 640h2v2h-2zM187 662h2v2h-2zM187 673h2v2h-2zM187 684h2v2h-2zM187 695h2v2h-2zM187 706h2v2h-2zM209 6h2v2h-2zM209 18h2v2h-2zM209 29h2v2h-2zM209 40h2v2h-2zM209 62h2v2h-2zM209 73h2v2h-2zM209 84h2v2h-2zM209 95h2v2h-2zM209 106h2v2h-2zM209 129h2v2h-2zM209 140h2v2h-2zM209 151h2v2h-2zM209 162h2v2h-2zM209 173h2v2h-2zM209 195h2v2h-2zM209 206h2v2h-2zM209 218h2v2h-2zM209 229h2v2h-2zM209 240h2v2h-2zM209 262h2v2h-2zM209 273h2v2h-2zM209 284h2v2h-2zM209 295h2v2h-2zM209 306h2v2h-2zM209 329h2v2h-2zM209 340h2v2h-2zM209 351h2v2h-2zM209 362h2v2h-2zM209 373h2v2h-2zM209 395h2v2h-2zM209 406h2v2h-2zM209 418h2v2h-2zM209 429h2v2h-2zM209 440h2v2h-2zM209 462h2v2h-2zM209 473h2v2h-2zM209 484h2v2h-2zM209 495h2v2h-2zM209 506h2v2h-2zM209 529h2v2h-2zM209 540h2v2h-2zM209 551h2v2h-2zM209 562h2v2h-2zM209 573h2v2h-2zM209 595h2v2h-2zM209 606h2v2h-2zM209 618h2v2h-2zM209 629h2v2h-2zM209 640h2v2h-2zM209 662h2v2h-2zM209 673h2v2h-2zM209 684h2v2h-2zM209 695h2v2h-2zM209 706h2v2h-2zM220 6h2v2h-2zM220 18h2v2h-2zM220 29h2v2h-2zM220 40h2v2h-2zM220 62h2v2h-2zM220 73h2v2h-2zM220 84h2v2h-2zM220 95h2v2h-2zM220 106h2v2h-2zM220 129h2v2h-2zM220 140h2v2h-2zM220 151h2v2h-2zM220 162h2v2h-2zM220 173h2v2h-2zM220 195h2v2h-2zM220 206h2v2h-2zM220 218h2v2h-2zM220 229h2v2h-2zM220 240h2v2h-2zM220 262h2v2h-2zM220 273h2v2h-2zM220 284h2v2h-2zM220 295h2v2h-2zM220 306h2v2h-2zM220 329h2v2h-2zM220 340h2v2h-2zM220 351h2v2h-2zM220 362h2v2h-2zM220 373h2v2h-2zM220 395h2v2h-2zM220 406h2v2h-2zM220 418h2v2h-2zM220 429h2v2h-2zM220 440h2v2h-2zM220 462h2v2h-2zM220 473h2v2h-2zM220 484h2v2h-2zM220 495h2v2h-2zM220 506h2v2h-2zM220 529h2v2h-2zM220 540h2v2h-2zM220 551h2v2h-2zM220 562h2v2h-2zM220 573h2v2h-2zM220 595h2v2h-2zM220 606h2v2h-2zM220 618h2v2h-2zM220 629h2v2h-2zM220 640h2v2h-2zM220 662h2v2h-2zM220 673h2v2h-2zM220 684h2v2h-2zM220 695h2v2h-2zM220 706h2v2h-2zM231 6h2v2h-2zM231 18h2v2h-2zM231 29h2v2h-2zM231 40h2v2h-2zM231 62h2v2h-2zM231 73h2v2h-2zM231 84h2v2h-2zM231 95h2v2h-2zM231 106h2v2h-2zM231 129h2v2h-2zM231 140h2v2h-2zM231 151h2v2h-2zM231 162h2v2h-2zM231 173h2v2h-2zM231 195h2v2h-2zM231 206h2v2h-2zM231 218h2v2h-2zM231 229h2v2h-2zM231 240h2v2h-2zM231 262h2v2h-2zM231 273h2v2h-2zM231 284h2v2h-2zM231 295h2v2h-2zM231 306h2v2h-2zM231 329h2v2h-2zM231 340h2v2h-2zM231 351h2v2h-2zM231 362h2v2h-2zM231 373h2v2h-2zM231 395h2v2h-2zM231 406h2v2h-2zM231 418h2v2h-2zM231 429h2v2h-2zM231 440h2v2h-2zM231 462h2v2h-2zM231 473h2v2h-2zM231 484h2v2h-2zM231 495h2v2h-2zM231 506h2v2h-2zM231 529h2v2h-2zM231 540h2v2h-2zM231 551h2v2h-2zM231 562h2v2h-2zM231 573h2v2h-2zM231 595h2v2h-2zM231 606h2v2h-2zM231 618h2v2h-2zM231 629h2v2h-2zM231 640h2v2h-2zM231 662h2v2h-2zM231 673h2v2h-2zM231 684h2v2h-2zM231 695h2v2h-2zM231 706h2v2h-2zM242 6h2v2h-2zM242 18h2v2h-2zM242 29h2v2h-2zM242 40h2v2h-2zM242 62h2v2h-2zM242 73h2v2h-2zM242 84h2v2h-2zM242 95h2v2h-2zM242 106h2v2h-2zM242 129h2v2h-2zM242 140h2v2h-2zM242 151h2v2h-2zM242 162h2v2h-2zM242 173h2v2h-2zM242 195h2v2h-2zM242 206h2v2h-2zM242 218h2v2h-2zM242 229h2v2h-2zM242 240h2v2h-2zM242 262h2v2h-2zM242 273h2v2h-2zM242 284h2v2h-2zM242 295h2v2h-2zM242 306h2v2h-2zM242 329h2v2h-2zM242 340h2v2h-2zM242 351h2v2h-2zM242 362h2v2h-2zM242 373h2v2h-2zM242 395h2v2h-2zM242 406h2v2h-2zM242 418h2v2h-2zM242 429h2v2h-2zM242 440h2v2h-2zM242 462h2v2h-2zM242 473h2v2h-2zM242 484h2v2h-2zM242 495h2v2h-2zM242 506h2v2h-2zM242 529h2v2h-2zM242 540h2v2h-2zM242 551h2v2h-2zM242 562h2v2h-2zM242 573h2v2h-2zM242 595h2v2h-2zM242 606h2v2h-2zM242 618h2v2h-2zM242 629h2v2h-2zM242 640h2v2h-2zM242 662h2v2h-2zM242 673h2v2h-2zM242 684h2v2h-2zM242 695h2v2h-2zM242 706h2v2h-2zM253 6h2v2h-2zM253 18h2v2h-2zM253 29h2v2h-2zM253 40h2v2h-2zM253 62h2v2h-2zM253 73h2v2h-2zM253 84h2v2h-2zM253 95h2v2h-2zM253 106h2v2h-2zM253 129h2v2h-2zM253 140h2v2h-2zM253 151h2v2h-2zM253 162h2v2h-2zM253 173h2v2h-2zM253 195h2v2h-2zM253 206h2v2h-2zM253 218h2v2h-2zM253 229h2v2h-2zM253 240h2v2h-2zM253 262h2v2h-2zM253 273h2v2h-2zM253 284h2v2h-2zM253 295h2v2h-2zM253 306h2v2h-2zM253 329h2v2h-2zM253 340h2v2h-2zM253 351h2v2h-2zM253 362h2v2h-2zM253 373h2v2h-2zM253 395h2v2h-2zM253 406h2v2h-2zM253 418h2v2h-2zM253 429h2v2h-2zM253 440h2v2h-2zM253 462h2v2h-2zM253 473h2v2h-2zM253 484h2v2h-2zM253 495h2v2h-2zM253 506h2v2h-2zM253 529h2v2h-2zM253 540h2v2h-2zM253 551h2v2h-2zM253 562h2v2h-2zM253 573h2v2h-2zM253 595h2v2h-2zM253 606h2v2h-2zM253 618h2v2h-2zM253 629h2v2h-2zM253 640h2v2h-2zM253 662h2v2h-2zM253 673h2v2h-2zM253 684h2v2h-2zM253 695h2v2h-2zM253 706h2v2h-2zM276 6h2v2h-2zM276 18h2v2h-2zM276 29h2v2h-2zM276 40h2v2h-2zM276 62h2v2h-2zM276 73h2v2h-2zM276 84h2v2h-2zM276 95h2v2h-2zM276 106h2v2h-2zM276 129h2v2h-2zM276 140h2v2h-2zM276 151h2v2h-2zM276 162h2v2h-2zM276 173h2v2h-2zM276 195h2v2h-2zM276 206h2v2h-2zM276 218h2v2h-2zM276 229h2v2h-2zM276 240h2v2h-2zM276 262h2v2h-2zM276 273h2v2h-2zM276 284h2v2h-2zM276 295h2v2h-2zM276 306h2v2h-2zM276 329h2v2h-2zM276 340h2v2h-2zM276 351h2v2h-2zM276 362h2v2h-2zM276 373h2v2h-2zM276 395h2v2h-2zM276 406h2v2h-2zM276 418h2v2h-2zM276 429h2v2h-2zM276 440h2v2h-2zM276 462h2v2h-2zM276 473h2v2h-2zM276 484h2v2h-2zM276 495h2v2h-2zM276 506h2v2h-2zM276 529h2v2h-2zM276 540h2v2h-2zM276 551h2v2h-2zM276 562h2v2h-2zM276 573h2v2h-2zM276 595h2v2h-2zM276 606h2v2h-2zM276 618h2v2h-2zM276 629h2v2h-2zM276 640h2v2h-2zM276 662h2v2h-2zM276 673h2v2h-2zM276 684h2v2h-2zM276 695h2v2h-2zM276 706h2v2h-2zM287 6h2v2h-2zM287 18h2v2h-2zM287 29h2v2h-2zM287 40h2v2h-2zM287 62h2v2h-2zM287 73h2v2h-2zM287 84h2v2h-2zM287 95h2v2h-2zM287 106h2v2h-2zM287 129h2v2h-2zM287 140h2v2h-2zM287 151h2v2h-2zM287 162h2v2h-2zM287 173h2v2h-2zM287 195h2v2h-2zM287 206h2v2h-2zM287 218h2v2h-2zM287 229h2v2h-2zM287 240h2v2h-2zM287 262h2v2h-2zM287 273h2v2h-2zM287 284h2v2h-2zM287 295h2v2h-2zM287 306h2v2h-2zM287 329h2v2h-2zM287 340h2v2h-2zM287 351h2v2h-2zM287 362h2v2h-2zM287 373h2v2h-2zM287 395h2v2h-2zM287 406h2v2h-2zM287 418h2v2h-2zM287 429h2v2h-2zM287 440h2v2h-2zM287 462h2v2h-2zM287 473h2v2h-2zM287 484h2v2h-2zM287 495h2v2h-2zM287 506h2v2h-2zM287 529h2v2h-2zM287 540h2v2h-2zM287 551h2v2h-2zM287 562h2v2h-2zM287 573h2v2h-2zM287 595h2v2h-2zM287 606h2v2h-2zM287 618h2v2h-2zM287 629h2v2h-2zM287 640h2v2h-2zM287 662h2v2h-2zM287 673h2v2h-2zM287 684h2v2h-2zM287 695h2v2h-2zM287 706h2v2h-2zM298 6h2v2h-2zM298 18h2v2h-2zM298 29h2v2h-2zM298 40h2v2h-2zM298 62h2v2h-2zM298 73h2v2h-2zM298 84h2v2h-2zM298 95h2v2h-2zM298 106h2v2h-2zM298 129h2v2h-2zM298 140h2v2h-2zM298 151h2v2h-2zM298 162h2v2h-2zM298 173h2v2h-2zM298 195h2v2h-2zM298 206h2v2h-2zM298 218h2v2h-2zM298 229h2v2h-2zM298 240h2v2h-2zM298 262h2v2h-2zM298 273h2v2h-2zM298 284h2v2h-2zM298 295h2v2h-2zM298 306h2v2h-2zM298 329h2v2h-2zM298 340h2v2h-2zM298 351h2v2h-2zM298 362h2v2h-2zM298 373h2v2h-2zM298 395h2v2h-2zM298 406h2v2h-2zM298 418h2v2h-2zM298 429h2v2h-2zM298 440h2v2h-2zM298 462h2v2h-2zM298 473h2v2h-2zM298 484h2v2h-2zM298 495h2v2h-2zM298 506h2v2h-2zM298 529h2v2h-2zM298 540h2v2h-2zM298 551h2v2h-2zM298 562h2v2h-2zM298 573h2v2h-2zM298 595h2v2h-2zM298 606h2v2h-2zM298 618h2v2h-2zM298 629h2v2h-2zM298 640h2v2h-2zM298 662h2v2h-2zM298 673h2v2h-2zM298 684h2v2h-2zM298 695h2v2h-2zM298 706h2v2h-2zM309 6h2v2h-2zM309 18h2v2h-2zM309 29h2v2h-2zM309 40h2v2h-2zM309 62h2v2h-2zM309 73h2v2h-2zM309 84h2v2h-2zM309 95h2v2h-2zM309 106h2v2h-2zM309 129h2v2h-2zM309 140h2v2h-2zM309 151h2v2h-2zM309 162h2v2h-2zM309 173h2v2h-2zM309 195h2v2h-2zM309 206h2v2h-2zM309 218h2v2h-2zM309 229h2v2h-2zM309 240h2v2h-2zM309 262h2v2h-2zM309 273h2v2h-2zM309 284h2v2h-2zM309 295h2v2h-2zM309 306h2v2h-2zM309 329h2v2h-2zM309 340h2v2h-2zM309 351h2v2h-2zM309 362h2v2h-2zM309 373h2v2h-2zM309 395h2v2h-2zM309 406h2v2h-2zM309 418h2v2h-2zM309 429h2v2h-2zM309 440h2v2h-2zM309 462h2v2h-2zM309 473h2v2h-2zM309 484h2v2h-2zM309 495h2v2h-2zM309 506h2v2h-2zM309 529h2v2h-2zM309 540h2v2h-2zM309 551h2v2h-2zM309 562h2v2h-2zM309 573h2v2h-2zM309 595h2v2h-2zM309 606h2v2h-2zM309 618h2v2h-2zM309 629h2v2h-2zM309 640h2v2h-2zM309 662h2v2h-2zM309 673h2v2h-2zM309 684h2v2h-2zM309 695h2v2h-2zM309 706h2v2h-2zM320 6h2v2h-2zM320 18h2v2h-2zM320 29h2v2h-2zM320 40h2v2h-2zM320 62h2v2h-2zM320 73h2v2h-2zM320 84h2v2h-2zM320 95h2v2h-2zM320 106h2v2h-2zM320 129h2v2h-2zM320 140h2v2h-2zM320 151h2v2h-2zM320 162h2v2h-2zM320 173h2v2h-2zM320 195h2v2h-2zM320 206h2v2h-2zM320 218h2v2h-2zM320 229h2v2h-2zM320 240h2v2h-2zM320 262h2v2h-2zM320 273h2v2h-2zM320 284h2v2h-2zM320 295h2v2h-2zM320 306h2v2h-2zM320 329h2v2h-2zM320 340h2v2h-2zM320 351h2v2h-2zM320 362h2v2h-2zM320 373h2v2h-2zM320 395h2v2h-2zM320 406h2v2h-2zM320 418h2v2h-2zM320 429h2v2h-2zM320 440h2v2h-2zM320 462h2v2h-2zM320 473h2v2h-2zM320 484h2v2h-2zM320 495h2v2h-2zM320 506h2v2h-2zM320 529h2v2h-2zM320 540h2v2h-2zM320 551h2v2h-2zM320 562h2v2h-2zM320 573h2v2h-2zM320 595h2v2h-2zM320 606h2v2h-2zM320 618h2v2h-2zM320 629h2v2h-2zM320 640h2v2h-2zM320 662h2v2h-2zM320 673h2v2h-2zM320 684h2v2h-2zM320 695h2v2h-2zM320 706h2v2h-2zM342 6h2v2h-2zM342 18h2v2h-2zM342 29h2v2h-2zM342 40h2v2h-2zM342 62h2v2h-2zM342 73h2v2h-2zM342 84h2v2h-2zM342 95h2v2h-2zM342 106h2v2h-2zM342 129h2v2h-2zM342 140h2v2h-2zM342 151h2v2h-2zM342 162h2v2h-2zM342 173h2v2h-2zM342 195h2v2h-2zM342 206h2v2h-2zM342 218h2v2h-2zM342 229h2v2h-2zM342 240h2v2h-2zM342 262h2v2h-2zM342 273h2v2h-2zM342 284h2v2h-2zM342 295h2v2h-2zM342 306h2v2h-2zM342 329h2v2h-2zM342 340h2v2h-2zM342 351h2v2h-2zM342 362h2v2h-2zM342 373h2v2h-2zM342 395h2v2h-2zM342 406h2v2h-2zM342 418h2v2h-2zM342 429h2v2h-2zM342 440h2v2h-2zM342 462h2v2h-2zM342 473h2v2h-2zM342 484h2v2h-2zM342 495h2v2h-2zM342 506h2v2h-2zM342 529h2v2h-2zM342 540h2v2h-2zM342 551h2v2h-2zM342 562h2v2h-2zM342 573h2v2h-2zM342 595h2v2h-2zM342 606h2v2h-2zM342 618h2v2h-2zM342 629h2v2h-2zM342 640h2v2h-2zM342 662h2v2h-2zM342 673h2v2h-2zM342 684h2v2h-2zM342 695h2v2h-2zM342 706h2v2h-2zM353 6h2v2h-2zM353 18h2v2h-2zM353 29h2v2h-2zM353 40h2v2h-2zM353 62h2v2h-2zM353 73h2v2h-2zM353 84h2v2h-2zM353 95h2v2h-2zM353 106h2v2h-2zM353 129h2v2h-2zM353 140h2v2h-2zM353 151h2v2h-2zM353 162h2v2h-2zM353 173h2v2h-2zM353 195h2v2h-2zM353 206h2v2h-2zM353 218h2v2h-2zM353 229h2v2h-2zM353 240h2v2h-2zM353 262h2v2h-2zM353 273h2v2h-2zM353 284h2v2h-2zM353 295h2v2h-2zM353 306h2v2h-2zM353 329h2v2h-2zM353 340h2v2h-2zM353 351h2v2h-2zM353 362h2v2h-2zM353 373h2v2h-2zM353 395h2v2h-2zM353 406h2v2h-2zM353 418h2v2h-2zM353 429h2v2h-2zM353 440h2v2h-2zM353 462h2v2h-2zM353 473h2v2h-2zM353 484h2v2h-2zM353 495h2v2h-2zM353 506h2v2h-2zM353 529h2v2h-2zM353 540h2v2h-2zM353 551h2v2h-2zM353 562h2v2h-2zM353 573h2v2h-2zM353 595h2v2h-2zM353 606h2v2h-2zM353 618h2v2h-2zM353 629h2v2h-2zM353 640h2v2h-2zM353 662h2v2h-2zM353 673h2v2h-2zM353 684h2v2h-2zM353 695h2v2h-2zM353 706h2v2h-2zM365 6h2v2h-2zM365 18h2v2h-2zM365 29h2v2h-2zM365 40h2v2h-2zM365 62h2v2h-2zM365 73h2v2h-2zM365 84h2v2h-2zM365 95h2v2h-2zM365 106h2v2h-2zM365 129h2v2h-2zM365 140h2v2h-2zM365 151h2v2h-2zM365 162h2v2h-2zM365 173h2v2h-2zM365 195h2v2h-2zM365 206h2v2h-2zM365 218h2v2h-2zM365 229h2v2h-2zM365 240h2v2h-2zM365 262h2v2h-2zM365 273h2v2h-2zM365 284h2v2h-2zM365 295h2v2h-2zM365 306h2v2h-2zM365 329h2v2h-2zM365 340h2v2h-2zM365 351h2v2h-2zM365 362h2v2h-2zM365 373h2v2h-2zM365 395h2v2h-2zM365 406h2v2h-2zM365 418h2v2h-2zM365 429h2v2h-2zM365 440h2v2h-2zM365 462h2v2h-2zM365 473h2v2h-2zM365 484h2v2h-2zM365 495h2v2h-2zM365 506h2v2h-2zM365 529h2v2h-2zM365 540h2v2h-2zM365 551h2v2h-2zM365 562h2v2h-2zM365 573h2v2h-2zM365 595h2v2h-2zM365 606h2v2h-2zM365 618h2v2h-2zM365 629h2v2h-2zM365 640h2v2h-2zM365 662h2v2h-2zM365 673h2v2h-2zM365 684h2v2h-2zM365 695h2v2h-2zM365 706h2v2h-2zM376 6h2v2h-2zM376 18h2v2h-2zM376 29h2v2h-2zM376 40h2v2h-2zM376 62h2v2h-2zM376 73h2v2h-2zM376 84h2v2h-2zM376 95h2v2h-2zM376 106h2v2h-2zM376 129h2v2h-2zM376 140h2v2h-2zM376 151h2v2h-2zM376 162h2v2h-2zM376 173h2v2h-2zM376 195h2v2h-2zM376 206h2v2h-2zM376 218h2v2h-2zM376 229h2v2h-2zM376 240h2v2h-2zM376 262h2v2h-2zM376 273h2v2h-2zM376 284h2v2h-2zM376 295h2v2h-2zM376 306h2v2h-2zM376 329h2v2h-2zM376 340h2v2h-2zM376 351h2v2h-2zM376 362h2v2h-2zM376 373h2v2h-2zM376 395h2v2h-2zM376 406h2v2h-2zM376 418h2v2h-2zM376 429h2v2h-2zM376 440h2v2h-2zM376 462h2v2h-2zM376 473h2v2h-2zM376 484h2v2h-2zM376 495h2v2h-2zM376 506h2v2h-2zM376 529h2v2h-2zM376 540h2v2h-2zM376 551h2v2h-2zM376 562h2v2h-2zM376 573h2v2h-2zM376 595h2v2h-2zM376 606h2v2h-2zM376 618h2v2h-2zM376 629h2v2h-2zM376 640h2v2h-2zM376 662h2v2h-2zM376 673h2v2h-2zM376 684h2v2h-2zM376 695h2v2h-2zM376 706h2v2h-2zM387 6h2v2h-2zM387 18h2v2h-2zM387 29h2v2h-2zM387 40h2v2h-2zM387 62h2v2h-2zM387 73h2v2h-2zM387 84h2v2h-2zM387 95h2v2h-2zM387 106h2v2h-2zM387 129h2v2h-2zM387 140h2v2h-2zM387 151h2v2h-2zM387 162h2v2h-2zM387 173h2v2h-2zM387 195h2v2h-2zM387 206h2v2h-2zM387 218h2v2h-2zM387 229h2v2h-2zM387 240h2v2h-2zM387 262h2v2h-2zM387 273h2v2h-2zM387 284h2v2h-2zM387 295h2v2h-2zM387 306h2v2h-2zM387 329h2v2h-2zM387 340h2v2h-2zM387 351h2v2h-2zM387 362h2v2h-2zM387 373h2v2h-2zM387 395h2v2h-2zM387 406h2v2h-2zM387 418h2v2h-2zM387 429h2v2h-2zM387 440h2v2h-2zM387 462h2v2h-2zM387 473h2v2h-2zM387 484h2v2h-2zM387 495h2v2h-2zM387 506h2v2h-2zM387 529h2v2h-2zM387 540h2v2h-2zM387 551h2v2h-2zM387 562h2v2h-2zM387 573h2v2h-2zM387 595h2v2h-2zM387 606h2v2h-2zM387 618h2v2h-2zM387 629h2v2h-2zM387 640h2v2h-2zM387 662h2v2h-2zM387 673h2v2h-2zM387 684h2v2h-2zM387 695h2v2h-2zM387 706h2v2h-2zM409 6h2v2h-2zM409 18h2v2h-2zM409 29h2v2h-2zM409 40h2v2h-2zM409 62h2v2h-2zM409 73h2v2h-2zM409 84h2v2h-2zM409 95h2v2h-2zM409 106h2v2h-2zM409 129h2v2h-2zM409 140h2v2h-2zM409 151h2v2h-2zM409 162h2v2h-2zM409 173h2v2h-2zM409 195h2v2h-2zM409 206h2v2h-2zM409 218h2v2h-2zM409 229h2v2h-2zM409 240h2v2h-2zM409 262h2v2h-2zM409 273h2v2h-2zM409 284h2v2h-2zM409 295h2v2h-2zM409 306h2v2h-2zM409 329h2v2h-2zM409 340h2v2h-2zM409 351h2v2h-2zM409 362h2v2h-2zM409 373h2v2h-2zM409 395h2v2h-2zM409 406h2v2h-2zM409 418h2v2h-2zM409 429h2v2h-2zM409 440h2v2h-2zM409 462h2v2h-2zM409 473h2v2h-2zM409 484h2v2h-2zM409 495h2v2h-2zM409 506h2v2h-2zM409 529h2v2h-2zM409 540h2v2h-2zM409 551h2v2h-2zM409 562h2v2h-2zM409 573h2v2h-2zM409 595h2v2h-2zM409 606h2v2h-2zM409 618h2v2h-2zM409 629h2v2h-2zM409 640h2v2h-2zM409 662h2v2h-2zM409 673h2v2h-2zM409 684h2v2h-2zM409 695h2v2h-2zM409 706h2v2h-2zM420 6h2v2h-2zM420 18h2v2h-2zM420 29h2v2h-2zM420 40h2v2h-2zM420 62h2v2h-2zM420 73h2v2h-2zM420 84h2v2h-2zM420 95h2v2h-2zM420 106h2v2h-2zM420 129h2v2h-2zM420 140h2v2h-2zM420 151h2v2h-2zM420 162h2v2h-2zM420 173h2v2h-2zM420 195h2v2h-2zM420 206h2v2h-2zM420 218h2v2h-2zM420 229h2v2h-2zM420 240h2v2h-2zM420 262h2v2h-2zM420 273h2v2h-2zM420 284h2v2h-2zM420 295h2v2h-2zM420 306h2v2h-2zM420 329h2v2h-2zM420 340h2v2h-2zM420 351h2v2h-2zM420 362h2v2h-2zM420 373h2v2h-2zM420 395h2v2h-2zM420 406h2v2h-2zM420 418h2v2h-2zM420 429h2v2h-2zM420 440h2v2h-2zM420 462h2v2h-2zM420 473h2v2h-2zM420 484h2v2h-2zM420 495h2v2h-2zM420 506h2v2h-2zM420 529h2v2h-2zM420 540h2v2h-2zM420 551h2v2h-2zM420 562h2v2h-2zM420 573h2v2h-2zM420 595h2v2h-2zM420 606h2v2h-2zM420 618h2v2h-2zM420 629h2v2h-2zM420 640h2v2h-2zM420 662h2v2h-2zM420 673h2v2h-2zM420 684h2v2h-2zM420 695h2v2h-2zM420 706h2v2h-2zM431 6h2v2h-2zM431 18h2v2h-2zM431 29h2v2h-2zM431 40h2v2h-2zM431 62h2v2h-2zM431 73h2v2h-2zM431 84h2v2h-2zM431 95h2v2h-2zM431 106h2v2h-2zM431 129h2v2h-2zM431 140h2v2h-2zM431 151h2v2h-2zM431 162h2v2h-2zM431 173h2v2h-2zM431 195h2v2h-2zM431 206h2v2h-2zM431 218h2v2h-2zM431 229h2v2h-2zM431 240h2v2h-2zM431 262h2v2h-2zM431 273h2v2h-2zM431 284h2v2h-2zM431 295h2v2h-2zM431 306h2v2h-2zM431 329h2v2h-2zM431 340h2v2h-2zM431 351h2v2h-2zM431 362h2v2h-2zM431 373h2v2h-2zM431 395h2v2h-2zM431 406h2v2h-2zM431 418h2v2h-2zM431 429h2v2h-2zM431 440h2v2h-2zM431 462h2v2h-2zM431 473h2v2h-2zM431 484h2v2h-2zM431 495h2v2h-2zM431 506h2v2h-2zM431 529h2v2h-2zM431 540h2v2h-2zM431 551h2v2h-2zM431 562h2v2h-2zM431 573h2v2h-2zM431 595h2v2h-2zM431 606h2v2h-2zM431 618h2v2h-2zM431 629h2v2h-2zM431 640h2v2h-2zM431 662h2v2h-2zM431 673h2v2h-2zM431 684h2v2h-2zM431 695h2v2h-2zM431 706h2v2h-2zM442 6h2v2h-2zM442 18h2v2h-2zM442 29h2v2h-2zM442 40h2v2h-2zM442 62h2v2h-2zM442 73h2v2h-2zM442 84h2v2h-2zM442 95h2v2h-2zM442 106h2v2h-2zM442 129h2v2h-2zM442 140h2v2h-2zM442 151h2v2h-2zM442 162h2v2h-2zM442 173h2v2h-2zM442 195h2v2h-2zM442 206h2v2h-2zM442 218h2v2h-2zM442 229h2v2h-2zM442 240h2v2h-2zM442 262h2v2h-2zM442 273h2v2h-2zM442 284h2v2h-2zM442 295h2v2h-2zM442 306h2v2h-2zM442 329h2v2h-2zM442 340h2v2h-2zM442 351h2v2h-2zM442 362h2v2h-2zM442 373h2v2h-2zM442 395h2v2h-2zM442 406h2v2h-2zM442 418h2v2h-2zM442 429h2v2h-2zM442 440h2v2h-2zM442 462h2v2h-2zM442 473h2v2h-2zM442 484h2v2h-2zM442 495h2v2h-2zM442 506h2v2h-2zM442 529h2v2h-2zM442 540h2v2h-2zM442 551h2v2h-2zM442 562h2v2h-2zM442 573h2v2h-2zM442 595h2v2h-2zM442 606h2v2h-2zM442 618h2v2h-2zM442 629h2v2h-2zM442 640h2v2h-2zM442 662h2v2h-2zM442 673h2v2h-2zM442 684h2v2h-2zM442 695h2v2h-2zM442 706h2v2h-2zM453 6h2v2h-2zM453 18h2v2h-2zM453 29h2v2h-2zM453 40h2v2h-2zM453 62h2v2h-2zM453 73h2v2h-2zM453 84h2v2h-2zM453 95h2v2h-2zM453 106h2v2h-2zM453 129h2v2h-2zM453 140h2v2h-2zM453 151h2v2h-2zM453 162h2v2h-2zM453 173h2v2h-2zM453 195h2v2h-2zM453 206h2v2h-2zM453 218h2v2h-2zM453 229h2v2h-2zM453 240h2v2h-2zM453 262h2v2h-2zM453 273h2v2h-2zM453 284h2v2h-2zM453 295h2v2h-2zM453 306h2v2h-2zM453 329h2v2h-2zM453 340h2v2h-2zM453 351h2v2h-2zM453 362h2v2h-2zM453 373h2v2h-2zM453 395h2v2h-2zM453 406h2v2h-2zM453 418h2v2h-2zM453 429h2v2h-2zM453 440h2v2h-2zM453 462h2v2h-2zM453 473h2v2h-2zM453 484h2v2h-2zM453 495h2v2h-2zM453 506h2v2h-2zM453 529h2v2h-2zM453 540h2v2h-2zM453 551h2v2h-2zM453 562h2v2h-2zM453 573h2v2h-2zM453 595h2v2h-2zM453 606h2v2h-2zM453 618h2v2h-2zM453 629h2v2h-2zM453 640h2v2h-2zM453 662h2v2h-2zM453 673h2v2h-2zM453 684h2v2h-2zM453 695h2v2h-2zM453 706h2v2h-2zM476 6h2v2h-2zM476 18h2v2h-2zM476 29h2v2h-2zM476 40h2v2h-2zM476 62h2v2h-2zM476 73h2v2h-2zM476 84h2v2h-2zM476 95h2v2h-2zM476 106h2v2h-2zM476 129h2v2h-2zM476 140h2v2h-2zM476 151h2v2h-2zM476 162h2v2h-2zM476 173h2v2h-2zM476 195h2v2h-2zM476 206h2v2h-2zM476 218h2v2h-2zM476 229h2v2h-2zM476 240h2v2h-2zM476 262h2v2h-2zM476 273h2v2h-2zM476 284h2v2h-2zM476 295h2v2h-2zM476 306h2v2h-2zM476 329h2v2h-2zM476 340h2v2h-2zM476 351h2v2h-2zM476 362h2v2h-2zM476 373h2v2h-2zM476 395h2v2h-2zM476 406h2v2h-2zM476 418h2v2h-2zM476 429h2v2h-2zM476 440h2v2h-2zM476 462h2v2h-2zM476 473h2v2h-2zM476 484h2v2h-2zM476 495h2v2h-2zM476 506h2v2h-2zM476 529h2v2h-2zM476 540h2v2h-2zM476 551h2v2h-2zM476 562h2v2h-2zM476 573h2v2h-2zM476 595h2v2h-2zM476 606h2v2h-2zM476 618h2v2h-2zM476 629h2v2h-2zM476 640h2v2h-2zM476 662h2v2h-2zM476 673h2v2h-2zM476 684h2v2h-2zM476 695h2v2h-2zM476 706h2v2h-2zM487 6h2v2h-2zM487 18h2v2h-2zM487 29h2v2h-2zM487 40h2v2h-2zM487 62h2v2h-2zM487 73h2v2h-2zM487 84h2v2h-2zM487 95h2v2h-2zM487 106h2v2h-2zM487 129h2v2h-2zM487 140h2v2h-2zM487 151h2v2h-2zM487 162h2v2h-2zM487 173h2v2h-2zM487 195h2v2h-2zM487 206h2v2h-2zM487 218h2v2h-2zM487 229h2v2h-2zM487 240h2v2h-2zM487 262h2v2h-2zM487 273h2v2h-2zM487 284h2v2h-2zM487 295h2v2h-2zM487 306h2v2h-2zM487 329h2v2h-2zM487 340h2v2h-2zM487 351h2v2h-2zM487 362h2v2h-2zM487 373h2v2h-2zM487 395h2v2h-2zM487 406h2v2h-2zM487 418h2v2h-2zM487 429h2v2h-2zM487 440h2v2h-2zM487 462h2v2h-2zM487 473h2v2h-2zM487 484h2v2h-2zM487 495h2v2h-2zM487 506h2v2h-2zM487 529h2v2h-2zM487 540h2v2h-2zM487 551h2v2h-2zM487 562h2v2h-2zM487 573h2v2h-2zM487 595h2v2h-2zM487 606h2v2h-2zM487 618h2v2h-2zM487 629h2v2h-2zM487 640h2v2h-2zM487 662h2v2h-2zM487 673h2v2h-2zM487 684h2v2h-2zM487 695h2v2h-2zM487 706h2v2h-2zM498 6h2v2h-2zM498 18h2v2h-2zM498 29h2v2h-2zM498 40h2v2h-2zM498 62h2v2h-2zM498 73h2v2h-2zM498 84h2v2h-2zM498 95h2v2h-2zM498 106h2v2h-2zM498 129h2v2h-2zM498 140h2v2h-2zM498 151h2v2h-2zM498 162h2v2h-2zM498 173h2v2h-2zM498 195h2v2h-2zM498 206h2v2h-2zM498 218h2v2h-2zM498 229h2v2h-2zM498 240h2v2h-2zM498 262h2v2h-2zM498 273h2v2h-2zM498 284h2v2h-2zM498 295h2v2h-2zM498 306h2v2h-2zM498 329h2v2h-2zM498 340h2v2h-2zM498 351h2v2h-2zM498 362h2v2h-2zM498 373h2v2h-2zM498 395h2v2h-2zM498 406h2v2h-2zM498 418h2v2h-2zM498 429h2v2h-2zM498 440h2v2h-2zM498 462h2v2h-2zM498 473h2v2h-2zM498 484h2v2h-2zM498 495h2v2h-2zM498 506h2v2h-2zM498 529h2v2h-2zM498 540h2v2h-2zM498 551h2v2h-2zM498 562h2v2h-2zM498 573h2v2h-2zM498 595h2v2h-2zM498 606h2v2h-2zM498 618h2v2h-2zM498 629h2v2h-2zM498 640h2v2h-2zM498 662h2v2h-2zM498 673h2v2h-2zM498 684h2v2h-2zM498 695h2v2h-2zM498 706h2v2h-2zM509 6h2v2h-2zM509 18h2v2h-2zM509 29h2v2h-2zM509 40h2v2h-2zM509 62h2v2h-2zM509 73h2v2h-2zM509 84h2v2h-2zM509 95h2v2h-2zM509 106h2v2h-2zM509 129h2v2h-2zM509 140h2v2h-2zM509 151h2v2h-2zM509 162h2v2h-2zM509 173h2v2h-2zM509 195h2v2h-2zM509 206h2v2h-2zM509 218h2v2h-2zM509 229h2v2h-2zM509 240h2v2h-2zM509 262h2v2h-2zM509 273h2v2h-2zM509 284h2v2h-2zM509 295h2v2h-2zM509 306h2v2h-2zM509 329h2v2h-2zM509 340h2v2h-2zM509 351h2v2h-2zM509 362h2v2h-2zM509 373h2v2h-2zM509 395h2v2h-2zM509 406h2v2h-2zM509 418h2v2h-2zM509 429h2v2h-2zM509 440h2v2h-2zM509 462h2v2h-2zM509 473h2v2h-2zM509 484h2v2h-2zM509 495h2v2h-2zM509 506h2v2h-2zM509 529h2v2h-2zM509 540h2v2h-2zM509 551h2v2h-2zM509 562h2v2h-2zM509 573h2v2h-2zM509 595h2v2h-2zM509 606h2v2h-2zM509 618h2v2h-2zM509 629h2v2h-2zM509 640h2v2h-2zM509 662h2v2h-2zM509 673h2v2h-2zM509 684h2v2h-2zM509 695h2v2h-2zM509 706h2v2h-2zM520 6h2v2h-2zM520 18h2v2h-2zM520 29h2v2h-2zM520 40h2v2h-2zM520 62h2v2h-2zM520 73h2v2h-2zM520 84h2v2h-2zM520 95h2v2h-2zM520 106h2v2h-2zM520 129h2v2h-2zM520 140h2v2h-2zM520 151h2v2h-2zM520 162h2v2h-2zM520 173h2v2h-2zM520 195h2v2h-2zM520 206h2v2h-2zM520 218h2v2h-2zM520 229h2v2h-2zM520 240h2v2h-2zM520 262h2v2h-2zM520 273h2v2h-2zM520 284h2v2h-2zM520 295h2v2h-2zM520 306h2v2h-2zM520 329h2v2h-2zM520 340h2v2h-2zM520 351h2v2h-2zM520 362h2v2h-2zM520 373h2v2h-2zM520 395h2v2h-2zM520 406h2v2h-2zM520 418h2v2h-2zM520 429h2v2h-2zM520 440h2v2h-2zM520 462h2v2h-2zM520 473h2v2h-2zM520 484h2v2h-2zM520 495h2v2h-2zM520 506h2v2h-2zM520 529h2v2h-2zM520 540h2v2h-2zM520 551h2v2h-2zM520 562h2v2h-2zM520 573h2v2h-2zM520 595h2v2h-2zM520 606h2v2h-2zM520 618h2v2h-2zM520 629h2v2h-2zM520 640h2v2h-2zM520 662h2v2h-2zM520 673h2v2h-2zM520 684h2v2h-2zM520 695h2v2h-2zM520 706h2v2h-2zM542 6h2v2h-2zM542 18h2v2h-2zM542 29h2v2h-2zM542 40h2v2h-2zM542 62h2v2h-2zM542 73h2v2h-2zM542 84h2v2h-2zM542 95h2v2h-2zM542 106h2v2h-2zM542 129h2v2h-2zM542 140h2v2h-2zM542 151h2v2h-2zM542 162h2v2h-2zM542 173h2v2h-2zM542 195h2v2h-2zM542 206h2v2h-2zM542 218h2v2h-2zM542 229h2v2h-2zM542 240h2v2h-2zM542 262h2v2h-2zM542 273h2v2h-2zM542 284h2v2h-2zM542 295h2v2h-2zM542 306h2v2h-2zM542 329h2v2h-2zM542 340h2v2h-2zM542 351h2v2h-2zM542 362h2v2h-2zM542 373h2v2h-2zM542 395h2v2h-2zM542 406h2v2h-2zM542 418h2v2h-2zM542 429h2v2h-2zM542 440h2v2h-2zM542 462h2v2h-2zM542 473h2v2h-2zM542 484h2v2h-2zM542 495h2v2h-2zM542 506h2v2h-2zM542 529h2v2h-2zM542 540h2v2h-2zM542 551h2v2h-2zM542 562h2v2h-2zM542 573h2v2h-2zM542 595h2v2h-2zM542 606h2v2h-2zM542 618h2v2h-2zM542 629h2v2h-2zM542 640h2v2h-2zM542 662h2v2h-2zM542 673h2v2h-2zM542 684h2v2h-2zM542 695h2v2h-2zM542 706h2v2h-2zM553 6h2v2h-2zM553 18h2v2h-2zM553 29h2v2h-2zM553 40h2v2h-2zM553 62h2v2h-2zM553 73h2v2h-2zM553 84h2v2h-2zM553 95h2v2h-2zM553 106h2v2h-2zM553 129h2v2h-2zM553 140h2v2h-2zM553 151h2v2h-2zM553 162h2v2h-2zM553 173h2v2h-2zM553 195h2v2h-2zM553 206h2v2h-2zM553 218h2v2h-2zM553 229h2v2h-2zM553 240h2v2h-2zM553 262h2v2h-2zM553 273h2v2h-2zM553 284h2v2h-2zM553 295h2v2h-2zM553 306h2v2h-2zM553 329h2v2h-2zM553 340h2v2h-2zM553 351h2v2h-2zM553 362h2v2h-2zM553 373h2v2h-2zM553 395h2v2h-2zM553 406h2v2h-2zM553 418h2v2h-2zM553 429h2v2h-2zM553 440h2v2h-2zM553 462h2v2h-2zM553 473h2v2h-2zM553 484h2v2h-2zM553 495h2v2h-2zM553 506h2v2h-2zM553 529h2v2h-2zM553 540h2v2h-2zM553 551h2v2h-2zM553 562h2v2h-2zM553 573h2v2h-2zM553 595h2v2h-2zM553 606h2v2h-2zM553 618h2v2h-2zM553 629h2v2h-2zM553 640h2v2h-2zM553 662h2v2h-2zM553 673h2v2h-2zM553 684h2v2h-2zM553 695h2v2h-2zM553 706h2v2h-2zM565 6h2v2h-2zM565 18h2v2h-2zM565 29h2v2h-2zM565 40h2v2h-2zM565 62h2v2h-2zM565 73h2v2h-2zM565 84h2v2h-2zM565 95h2v2h-2zM565 106h2v2h-2zM565 129h2v2h-2zM565 140h2v2h-2zM565 151h2v2h-2zM565 162h2v2h-2zM565 173h2v2h-2zM565 195h2v2h-2zM565 206h2v2h-2zM565 218h2v2h-2zM565 229h2v2h-2zM565 240h2v2h-2zM565 262h2v2h-2zM565 273h2v2h-2zM565 284h2v2h-2zM565 295h2v2h-2zM565 306h2v2h-2zM565 329h2v2h-2zM565 340h2v2h-2zM565 351h2v2h-2zM565 362h2v2h-2zM565 373h2v2h-2zM565 395h2v2h-2zM565 406h2v2h-2zM565 418h2v2h-2zM565 429h2v2h-2zM565 440h2v2h-2zM565 462h2v2h-2zM565 473h2v2h-2zM565 484h2v2h-2zM565 495h2v2h-2zM565 506h2v2h-2zM565 529h2v2h-2zM565 540h2v2h-2zM565 551h2v2h-2zM565 562h2v2h-2zM565 573h2v2h-2zM565 595h2v2h-2zM565 606h2v2h-2zM565 618h2v2h-2zM565 629h2v2h-2zM565 640h2v2h-2zM565 662h2v2h-2zM565 673h2v2h-2zM565 684h2v2h-2zM565 695h2v2h-2zM565 706h2v2h-2zM576 6h2v2h-2zM576 18h2v2h-2zM576 29h2v2h-2zM576 40h2v2h-2zM576 62h2v2h-2zM576 73h2v2h-2zM576 84h2v2h-2zM576 95h2v2h-2zM576 106h2v2h-2zM576 129h2v2h-2zM576 140h2v2h-2zM576 151h2v2h-2zM576 162h2v2h-2zM576 173h2v2h-2zM576 195h2v2h-2zM576 206h2v2h-2zM576 218h2v2h-2zM576 229h2v2h-2zM576 240h2v2h-2zM576 262h2v2h-2zM576 273h2v2h-2zM576 284h2v2h-2zM576 295h2v2h-2zM576 306h2v2h-2zM576 329h2v2h-2zM576 340h2v2h-2zM576 351h2v2h-2zM576 362h2v2h-2zM576 373h2v2h-2zM576 395h2v2h-2zM576 406h2v2h-2zM576 418h2v2h-2zM576 429h2v2h-2zM576 440h2v2h-2zM576 462h2v2h-2zM576 473h2v2h-2zM576 484h2v2h-2zM576 495h2v2h-2zM576 506h2v2h-2zM576 529h2v2h-2zM576 540h2v2h-2zM576 551h2v2h-2zM576 562h2v2h-2zM576 573h2v2h-2zM576 595h2v2h-2zM576 606h2v2h-2zM576 618h2v2h-2zM576 629h2v2h-2zM576 640h2v2h-2zM576 662h2v2h-2zM576 673h2v2h-2zM576 684h2v2h-2zM576 695h2v2h-2zM576 706h2v2h-2zM587 6h2v2h-2zM587 18h2v2h-2zM587 29h2v2h-2zM587 40h2v2h-2zM587 62h2v2h-2zM587 73h2v2h-2zM587 84h2v2h-2zM587 95h2v2h-2zM587 106h2v2h-2zM587 129h2v2h-2zM587 140h2v2h-2zM587 151h2v2h-2zM587 162h2v2h-2zM587 173h2v2h-2zM587 195h2v2h-2zM587 206h2v2h-2zM587 218h2v2h-2zM587 229h2v2h-2zM587 240h2v2h-2zM587 262h2v2h-2zM587 273h2v2h-2zM587 284h2v2h-2zM587 295h2v2h-2zM587 306h2v2h-2zM587 329h2v2h-2zM587 340h2v2h-2zM587 351h2v2h-2zM587 362h2v2h-2zM587 373h2v2h-2zM587 395h2v2h-2zM587 406h2v2h-2zM587 418h2v2h-2zM587 429h2v2h-2zM587 440h2v2h-2zM587 462h2v2h-2zM587 473h2v2h-2zM587 484h2v2h-2zM587 495h2v2h-2zM587 506h2v2h-2zM587 529h2v2h-2zM587 540h2v2h-2zM587 551h2v2h-2zM587 562h2v2h-2zM587 573h2v2h-2zM587 595h2v2h-2zM587 606h2v2h-2zM587 618h2v2h-2zM587 629h2v2h-2zM587 640h2v2h-2zM587 662h2v2h-2zM587 673h2v2h-2zM587 684h2v2h-2zM587 695h2v2h-2zM587 706h2v2h-2zM609 6h2v2h-2zM609 18h2v2h-2zM609 29h2v2h-2zM609 40h2v2h-2zM609 62h2v2h-2zM609 73h2v2h-2zM609 84h2v2h-2zM609 95h2v2h-2zM609 106h2v2h-2zM609 129h2v2h-2zM609 140h2v2h-2zM609 151h2v2h-2zM609 162h2v2h-2zM609 173h2v2h-2zM609 195h2v2h-2zM609 206h2v2h-2zM609 218h2v2h-2zM609 229h2v2h-2zM609 240h2v2h-2zM609 262h2v2h-2zM609 273h2v2h-2zM609 284h2v2h-2zM609 295h2v2h-2zM609 306h2v2h-2zM609 329h2v2h-2zM609 340h2v2h-2zM609 351h2v2h-2zM609 362h2v2h-2zM609 373h2v2h-2zM609 395h2v2h-2zM609 406h2v2h-2zM609 418h2v2h-2zM609 429h2v2h-2zM609 440h2v2h-2zM609 462h2v2h-2zM609 473h2v2h-2zM609 484h2v2h-2zM609 495h2v2h-2zM609 506h2v2h-2zM609 529h2v2h-2zM609 540h2v2h-2zM609 551h2v2h-2zM609 562h2v2h-2zM609 573h2v2h-2zM609 595h2v2h-2zM609 606h2v2h-2zM609 618h2v2h-2zM609 629h2v2h-2zM609 640h2v2h-2zM609 662h2v2h-2zM609 673h2v2h-2zM609 684h2v2h-2zM609 695h2v2h-2zM609 706h2v2h-2z" fill="#c6c8cc"/>
<path d="M66.5 0V709M132.5 0V709M199.5 0V709M332.5 0V709M399.5 0V709M466.5 0V709M532.5 0V709M0 52.5H616M0 119.5H616M0 185.5H616M0 252.5H616M0 385.5H616M0 452.5H616M0 519.5H616M0 585.5H616" stroke="#c8c8cc" stroke-width="1" stroke-dasharray="1 3" fill="none" opacity=".8"/>
<path d="M266.5 0V709M599.5 0V709M0 319.5H616M0 652.5H616" stroke="#cbcbcb" stroke-width="1" fill="none"/>
</g>
<path clip-rule="evenodd" fill-rule="evenodd" d="M129 37H470V656H129Z M137 44.5H462V649H137Z" fill="#6c6d70"/>
<path d="M129.5 37.5H469.5V655.5H129.5Z M136.5 44.0H462.5V649.5H136.5Z" fill="none" stroke="#4c4f54" stroke-width="1"/>
<rect x="462" y="262" width="3" height="57" fill="#e8d8bb"/>
<rect x="462" y="319" width="1" height="55" fill="#d2d9c1"/>
<rect x="465" y="262" width="5" height="57" fill="#fff"/>
<rect x="463" y="319" width="7" height="55" fill="#fff"/>
<path d="M469.5 262V374" stroke="#5a5c60" stroke-width="1"/>
<path d="M465.5 262V322.5H468.5V262" stroke="#5a5c60" stroke-width="1" fill="none"/>
<path d="M463.5 374V314.5H466.5V374" stroke="#5a5c60" stroke-width="1" fill="none"/>
<path d="M467.5 264V320" stroke="#b0b0b0" stroke-width="1" stroke-dasharray="2 2"/>
<path d="M457 318.5H465" stroke="#5a5c60" stroke-width="1"/>

</svg>
<svg class="a" style="left:495px;top:138px" width="26" height="756" shape-rendering="crispEdges"><path d="M23 33h2v1h-2zM20 45h5v1h-5zM23 56h2v1h-2zM23 67h2v1h-2zM15 78h10v1h-10zM23 89h2v1h-2zM23 100h2v1h-2zM20 111h5v1h-5zM23 122h2v1h-2zM23 133h2v1h-2zM15 145h10v1h-10zM23 156h2v1h-2zM23 167h2v1h-2zM20 178h5v1h-5zM23 189h2v1h-2zM23 200h2v1h-2zM15 211h10v1h-10zM23 222h2v1h-2zM23 233h2v1h-2zM20 245h5v1h-5zM23 256h2v1h-2zM23 267h2v1h-2zM15 278h10v1h-10zM23 289h2v1h-2zM23 300h2v1h-2zM20 311h5v1h-5zM23 322h2v1h-2zM23 333h2v1h-2zM15 345h10v1h-10zM23 356h2v1h-2zM23 367h2v1h-2zM20 378h5v1h-5zM23 389h2v1h-2zM23 400h2v1h-2zM15 411h10v1h-10zM23 422h2v1h-2zM23 433h2v1h-2zM20 445h5v1h-5zM23 456h2v1h-2zM23 467h2v1h-2zM15 478h10v1h-10zM23 489h2v1h-2zM23 500h2v1h-2zM20 511h5v1h-5zM23 522h2v1h-2zM23 533h2v1h-2zM15 545h10v1h-10zM23 556h2v1h-2zM23 567h2v1h-2zM20 578h5v1h-5zM23 589h2v1h-2zM23 600h2v1h-2zM15 611h10v1h-10zM23 622h2v1h-2zM23 633h2v1h-2zM20 645h5v1h-5zM23 656h2v1h-2zM23 667h2v1h-2zM15 678h10v1h-10zM23 689h2v1h-2zM23 700h2v1h-2zM20 711h5v1h-5zM23 722h2v1h-2zM23 733h2v1h-2z" fill="#fff"/></svg><svg class="a" style="left:495px;top:138px" width="642" height="26" shape-rendering="crispEdges"><path d="M47 23h1v2h-1zM58 20h1v5h-1zM69 23h1v2h-1zM80 23h1v2h-1zM92 15h1v10h-1zM103 23h1v2h-1zM114 23h1v2h-1zM125 20h1v5h-1zM136 23h1v2h-1zM147 23h1v2h-1zM158 15h1v10h-1zM169 23h1v2h-1zM180 23h1v2h-1zM192 20h1v5h-1zM203 23h1v2h-1zM214 23h1v2h-1zM225 15h1v10h-1zM236 23h1v2h-1zM247 23h1v2h-1zM258 20h1v5h-1zM269 23h1v2h-1zM280 23h1v2h-1zM292 15h1v10h-1zM303 23h1v2h-1zM314 23h1v2h-1zM325 20h1v5h-1zM336 23h1v2h-1zM347 23h1v2h-1zM358 15h1v10h-1zM369 23h1v2h-1zM380 23h1v2h-1zM392 20h1v5h-1zM403 23h1v2h-1zM414 23h1v2h-1zM425 15h1v10h-1zM436 23h1v2h-1zM447 23h1v2h-1zM458 20h1v5h-1zM469 23h1v2h-1zM480 23h1v2h-1zM492 15h1v10h-1zM503 23h1v2h-1zM514 23h1v2h-1zM525 20h1v5h-1zM536 23h1v2h-1zM547 23h1v2h-1zM558 15h1v10h-1zM569 23h1v2h-1zM580 23h1v2h-1zM592 20h1v5h-1zM603 23h1v2h-1zM614 23h1v2h-1zM625 15h1v10h-1zM636 23h1v2h-1z" fill="#fff"/></svg>
<svg class="a" style="left:525px;top:143px" width="14" height="21"><path d="M1 1 H12 V10 L6.5 19 L1 10 Z" fill="#e8e8e8"/><path d="M12 1 V10 L6.5 19" fill="none" stroke="#111" stroke-width="1.2"/></svg>
<svg class="a" style="left:500px;top:810px" width="22" height="13"><path d="M1 1 H10 L20 6 L10 11 H1 Z" fill="#e8e8e8"/><path d="M1 11 H10 L20 6" fill="none" stroke="#111" stroke-width="1.2"/></svg>
<div class="a" style="left:1137px;top:513px;width:19px;height:22px;background:#cdcdcd"></div>
<div class="a" style="left:883px;top:874px;width:21px;height:20px;background:#cdcdcd"></div>
<svg class="a" style="left:1137px;top:164px" width="20" height="20"><path d="M5.5 12.5 L10 8 L14.5 12.5" fill="none" stroke="#444" stroke-width="2"/></svg>
<svg class="a" style="left:1137px;top:851px" width="20" height="20"><path d="M5.5 8 L10 12.5 L14.5 8" fill="none" stroke="#444" stroke-width="2"/></svg>
<svg class="a" style="left:521px;top:874px" width="20" height="20"><path d="M12 5.5 L7.5 10 L12 14.5" fill="none" stroke="#444" stroke-width="2"/></svg>
<svg class="a" style="left:1115px;top:874px" width="20" height="20"><path d="M8 5.5 L12.5 10 L8 14.5" fill="none" stroke="#444" stroke-width="2"/></svg>
<div class="a" style="left:1157px;top:133px;width:6px;height:767px;background:#15181b"></div>
<div class="a" style="left:1163px;top:133px;width:250px;height:767px;background:#202428"></div>
<div class="a" style="left:1383px;top:136px;width:21px;height:22px;border:2px solid #e0e0e0;background:#1b1e22"></div>
<div class="a" style="left:1398px;top:138px;width:4px;height:18px;background:#f0c030"></div>
<div class="a" style="left:1388px;top:140px;width:0;height:0;border-top:7px solid transparent;border-bottom:7px solid transparent;border-left:8px solid #dfe3f0"></div>
<div class="a" style="left:194px;top:894px;width:1219px;height:6px;background:#1f2226"></div>
<div class="a" style="left:0;top:900px;width:1434px;height:20px;background:#000"></div>
<div class="a" style="left:1413px;top:0;width:21px;height:920px;background:#000"></div>
</body></html>
